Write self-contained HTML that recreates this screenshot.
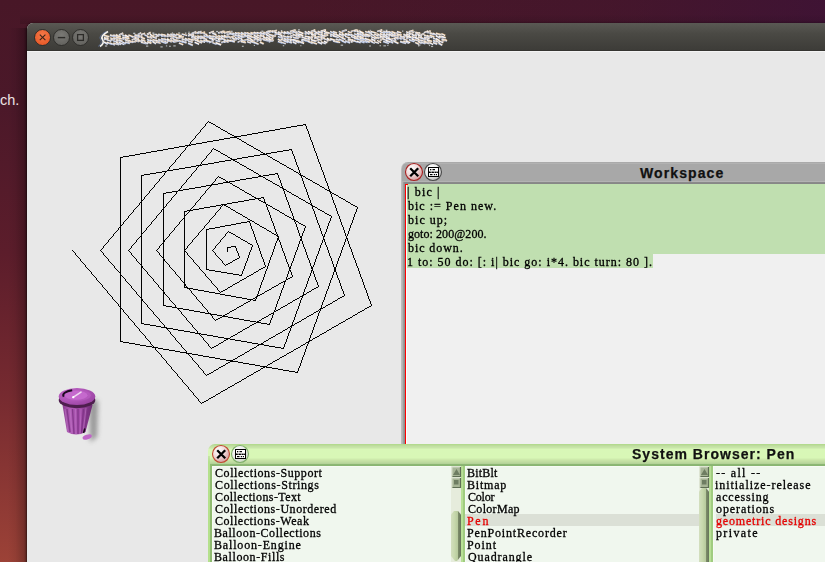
<!DOCTYPE html>
<html><head><meta charset="utf-8">
<style>
*{margin:0;padding:0;box-sizing:border-box}
html,body{width:825px;height:562px;overflow:hidden}
body{position:relative;background:linear-gradient(180deg,#481727 0%,#4b1829 18%,#5c1d2b 45%,#762a30 70%,#9c4237 100%);font-family:"Liberation Sans",sans-serif}
.abs{position:absolute}
#desk-text{left:0px;top:92px;color:#ece2e4;font-size:14.5px}
#uwin{left:27px;top:23px;width:820px;height:560px;border-radius:6px 6px 0 0;background:#e8e8e8;box-shadow:-1px 0 2px rgba(0,0,0,.45)}
#utitle{left:0;top:0;width:100%;height:28px;border-radius:6px 6px 0 0;background:linear-gradient(180deg,#5a5954 0%,#4a4944 40%,#3d3c38 100%);border-bottom:1px solid #363531}
#uline{left:0;top:28px;width:100%;height:1px;background:#f4f4f4}
.ubtn{width:17px;height:17px;border-radius:50%;top:6px}
svg{position:absolute;left:0;top:0}
.pane{font-family:"Liberation Serif",serif;font-size:12px;color:#000;white-space:pre;will-change:transform;-webkit-text-stroke:0.3px currentColor}
.ttl{font-weight:bold;font-size:14px;color:#111;line-height:20px;white-space:pre;-webkit-text-stroke:0.25px #111}
/* workspace */
#ws{left:401px;top:162px;width:500px;height:300px;border-radius:7px 0 0 0;background:linear-gradient(180deg,#aaaaaa 0,#aaaaaa 1px,#b2b2b2 1px,#b2b2b2 2px,#a8a8a8 2px);border-left:1px solid #bdbdbd}
#ws-sep{left:402px;top:181px;width:430px;height:3px;background:linear-gradient(180deg,#b3b3b3 0,#b3b3b3 1px,#8a8a8a 1px,#8a8a8a 2px,#878787 2px)}
#ws-body{left:405px;top:184px;width:430px;height:270px;background:#f0f0f0;border-left:1px solid #ff0000}
#ws-sel{left:406px;top:184px;width:430px;height:70px;background:#c0dfb0}
#ws-sel2{left:406px;top:254px;width:247px;height:14px;background:#c0dfb0}
/* browser */
#br{left:208px;top:444px;width:640px;height:130px;border-radius:7px 0 0 0;background:linear-gradient(180deg,#b3da8e 0px,#b3da8e 1px,#bcdc9b 1px,#bcdc9b 2px,#c3e1a4 2px,#c3e1a4 3px,#c8e5a9 3px,#c8e5a9 4px,#d0eeb0 4px,#d0eeb0 5px,#d8f7b7 5px,#d8f7b7 6px,#d8f7b6 13px,#d8f7b6 14px,#d3f1b2 14px,#d3f1b2 15px,#cde9ab 15px,#cde9ab 16px,#c7e3a6 16px,#c7e3a6 17px,#c2dea2 17px,#c2dea2 18px,#bcd99e 18px,#bcd99e 19px,#b4d398 19px,#b4d398 20px,#8cb774 20px,#8cb774 21px,#8ab572 21px,#8ab572 22px,#b4e08c 22px)}
.list{background:#f0f7ee;top:466px;height:100px;border-left:1px solid #f7fbf5;border-top:1px solid #f7fbf5}
.sb{background:#e6ecdc;top:466px;width:10px;height:100px}
.sep{top:466px;height:100px;background:linear-gradient(90deg,#b8e096 0,#b8e096 50%,#a0cc80 50%,#a0cc80 100%)}
.hl{background:#dbe0d6;height:12px}
.red{color:#e60000}
</style></head><body>
<div class="abs" style="left:8px;top:28px;width:19px;height:540px;background:linear-gradient(90deg,rgba(0,0,0,0) 0,rgba(0,0,0,.06) 40%,rgba(0,0,0,.2) 80%,rgba(0,0,0,.32) 100%)"></div>
<div class="abs" style="left:300px;top:0;width:525px;height:24px;background:linear-gradient(90deg,rgba(62,20,52,0) 0,rgba(62,20,52,.35) 60%,rgba(60,18,56,.75) 100%)"></div>
<div class="abs" style="left:20px;top:14px;width:805px;height:10px;background:linear-gradient(180deg,rgba(0,0,0,0),rgba(0,0,0,.12))"></div>
<svg width="0" height="0" style="position:absolute"><defs><filter id="crisp" x="0" y="0" width="100%" height="100%" color-interpolation-filters="sRGB"><feComponentTransfer><feFuncA type="discrete" tableValues="0 0 1 1 1 1"/></feComponentTransfer></filter></defs></svg>
<div id="desk-text" class="abs">ch.</div>
<div id="uwin" class="abs">
  <div id="utitle" class="abs"></div>
  <div id="uline" class="abs"></div>
  <div class="abs ubtn" style="left:7px;background:radial-gradient(circle at 50% 35%,#f47a4a,#e5511f);border:1px solid #2f2e2b"></div>
  <div class="abs ubtn" style="left:26px;background:radial-gradient(circle at 50% 35%,#7a7975,#5e5d59);border:1px solid #2f2e2b"></div>
  <div class="abs ubtn" style="left:45px;background:radial-gradient(circle at 50% 35%,#7a7975,#5e5d59);border:1px solid #2f2e2b"></div>
</div>
<svg width="100" height="60"><path d="M39.8 34.6L45.4 40.2M45.4 34.6L39.8 40.2" stroke="#3b2418" stroke-width="1.1"/><path d="M57.8 37.6H65.2" stroke="#2c2b28" stroke-width="1.4"/><rect x="77.6" y="34.6" width="5.8" height="5.8" fill="none" stroke="#2c2b28" stroke-width="1.3"/></svg>
<svg width="825" height="60"><path d="M108 31.5 Q100 36 102.5 39.5 Q105 43 100 46.5" stroke="#f2f0ec" stroke-width="1.8" fill="none"/><path d="M106 31.5 Q98 36 100.5 39.5 Q103 43 98 46.5" stroke="#6a8ad0" stroke-width="0.8" fill="none" opacity=".6"/><path d="M104.0 35.4L109.4 36.9" stroke="#fbf1e2" stroke-width="1.9"/><path d="M103.2 36.0L108.6 37.5" stroke="#4a6cc0" stroke-width=".6" opacity=".45"/><path d="M104.8 35.0L110.2 36.5" stroke="#d88a38" stroke-width=".6" opacity=".45"/><path d="M104.0 37.5L108.4 39.2" stroke="#fbf1e2" stroke-width="1.8"/><path d="M103.2 38.1L107.6 39.8" stroke="#4a6cc0" stroke-width=".6" opacity=".45"/><path d="M104.8 37.1L109.2 38.8" stroke="#d88a38" stroke-width=".6" opacity=".45"/><path d="M104.0 39.5L108.2 38.2" stroke="#ffffff" stroke-width="1.9"/><path d="M103.2 40.1L107.4 38.8" stroke="#4a6cc0" stroke-width=".6" opacity=".45"/><path d="M104.8 39.1L109.0 37.8" stroke="#d88a38" stroke-width=".6" opacity=".45"/><path d="M104.0 42.0L107.8 44.1" stroke="#ffffff" stroke-width="1.9"/><path d="M103.2 42.6L107.0 44.7" stroke="#4a6cc0" stroke-width=".6" opacity=".45"/><path d="M104.8 41.6L108.6 43.7" stroke="#d88a38" stroke-width=".6" opacity=".45"/><rect x="104.9" y="45.4" width="2.3" height="1.2" fill="#e0e4ea" opacity=".7"/><path d="M106.7 39.8L111.3 41.3" stroke="#eef0f4" stroke-width="1.5"/><path d="M105.9 40.4L110.5 41.9" stroke="#4a6cc0" stroke-width=".6" opacity=".45"/><path d="M107.5 39.4L112.1 40.9" stroke="#d88a38" stroke-width=".6" opacity=".45"/><path d="M106.7 42.3L111.9 44.3" stroke="#f8f6f2" stroke-width="1.7"/><path d="M105.9 42.9L111.1 44.9" stroke="#4a6cc0" stroke-width=".6" opacity=".45"/><path d="M107.5 41.9L112.7 43.9" stroke="#d88a38" stroke-width=".6" opacity=".45"/><path d="M109.9 35.3L115.8 36.5" stroke="#eef0f4" stroke-width="1.9"/><path d="M109.1 35.9L115.0 37.1" stroke="#4a6cc0" stroke-width=".6" opacity=".45"/><path d="M110.7 34.9L116.6 36.1" stroke="#d88a38" stroke-width=".6" opacity=".45"/><path d="M109.9 37.9L114.9 39.3" stroke="#fbf1e2" stroke-width="1.5"/><path d="M109.1 38.5L114.1 39.9" stroke="#4a6cc0" stroke-width=".6" opacity=".45"/><path d="M110.7 37.5L115.7 38.9" stroke="#d88a38" stroke-width=".6" opacity=".45"/><path d="M109.9 40.7L115.3 38.6" stroke="#eef0f4" stroke-width="1.8"/><path d="M109.1 41.3L114.5 39.2" stroke="#4a6cc0" stroke-width=".6" opacity=".45"/><path d="M110.7 40.3L116.1 38.2" stroke="#d88a38" stroke-width=".6" opacity=".45"/><path d="M109.9 42.9L114.9 45.0" stroke="#eef0f4" stroke-width="1.5"/><path d="M109.1 43.5L114.1 45.6" stroke="#4a6cc0" stroke-width=".6" opacity=".45"/><path d="M110.7 42.5L115.7 44.6" stroke="#d88a38" stroke-width=".6" opacity=".45"/><path d="M113.2 35.2L119.1 36.7" stroke="#eef0f4" stroke-width="1.8"/><path d="M112.4 35.8L118.3 37.3" stroke="#4a6cc0" stroke-width=".6" opacity=".45"/><path d="M114.0 34.8L119.9 36.3" stroke="#d88a38" stroke-width=".6" opacity=".45"/><path d="M113.2 37.9L118.5 39.1" stroke="#fbf1e2" stroke-width="1.6"/><path d="M112.4 38.5L117.7 39.7" stroke="#4a6cc0" stroke-width=".6" opacity=".45"/><path d="M114.0 37.5L119.3 38.7" stroke="#d88a38" stroke-width=".6" opacity=".45"/><path d="M113.2 40.7L117.8 42.1" stroke="#e4ecf8" stroke-width="1.7"/><path d="M112.4 41.3L117.0 42.7" stroke="#4a6cc0" stroke-width=".6" opacity=".45"/><path d="M114.0 40.3L118.6 41.7" stroke="#d88a38" stroke-width=".6" opacity=".45"/><path d="M113.2 43.2L119.2 44.6" stroke="#fbf1e2" stroke-width="1.7"/><path d="M112.4 43.8L118.4 45.2" stroke="#4a6cc0" stroke-width=".6" opacity=".45"/><path d="M114.0 42.8L120.0 44.2" stroke="#d88a38" stroke-width=".6" opacity=".45"/><rect x="115.9" y="33.9" width="1.3" height="1.3" fill="#e6e8ee" opacity=".75"/><path d="M116.1 35.2L120.7 37.0" stroke="#fbf1e2" stroke-width="2.0"/><path d="M115.3 35.8L119.9 37.6" stroke="#4a6cc0" stroke-width=".6" opacity=".45"/><path d="M116.9 34.8L121.5 36.6" stroke="#d88a38" stroke-width=".6" opacity=".45"/><path d="M116.1 37.3L122.0 39.0" stroke="#fbf1e2" stroke-width="1.6"/><path d="M115.3 37.9L121.2 39.6" stroke="#4a6cc0" stroke-width=".6" opacity=".45"/><path d="M116.9 36.9L122.8 38.6" stroke="#d88a38" stroke-width=".6" opacity=".45"/><path d="M116.1 40.0L121.7 41.4" stroke="#fbf1e2" stroke-width="1.9"/><path d="M115.3 40.6L120.9 42.0" stroke="#4a6cc0" stroke-width=".6" opacity=".45"/><path d="M116.9 39.6L122.5 41.0" stroke="#d88a38" stroke-width=".6" opacity=".45"/><path d="M116.1 42.4L121.0 44.4" stroke="#f8f6f2" stroke-width="1.9"/><path d="M115.3 43.0L120.2 45.0" stroke="#4a6cc0" stroke-width=".6" opacity=".45"/><path d="M116.9 42.0L121.8 44.0" stroke="#d88a38" stroke-width=".6" opacity=".45"/><path d="M119.0 35.1L123.2 33.2" stroke="#eef0f4" stroke-width="1.9"/><path d="M118.2 35.7L122.4 33.8" stroke="#4a6cc0" stroke-width=".6" opacity=".45"/><path d="M119.8 34.7L124.0 32.8" stroke="#d88a38" stroke-width=".6" opacity=".45"/><path d="M119.0 39.9L122.6 41.5" stroke="#eef0f4" stroke-width="1.8"/><path d="M118.2 40.5L121.8 42.1" stroke="#4a6cc0" stroke-width=".6" opacity=".45"/><path d="M119.8 39.5L123.4 41.1" stroke="#d88a38" stroke-width=".6" opacity=".45"/><path d="M119.0 42.5L124.5 44.5" stroke="#eef0f4" stroke-width="1.8"/><path d="M118.2 43.1L123.7 45.1" stroke="#4a6cc0" stroke-width=".6" opacity=".45"/><path d="M119.8 42.1L125.3 44.1" stroke="#d88a38" stroke-width=".6" opacity=".45"/><path d="M122.3 35.1L128.3 37.2" stroke="#e4ecf8" stroke-width="1.6"/><path d="M121.5 35.7L127.5 37.8" stroke="#4a6cc0" stroke-width=".6" opacity=".45"/><path d="M123.1 34.7L129.1 36.8" stroke="#d88a38" stroke-width=".6" opacity=".45"/><path d="M122.3 37.2L128.0 39.1" stroke="#f8f6f2" stroke-width="1.9"/><path d="M121.5 37.8L127.2 39.7" stroke="#4a6cc0" stroke-width=".6" opacity=".45"/><path d="M123.1 36.8L128.8 38.7" stroke="#d88a38" stroke-width=".6" opacity=".45"/><path d="M122.3 39.3L127.3 37.4" stroke="#eef0f4" stroke-width="1.8"/><path d="M121.5 39.9L126.5 38.0" stroke="#4a6cc0" stroke-width=".6" opacity=".45"/><path d="M123.1 38.9L128.1 37.0" stroke="#d88a38" stroke-width=".6" opacity=".45"/><path d="M122.3 41.9L125.9 43.7" stroke="#e4ecf8" stroke-width="1.7"/><path d="M121.5 42.5L125.1 44.3" stroke="#4a6cc0" stroke-width=".6" opacity=".45"/><path d="M123.1 41.5L126.7 43.3" stroke="#d88a38" stroke-width=".6" opacity=".45"/><path d="M125.0 35.0L129.0 37.2" stroke="#ffffff" stroke-width="1.6"/><path d="M124.2 35.6L128.2 37.8" stroke="#4a6cc0" stroke-width=".6" opacity=".45"/><path d="M125.8 34.6L129.8 36.8" stroke="#d88a38" stroke-width=".6" opacity=".45"/><path d="M125.0 37.4L129.5 38.7" stroke="#fbf1e2" stroke-width="1.8"/><path d="M124.2 38.0L128.7 39.3" stroke="#4a6cc0" stroke-width=".6" opacity=".45"/><path d="M125.8 37.0L130.3 38.3" stroke="#d88a38" stroke-width=".6" opacity=".45"/><path d="M125.0 39.6L129.4 41.6" stroke="#fbf1e2" stroke-width="2.0"/><path d="M124.2 40.2L128.6 42.2" stroke="#4a6cc0" stroke-width=".6" opacity=".45"/><path d="M125.8 39.2L130.2 41.2" stroke="#d88a38" stroke-width=".6" opacity=".45"/><path d="M125.0 42.2L129.8 43.5" stroke="#e4ecf8" stroke-width="1.8"/><path d="M124.2 42.8L129.0 44.1" stroke="#4a6cc0" stroke-width=".6" opacity=".45"/><path d="M125.8 41.8L130.6 43.1" stroke="#d88a38" stroke-width=".6" opacity=".45"/><path d="M128.3 34.9L132.9 36.7" stroke="#fbf1e2" stroke-width="1.6"/><path d="M127.5 35.5L132.1 37.3" stroke="#4a6cc0" stroke-width=".6" opacity=".45"/><path d="M129.1 34.5L133.7 36.3" stroke="#d88a38" stroke-width=".6" opacity=".45"/><path d="M128.3 40.2L132.7 41.9" stroke="#fbf1e2" stroke-width="1.6"/><path d="M127.5 40.8L131.9 42.5" stroke="#4a6cc0" stroke-width=".6" opacity=".45"/><path d="M129.1 39.8L133.5 41.5" stroke="#d88a38" stroke-width=".6" opacity=".45"/><path d="M128.3 42.7L133.4 41.2" stroke="#fbf1e2" stroke-width="1.7"/><path d="M127.5 43.3L132.6 41.8" stroke="#4a6cc0" stroke-width=".6" opacity=".45"/><path d="M129.1 42.3L134.2 40.8" stroke="#d88a38" stroke-width=".6" opacity=".45"/><path d="M131.7 37.3L137.7 35.8" stroke="#eef0f4" stroke-width="1.7"/><path d="M130.9 37.9L136.9 36.4" stroke="#4a6cc0" stroke-width=".6" opacity=".45"/><path d="M132.5 36.9L138.5 35.4" stroke="#d88a38" stroke-width=".6" opacity=".45"/><path d="M131.7 40.1L135.9 38.3" stroke="#f8f6f2" stroke-width="1.6"/><path d="M130.9 40.7L135.1 38.9" stroke="#4a6cc0" stroke-width=".6" opacity=".45"/><path d="M132.5 39.7L136.7 37.9" stroke="#d88a38" stroke-width=".6" opacity=".45"/><path d="M131.7 42.5L137.2 40.7" stroke="#f8f6f2" stroke-width="1.7"/><path d="M130.9 43.1L136.4 41.3" stroke="#4a6cc0" stroke-width=".6" opacity=".45"/><path d="M132.5 42.1L138.0 40.3" stroke="#d88a38" stroke-width=".6" opacity=".45"/><rect x="133.2" y="32.7" width="2.1" height="1.3" fill="#e6e8ee" opacity=".75"/><path d="M134.5 34.8L140.5 36.3" stroke="#f8f6f2" stroke-width="1.9"/><path d="M133.7 35.4L139.7 36.9" stroke="#4a6cc0" stroke-width=".6" opacity=".45"/><path d="M135.3 34.4L141.3 35.9" stroke="#d88a38" stroke-width=".6" opacity=".45"/><path d="M134.5 37.2L138.8 39.1" stroke="#fbf1e2" stroke-width="1.7"/><path d="M133.7 37.8L138.0 39.7" stroke="#4a6cc0" stroke-width=".6" opacity=".45"/><path d="M135.3 36.8L139.6 38.7" stroke="#d88a38" stroke-width=".6" opacity=".45"/><path d="M134.5 39.9L138.0 38.1" stroke="#f8f6f2" stroke-width="1.9"/><path d="M133.7 40.5L137.2 38.7" stroke="#4a6cc0" stroke-width=".6" opacity=".45"/><path d="M135.3 39.5L138.8 37.7" stroke="#d88a38" stroke-width=".6" opacity=".45"/><path d="M134.5 41.9L139.1 40.0" stroke="#fbf1e2" stroke-width="1.7"/><path d="M133.7 42.5L138.3 40.6" stroke="#4a6cc0" stroke-width=".6" opacity=".45"/><path d="M135.3 41.5L139.9 39.6" stroke="#d88a38" stroke-width=".6" opacity=".45"/><path d="M137.7 34.7L141.2 32.8" stroke="#e4ecf8" stroke-width="1.6"/><path d="M136.9 35.3L140.4 33.4" stroke="#4a6cc0" stroke-width=".6" opacity=".45"/><path d="M138.5 34.3L142.0 32.4" stroke="#d88a38" stroke-width=".6" opacity=".45"/><path d="M137.7 37.5L142.4 35.8" stroke="#eef0f4" stroke-width="1.8"/><path d="M136.9 38.1L141.6 36.4" stroke="#4a6cc0" stroke-width=".6" opacity=".45"/><path d="M138.5 37.1L143.2 35.4" stroke="#d88a38" stroke-width=".6" opacity=".45"/><path d="M137.7 39.9L143.1 41.8" stroke="#f8f6f2" stroke-width="1.9"/><path d="M136.9 40.5L142.3 42.4" stroke="#4a6cc0" stroke-width=".6" opacity=".45"/><path d="M138.5 39.5L143.9 41.4" stroke="#d88a38" stroke-width=".6" opacity=".45"/><path d="M137.7 41.9L143.7 39.9" stroke="#fbf1e2" stroke-width="1.5"/><path d="M136.9 42.5L142.9 40.5" stroke="#4a6cc0" stroke-width=".6" opacity=".45"/><path d="M138.5 41.5L144.5 39.5" stroke="#d88a38" stroke-width=".6" opacity=".45"/><path d="M140.9 34.7L145.1 33.3" stroke="#ffffff" stroke-width="1.6"/><path d="M140.1 35.3L144.3 33.9" stroke="#4a6cc0" stroke-width=".6" opacity=".45"/><path d="M141.7 34.3L145.9 32.9" stroke="#d88a38" stroke-width=".6" opacity=".45"/><path d="M140.9 37.3L144.9 38.8" stroke="#fbf1e2" stroke-width="1.9"/><path d="M140.1 37.9L144.1 39.4" stroke="#4a6cc0" stroke-width=".6" opacity=".45"/><path d="M141.7 36.9L145.7 38.4" stroke="#d88a38" stroke-width=".6" opacity=".45"/><path d="M140.9 39.8L145.4 41.3" stroke="#f8f6f2" stroke-width="1.7"/><path d="M140.1 40.4L144.6 41.9" stroke="#4a6cc0" stroke-width=".6" opacity=".45"/><path d="M141.7 39.4L146.2 40.9" stroke="#d88a38" stroke-width=".6" opacity=".45"/><path d="M140.9 42.3L146.7 43.8" stroke="#f8f6f2" stroke-width="1.6"/><path d="M140.1 42.9L145.9 44.4" stroke="#4a6cc0" stroke-width=".6" opacity=".45"/><path d="M141.7 41.9L147.5 43.4" stroke="#d88a38" stroke-width=".6" opacity=".45"/><path d="M144.3 34.6L148.3 36.6" stroke="#e4ecf8" stroke-width="1.6"/><path d="M143.5 35.2L147.5 37.2" stroke="#4a6cc0" stroke-width=".6" opacity=".45"/><path d="M145.1 34.2L149.1 36.2" stroke="#d88a38" stroke-width=".6" opacity=".45"/><path d="M144.3 41.9L148.1 43.7" stroke="#eef0f4" stroke-width="1.5"/><path d="M143.5 42.5L147.3 44.3" stroke="#4a6cc0" stroke-width=".6" opacity=".45"/><path d="M145.1 41.5L148.9 43.3" stroke="#d88a38" stroke-width=".6" opacity=".45"/><rect x="146.0" y="45.5" width="2.3" height="1.2" fill="#e0e4ea" opacity=".7"/><path d="M147.1 34.6L150.7 32.4" stroke="#f8f6f2" stroke-width="1.9"/><path d="M146.3 35.2L149.9 33.0" stroke="#4a6cc0" stroke-width=".6" opacity=".45"/><path d="M147.9 34.2L151.5 32.0" stroke="#d88a38" stroke-width=".6" opacity=".45"/><path d="M147.1 36.9L152.5 38.2" stroke="#fbf1e2" stroke-width="1.9"/><path d="M146.3 37.5L151.7 38.8" stroke="#4a6cc0" stroke-width=".6" opacity=".45"/><path d="M147.9 36.5L153.3 37.8" stroke="#d88a38" stroke-width=".6" opacity=".45"/><path d="M147.1 39.4L151.2 41.4" stroke="#e4ecf8" stroke-width="1.9"/><path d="M146.3 40.0L150.4 42.0" stroke="#4a6cc0" stroke-width=".6" opacity=".45"/><path d="M147.9 39.0L152.0 41.0" stroke="#d88a38" stroke-width=".6" opacity=".45"/><path d="M147.1 41.7L151.5 43.3" stroke="#fbf1e2" stroke-width="2.0"/><path d="M146.3 42.3L150.7 43.9" stroke="#4a6cc0" stroke-width=".6" opacity=".45"/><path d="M147.9 41.3L152.3 42.9" stroke="#d88a38" stroke-width=".6" opacity=".45"/><path d="M149.9 34.5L153.5 36.2" stroke="#ffffff" stroke-width="1.6"/><path d="M149.1 35.1L152.7 36.8" stroke="#4a6cc0" stroke-width=".6" opacity=".45"/><path d="M150.7 34.1L154.3 35.8" stroke="#d88a38" stroke-width=".6" opacity=".45"/><path d="M149.9 37.3L154.2 35.1" stroke="#fbf1e2" stroke-width="1.7"/><path d="M149.1 37.9L153.4 35.7" stroke="#4a6cc0" stroke-width=".6" opacity=".45"/><path d="M150.7 36.9L155.0 34.7" stroke="#d88a38" stroke-width=".6" opacity=".45"/><path d="M149.9 40.0L154.5 41.3" stroke="#ffffff" stroke-width="1.8"/><path d="M149.1 40.6L153.7 41.9" stroke="#4a6cc0" stroke-width=".6" opacity=".45"/><path d="M150.7 39.6L155.3 40.9" stroke="#d88a38" stroke-width=".6" opacity=".45"/><rect x="152.3" y="32.5" width="2.0" height="1.3" fill="#e6e8ee" opacity=".75"/><path d="M152.5 36.7L156.8 38.4" stroke="#f8f6f2" stroke-width="1.8"/><path d="M151.7 37.3L156.0 39.0" stroke="#4a6cc0" stroke-width=".6" opacity=".45"/><path d="M153.3 36.3L157.6 38.0" stroke="#d88a38" stroke-width=".6" opacity=".45"/><path d="M152.5 39.5L157.7 41.4" stroke="#fbf1e2" stroke-width="1.8"/><path d="M151.7 40.1L156.9 42.0" stroke="#4a6cc0" stroke-width=".6" opacity=".45"/><path d="M153.3 39.1L158.5 41.0" stroke="#d88a38" stroke-width=".6" opacity=".45"/><path d="M152.5 41.6L156.0 43.7" stroke="#f8f6f2" stroke-width="1.8"/><path d="M151.7 42.2L155.2 44.3" stroke="#4a6cc0" stroke-width=".6" opacity=".45"/><path d="M153.3 41.2L156.8 43.3" stroke="#d88a38" stroke-width=".6" opacity=".45"/><rect x="153.6" y="33.8" width="2.5" height="1.3" fill="#e6e8ee" opacity=".75"/><path d="M155.5 34.4L159.4 36.0" stroke="#f8f6f2" stroke-width="1.8"/><path d="M154.7 35.0L158.6 36.6" stroke="#4a6cc0" stroke-width=".6" opacity=".45"/><path d="M156.3 34.0L160.2 35.6" stroke="#d88a38" stroke-width=".6" opacity=".45"/><path d="M155.5 37.2L159.1 35.4" stroke="#ffffff" stroke-width="1.5"/><path d="M154.7 37.8L158.3 36.0" stroke="#4a6cc0" stroke-width=".6" opacity=".45"/><path d="M156.3 36.8L159.9 35.0" stroke="#d88a38" stroke-width=".6" opacity=".45"/><path d="M155.5 40.0L159.8 42.0" stroke="#f8f6f2" stroke-width="1.6"/><path d="M154.7 40.6L159.0 42.6" stroke="#4a6cc0" stroke-width=".6" opacity=".45"/><path d="M156.3 39.6L160.6 41.6" stroke="#d88a38" stroke-width=".6" opacity=".45"/><path d="M155.5 42.0L160.7 43.3" stroke="#fbf1e2" stroke-width="1.7"/><path d="M154.7 42.6L159.9 43.9" stroke="#4a6cc0" stroke-width=".6" opacity=".45"/><path d="M156.3 41.6L161.5 42.9" stroke="#d88a38" stroke-width=".6" opacity=".45"/><path d="M158.1 34.3L164.0 35.7" stroke="#e4ecf8" stroke-width="1.8"/><path d="M157.3 34.9L163.2 36.3" stroke="#4a6cc0" stroke-width=".6" opacity=".45"/><path d="M158.9 33.9L164.8 35.3" stroke="#d88a38" stroke-width=".6" opacity=".45"/><path d="M158.1 39.2L164.1 41.1" stroke="#e4ecf8" stroke-width="1.5"/><path d="M157.3 39.8L163.3 41.7" stroke="#4a6cc0" stroke-width=".6" opacity=".45"/><path d="M158.9 38.8L164.9 40.7" stroke="#d88a38" stroke-width=".6" opacity=".45"/><path d="M158.1 41.7L162.5 39.9" stroke="#e4ecf8" stroke-width="1.9"/><path d="M157.3 42.3L161.7 40.5" stroke="#4a6cc0" stroke-width=".6" opacity=".45"/><path d="M158.9 41.3L163.3 39.5" stroke="#d88a38" stroke-width=".6" opacity=".45"/><rect x="160.4" y="46.3" width="2.3" height="1.2" fill="#e0e4ea" opacity=".7"/><path d="M161.1 34.3L165.9 35.6" stroke="#fbf1e2" stroke-width="1.7"/><path d="M160.3 34.9L165.1 36.2" stroke="#4a6cc0" stroke-width=".6" opacity=".45"/><path d="M161.9 33.9L166.7 35.2" stroke="#d88a38" stroke-width=".6" opacity=".45"/><path d="M161.1 36.3L164.9 34.9" stroke="#e4ecf8" stroke-width="1.8"/><path d="M160.3 36.9L164.1 35.5" stroke="#4a6cc0" stroke-width=".6" opacity=".45"/><path d="M161.9 35.9L165.7 34.5" stroke="#d88a38" stroke-width=".6" opacity=".45"/><path d="M161.1 38.7L166.4 40.0" stroke="#eef0f4" stroke-width="1.9"/><path d="M160.3 39.3L165.6 40.6" stroke="#4a6cc0" stroke-width=".6" opacity=".45"/><path d="M161.9 38.3L167.2 39.6" stroke="#d88a38" stroke-width=".6" opacity=".45"/><path d="M161.1 41.4L166.6 43.3" stroke="#eef0f4" stroke-width="1.8"/><path d="M160.3 42.0L165.8 43.9" stroke="#4a6cc0" stroke-width=".6" opacity=".45"/><path d="M161.9 41.0L167.4 42.9" stroke="#d88a38" stroke-width=".6" opacity=".45"/><path d="M164.3 36.8L168.4 35.5" stroke="#e4ecf8" stroke-width="1.6"/><path d="M163.5 37.4L167.6 36.1" stroke="#4a6cc0" stroke-width=".6" opacity=".45"/><path d="M165.1 36.4L169.2 35.1" stroke="#d88a38" stroke-width=".6" opacity=".45"/><path d="M164.3 38.9L169.5 40.9" stroke="#f8f6f2" stroke-width="1.5"/><path d="M163.5 39.5L168.7 41.5" stroke="#4a6cc0" stroke-width=".6" opacity=".45"/><path d="M165.1 38.5L170.3 40.5" stroke="#d88a38" stroke-width=".6" opacity=".45"/><path d="M164.3 41.4L167.9 42.8" stroke="#eef0f4" stroke-width="1.7"/><path d="M163.5 42.0L167.1 43.4" stroke="#4a6cc0" stroke-width=".6" opacity=".45"/><path d="M165.1 41.0L168.7 42.4" stroke="#d88a38" stroke-width=".6" opacity=".45"/><rect x="165.9" y="45.3" width="1.3" height="1.2" fill="#e0e4ea" opacity=".7"/><path d="M167.0 34.2L170.9 35.5" stroke="#eef0f4" stroke-width="1.8"/><path d="M166.2 34.8L170.1 36.1" stroke="#4a6cc0" stroke-width=".6" opacity=".45"/><path d="M167.8 33.8L171.7 35.1" stroke="#d88a38" stroke-width=".6" opacity=".45"/><path d="M167.0 36.7L172.8 35.1" stroke="#f8f6f2" stroke-width="1.7"/><path d="M166.2 37.3L172.0 35.7" stroke="#4a6cc0" stroke-width=".6" opacity=".45"/><path d="M167.8 36.3L173.6 34.7" stroke="#d88a38" stroke-width=".6" opacity=".45"/><path d="M167.0 38.9L170.9 41.1" stroke="#ffffff" stroke-width="1.8"/><path d="M166.2 39.5L170.1 41.7" stroke="#4a6cc0" stroke-width=".6" opacity=".45"/><path d="M167.8 38.5L171.7 40.7" stroke="#d88a38" stroke-width=".6" opacity=".45"/><path d="M167.0 41.4L172.5 40.2" stroke="#f8f6f2" stroke-width="1.6"/><path d="M166.2 42.0L171.7 40.8" stroke="#4a6cc0" stroke-width=".6" opacity=".45"/><path d="M167.8 41.0L173.3 39.8" stroke="#d88a38" stroke-width=".6" opacity=".45"/><rect x="169.1" y="45.7" width="1.7" height="1.2" fill="#e0e4ea" opacity=".7"/><path d="M170.3 34.1L175.0 35.5" stroke="#eef0f4" stroke-width="1.7"/><path d="M169.5 34.7L174.2 36.1" stroke="#4a6cc0" stroke-width=".6" opacity=".45"/><path d="M171.1 33.7L175.8 35.1" stroke="#d88a38" stroke-width=".6" opacity=".45"/><path d="M170.3 36.9L175.9 35.5" stroke="#fbf1e2" stroke-width="1.7"/><path d="M169.5 37.5L175.1 36.1" stroke="#4a6cc0" stroke-width=".6" opacity=".45"/><path d="M171.1 36.5L176.7 35.1" stroke="#d88a38" stroke-width=".6" opacity=".45"/><path d="M170.3 39.1L174.0 37.6" stroke="#f8f6f2" stroke-width="1.9"/><path d="M169.5 39.7L173.2 38.2" stroke="#4a6cc0" stroke-width=".6" opacity=".45"/><path d="M171.1 38.7L174.8 37.2" stroke="#d88a38" stroke-width=".6" opacity=".45"/><path d="M170.3 41.8L175.6 40.0" stroke="#fbf1e2" stroke-width="1.9"/><path d="M169.5 42.4L174.8 40.6" stroke="#4a6cc0" stroke-width=".6" opacity=".45"/><path d="M171.1 41.4L176.4 39.6" stroke="#d88a38" stroke-width=".6" opacity=".45"/><rect x="171.8" y="32.4" width="1.3" height="1.3" fill="#e6e8ee" opacity=".75"/><path d="M173.2 34.0L176.7 35.7" stroke="#e4ecf8" stroke-width="1.7"/><path d="M172.4 34.6L175.9 36.3" stroke="#4a6cc0" stroke-width=".6" opacity=".45"/><path d="M174.0 33.6L177.5 35.3" stroke="#d88a38" stroke-width=".6" opacity=".45"/><path d="M173.2 36.6L179.1 38.2" stroke="#e4ecf8" stroke-width="1.6"/><path d="M172.4 37.2L178.3 38.8" stroke="#4a6cc0" stroke-width=".6" opacity=".45"/><path d="M174.0 36.2L179.9 37.8" stroke="#d88a38" stroke-width=".6" opacity=".45"/><path d="M173.2 39.4L178.6 40.6" stroke="#eef0f4" stroke-width="1.6"/><path d="M172.4 40.0L177.8 41.2" stroke="#4a6cc0" stroke-width=".6" opacity=".45"/><path d="M174.0 39.0L179.4 40.2" stroke="#d88a38" stroke-width=".6" opacity=".45"/><path d="M173.2 42.0L178.8 40.8" stroke="#eef0f4" stroke-width="2.0"/><path d="M172.4 42.6L178.0 41.4" stroke="#4a6cc0" stroke-width=".6" opacity=".45"/><path d="M174.0 41.6L179.6 40.4" stroke="#d88a38" stroke-width=".6" opacity=".45"/><rect x="173.3" y="45.3" width="2.4" height="1.2" fill="#e0e4ea" opacity=".7"/><path d="M176.0 34.0L181.9 36.1" stroke="#fbf1e2" stroke-width="1.8"/><path d="M175.2 34.6L181.1 36.7" stroke="#4a6cc0" stroke-width=".6" opacity=".45"/><path d="M176.8 33.6L182.7 35.7" stroke="#d88a38" stroke-width=".6" opacity=".45"/><path d="M176.0 38.6L179.6 36.8" stroke="#fbf1e2" stroke-width="1.6"/><path d="M175.2 39.2L178.8 37.4" stroke="#4a6cc0" stroke-width=".6" opacity=".45"/><path d="M176.8 38.2L180.4 36.4" stroke="#d88a38" stroke-width=".6" opacity=".45"/><rect x="178.1" y="32.4" width="2.1" height="1.3" fill="#e6e8ee" opacity=".75"/><path d="M178.9 36.1L183.1 37.7" stroke="#ffffff" stroke-width="1.5"/><path d="M178.1 36.7L182.3 38.3" stroke="#4a6cc0" stroke-width=".6" opacity=".45"/><path d="M179.7 35.7L183.9 37.3" stroke="#d88a38" stroke-width=".6" opacity=".45"/><path d="M178.9 38.2L183.9 36.6" stroke="#fbf1e2" stroke-width="1.6"/><path d="M178.1 38.8L183.1 37.2" stroke="#4a6cc0" stroke-width=".6" opacity=".45"/><path d="M179.7 37.8L184.7 36.2" stroke="#d88a38" stroke-width=".6" opacity=".45"/><path d="M178.9 40.7L183.5 42.2" stroke="#e4ecf8" stroke-width="1.9"/><path d="M178.1 41.3L182.7 42.8" stroke="#4a6cc0" stroke-width=".6" opacity=".45"/><path d="M179.7 40.3L184.3 41.8" stroke="#d88a38" stroke-width=".6" opacity=".45"/><path d="M178.9 43.1L183.2 44.8" stroke="#fbf1e2" stroke-width="1.6"/><path d="M178.1 43.7L182.4 45.4" stroke="#4a6cc0" stroke-width=".6" opacity=".45"/><path d="M179.7 42.7L184.0 44.4" stroke="#d88a38" stroke-width=".6" opacity=".45"/><path d="M181.6 33.9L187.2 35.5" stroke="#eef0f4" stroke-width="1.6"/><path d="M180.8 34.5L186.4 36.1" stroke="#4a6cc0" stroke-width=".6" opacity=".45"/><path d="M182.4 33.5L188.0 35.1" stroke="#d88a38" stroke-width=".6" opacity=".45"/><path d="M181.6 38.9L187.1 40.2" stroke="#f8f6f2" stroke-width="1.6"/><path d="M180.8 39.5L186.3 40.8" stroke="#4a6cc0" stroke-width=".6" opacity=".45"/><path d="M182.4 38.5L187.9 39.8" stroke="#d88a38" stroke-width=".6" opacity=".45"/><path d="M181.6 41.0L186.6 42.9" stroke="#e4ecf8" stroke-width="1.9"/><path d="M180.8 41.6L185.8 43.5" stroke="#4a6cc0" stroke-width=".6" opacity=".45"/><path d="M182.4 40.6L187.4 42.5" stroke="#d88a38" stroke-width=".6" opacity=".45"/><path d="M184.9 38.4L188.6 40.0" stroke="#eef0f4" stroke-width="1.7"/><path d="M184.1 39.0L187.8 40.6" stroke="#4a6cc0" stroke-width=".6" opacity=".45"/><path d="M185.7 38.0L189.4 39.6" stroke="#d88a38" stroke-width=".6" opacity=".45"/><path d="M184.9 40.9L188.6 39.7" stroke="#e4ecf8" stroke-width="1.7"/><path d="M184.1 41.5L187.8 40.3" stroke="#4a6cc0" stroke-width=".6" opacity=".45"/><path d="M185.7 40.5L189.4 39.3" stroke="#d88a38" stroke-width=".6" opacity=".45"/><rect x="184.9" y="32.5" width="1.5" height="1.3" fill="#e6e8ee" opacity=".75"/><path d="M188.1 33.7L194.0 35.4" stroke="#f8f6f2" stroke-width="1.6"/><path d="M187.3 34.3L193.2 36.0" stroke="#4a6cc0" stroke-width=".6" opacity=".45"/><path d="M188.9 33.3L194.8 35.0" stroke="#d88a38" stroke-width=".6" opacity=".45"/><path d="M188.1 36.0L193.9 34.3" stroke="#ffffff" stroke-width="1.6"/><path d="M187.3 36.6L193.1 34.9" stroke="#4a6cc0" stroke-width=".6" opacity=".45"/><path d="M188.9 35.6L194.7 33.9" stroke="#d88a38" stroke-width=".6" opacity=".45"/><path d="M188.1 38.6L193.1 40.6" stroke="#fbf1e2" stroke-width="1.7"/><path d="M187.3 39.2L192.3 41.2" stroke="#4a6cc0" stroke-width=".6" opacity=".45"/><path d="M188.9 38.2L193.9 40.2" stroke="#d88a38" stroke-width=".6" opacity=".45"/><path d="M188.1 41.0L192.7 42.3" stroke="#eef0f4" stroke-width="1.8"/><path d="M187.3 41.6L191.9 42.9" stroke="#4a6cc0" stroke-width=".6" opacity=".45"/><path d="M188.9 40.6L193.5 41.9" stroke="#d88a38" stroke-width=".6" opacity=".45"/><path d="M188.1 43.2L192.8 45.3" stroke="#e4ecf8" stroke-width="1.9"/><path d="M187.3 43.8L192.0 45.9" stroke="#4a6cc0" stroke-width=".6" opacity=".45"/><path d="M188.9 42.8L193.6 44.9" stroke="#d88a38" stroke-width=".6" opacity=".45"/><rect x="188.4" y="31.6" width="1.2" height="1.3" fill="#e6e8ee" opacity=".75"/><path d="M191.4 33.7L196.3 31.5" stroke="#e4ecf8" stroke-width="1.5"/><path d="M190.6 34.3L195.5 32.1" stroke="#4a6cc0" stroke-width=".6" opacity=".45"/><path d="M192.2 33.3L197.1 31.1" stroke="#d88a38" stroke-width=".6" opacity=".45"/><path d="M191.4 35.8L194.9 37.9" stroke="#eef0f4" stroke-width="1.8"/><path d="M190.6 36.4L194.1 38.5" stroke="#4a6cc0" stroke-width=".6" opacity=".45"/><path d="M192.2 35.4L195.7 37.5" stroke="#d88a38" stroke-width=".6" opacity=".45"/><path d="M191.4 38.2L195.3 36.3" stroke="#e4ecf8" stroke-width="2.0"/><path d="M190.6 38.8L194.5 36.9" stroke="#4a6cc0" stroke-width=".6" opacity=".45"/><path d="M192.2 37.8L196.1 35.9" stroke="#d88a38" stroke-width=".6" opacity=".45"/><path d="M191.4 40.7L195.4 38.7" stroke="#fbf1e2" stroke-width="1.9"/><path d="M190.6 41.3L194.6 39.3" stroke="#4a6cc0" stroke-width=".6" opacity=".45"/><path d="M192.2 40.3L196.2 38.3" stroke="#d88a38" stroke-width=".6" opacity=".45"/><rect x="192.4" y="32.6" width="1.3" height="1.3" fill="#e6e8ee" opacity=".75"/><path d="M194.6 33.6L199.1 32.3" stroke="#fbf1e2" stroke-width="1.6"/><path d="M193.8 34.2L198.3 32.9" stroke="#4a6cc0" stroke-width=".6" opacity=".45"/><path d="M195.4 33.2L199.9 31.9" stroke="#d88a38" stroke-width=".6" opacity=".45"/><path d="M194.6 35.9L199.7 37.8" stroke="#fbf1e2" stroke-width="1.5"/><path d="M193.8 36.5L198.9 38.4" stroke="#4a6cc0" stroke-width=".6" opacity=".45"/><path d="M195.4 35.5L200.5 37.4" stroke="#d88a38" stroke-width=".6" opacity=".45"/><path d="M194.6 37.9L198.5 39.7" stroke="#fbf1e2" stroke-width="2.0"/><path d="M193.8 38.5L197.7 40.3" stroke="#4a6cc0" stroke-width=".6" opacity=".45"/><path d="M195.4 37.5L199.3 39.3" stroke="#d88a38" stroke-width=".6" opacity=".45"/><path d="M194.6 40.0L200.4 41.7" stroke="#f8f6f2" stroke-width="1.6"/><path d="M193.8 40.6L199.6 42.3" stroke="#4a6cc0" stroke-width=".6" opacity=".45"/><path d="M195.4 39.6L201.2 41.3" stroke="#d88a38" stroke-width=".6" opacity=".45"/><path d="M194.6 42.2L199.1 44.3" stroke="#ffffff" stroke-width="1.6"/><path d="M193.8 42.8L198.3 44.9" stroke="#4a6cc0" stroke-width=".6" opacity=".45"/><path d="M195.4 41.8L199.9 43.9" stroke="#d88a38" stroke-width=".6" opacity=".45"/><path d="M197.3 33.6L201.6 31.4" stroke="#e4ecf8" stroke-width="1.8"/><path d="M196.5 34.2L200.8 32.0" stroke="#4a6cc0" stroke-width=".6" opacity=".45"/><path d="M198.1 33.2L202.4 31.0" stroke="#d88a38" stroke-width=".6" opacity=".45"/><path d="M197.3 35.7L201.5 37.4" stroke="#fbf1e2" stroke-width="1.6"/><path d="M196.5 36.3L200.7 38.0" stroke="#4a6cc0" stroke-width=".6" opacity=".45"/><path d="M198.1 35.3L202.3 37.0" stroke="#d88a38" stroke-width=".6" opacity=".45"/><path d="M197.3 38.3L202.8 36.5" stroke="#ffffff" stroke-width="1.8"/><path d="M196.5 38.9L202.0 37.1" stroke="#4a6cc0" stroke-width=".6" opacity=".45"/><path d="M198.1 37.9L203.6 36.1" stroke="#d88a38" stroke-width=".6" opacity=".45"/><path d="M197.3 40.9L202.1 42.9" stroke="#fbf1e2" stroke-width="1.9"/><path d="M196.5 41.5L201.3 43.5" stroke="#4a6cc0" stroke-width=".6" opacity=".45"/><path d="M198.1 40.5L202.9 42.5" stroke="#d88a38" stroke-width=".6" opacity=".45"/><rect x="197.7" y="31.2" width="1.9" height="1.3" fill="#e6e8ee" opacity=".75"/><path d="M200.2 33.5L205.1 32.1" stroke="#fbf1e2" stroke-width="1.7"/><path d="M199.4 34.1L204.3 32.7" stroke="#4a6cc0" stroke-width=".6" opacity=".45"/><path d="M201.0 33.1L205.9 31.7" stroke="#d88a38" stroke-width=".6" opacity=".45"/><path d="M200.2 36.2L204.8 37.5" stroke="#e4ecf8" stroke-width="1.8"/><path d="M199.4 36.8L204.0 38.1" stroke="#4a6cc0" stroke-width=".6" opacity=".45"/><path d="M201.0 35.8L205.6 37.1" stroke="#d88a38" stroke-width=".6" opacity=".45"/><path d="M200.2 38.7L204.6 37.4" stroke="#ffffff" stroke-width="1.7"/><path d="M199.4 39.3L203.8 38.0" stroke="#4a6cc0" stroke-width=".6" opacity=".45"/><path d="M201.0 38.3L205.4 37.0" stroke="#d88a38" stroke-width=".6" opacity=".45"/><path d="M200.2 40.7L205.1 42.0" stroke="#f8f6f2" stroke-width="1.9"/><path d="M199.4 41.3L204.3 42.6" stroke="#4a6cc0" stroke-width=".6" opacity=".45"/><path d="M201.0 40.3L205.9 41.6" stroke="#d88a38" stroke-width=".6" opacity=".45"/><path d="M203.4 33.4L207.3 34.7" stroke="#eef0f4" stroke-width="1.6"/><path d="M202.6 34.0L206.5 35.3" stroke="#4a6cc0" stroke-width=".6" opacity=".45"/><path d="M204.2 33.0L208.1 34.3" stroke="#d88a38" stroke-width=".6" opacity=".45"/><path d="M203.4 35.6L208.9 37.3" stroke="#e4ecf8" stroke-width="1.9"/><path d="M202.6 36.2L208.1 37.9" stroke="#4a6cc0" stroke-width=".6" opacity=".45"/><path d="M204.2 35.2L209.7 36.9" stroke="#d88a38" stroke-width=".6" opacity=".45"/><path d="M203.4 38.4L207.2 39.6" stroke="#eef0f4" stroke-width="1.8"/><path d="M202.6 39.0L206.4 40.2" stroke="#4a6cc0" stroke-width=".6" opacity=".45"/><path d="M204.2 38.0L208.0 39.2" stroke="#d88a38" stroke-width=".6" opacity=".45"/><path d="M203.4 40.4L208.1 41.7" stroke="#f8f6f2" stroke-width="1.8"/><path d="M202.6 41.0L207.3 42.3" stroke="#4a6cc0" stroke-width=".6" opacity=".45"/><path d="M204.2 40.0L208.9 41.3" stroke="#d88a38" stroke-width=".6" opacity=".45"/><path d="M206.2 35.5L211.4 37.1" stroke="#f8f6f2" stroke-width="1.5"/><path d="M205.4 36.1L210.6 37.7" stroke="#4a6cc0" stroke-width=".6" opacity=".45"/><path d="M207.0 35.1L212.2 36.7" stroke="#d88a38" stroke-width=".6" opacity=".45"/><path d="M206.2 40.6L211.3 42.1" stroke="#f8f6f2" stroke-width="1.7"/><path d="M205.4 41.2L210.5 42.7" stroke="#4a6cc0" stroke-width=".6" opacity=".45"/><path d="M207.0 40.2L212.1 41.7" stroke="#d88a38" stroke-width=".6" opacity=".45"/><path d="M209.0 33.3L213.8 31.2" stroke="#ffffff" stroke-width="1.8"/><path d="M208.2 33.9L213.0 31.8" stroke="#4a6cc0" stroke-width=".6" opacity=".45"/><path d="M209.8 32.9L214.6 30.8" stroke="#d88a38" stroke-width=".6" opacity=".45"/><path d="M209.0 35.6L213.7 37.4" stroke="#eef0f4" stroke-width="2.0"/><path d="M208.2 36.2L212.9 38.0" stroke="#4a6cc0" stroke-width=".6" opacity=".45"/><path d="M209.8 35.2L214.5 37.0" stroke="#d88a38" stroke-width=".6" opacity=".45"/><path d="M209.0 37.9L213.5 39.3" stroke="#ffffff" stroke-width="2.0"/><path d="M208.2 38.5L212.7 39.9" stroke="#4a6cc0" stroke-width=".6" opacity=".45"/><path d="M209.8 37.5L214.3 38.9" stroke="#d88a38" stroke-width=".6" opacity=".45"/><path d="M209.0 42.6L213.6 40.5" stroke="#e4ecf8" stroke-width="1.8"/><path d="M208.2 43.2L212.8 41.1" stroke="#4a6cc0" stroke-width=".6" opacity=".45"/><path d="M209.8 42.2L214.4 40.1" stroke="#d88a38" stroke-width=".6" opacity=".45"/><path d="M212.3 33.3L216.5 34.8" stroke="#ffffff" stroke-width="1.6"/><path d="M211.5 33.9L215.7 35.4" stroke="#4a6cc0" stroke-width=".6" opacity=".45"/><path d="M213.1 32.9L217.3 34.4" stroke="#d88a38" stroke-width=".6" opacity=".45"/><path d="M212.3 36.0L217.3 37.3" stroke="#f8f6f2" stroke-width="1.8"/><path d="M211.5 36.6L216.5 37.9" stroke="#4a6cc0" stroke-width=".6" opacity=".45"/><path d="M213.1 35.6L218.1 36.9" stroke="#d88a38" stroke-width=".6" opacity=".45"/><path d="M212.3 40.3L216.2 38.3" stroke="#ffffff" stroke-width="1.8"/><path d="M211.5 40.9L215.4 38.9" stroke="#4a6cc0" stroke-width=".6" opacity=".45"/><path d="M213.1 39.9L217.0 37.9" stroke="#d88a38" stroke-width=".6" opacity=".45"/><path d="M212.3 42.5L216.6 44.4" stroke="#eef0f4" stroke-width="1.5"/><path d="M211.5 43.1L215.8 45.0" stroke="#4a6cc0" stroke-width=".6" opacity=".45"/><path d="M213.1 42.1L217.4 44.0" stroke="#d88a38" stroke-width=".6" opacity=".45"/><rect x="213.2" y="32.4" width="2.4" height="1.3" fill="#e6e8ee" opacity=".75"/><path d="M215.5 35.6L220.0 37.4" stroke="#fbf1e2" stroke-width="1.5"/><path d="M214.7 36.2L219.2 38.0" stroke="#4a6cc0" stroke-width=".6" opacity=".45"/><path d="M216.3 35.2L220.8 37.0" stroke="#d88a38" stroke-width=".6" opacity=".45"/><path d="M215.5 37.8L220.3 39.1" stroke="#f8f6f2" stroke-width="1.7"/><path d="M214.7 38.4L219.5 39.7" stroke="#4a6cc0" stroke-width=".6" opacity=".45"/><path d="M216.3 37.4L221.1 38.7" stroke="#d88a38" stroke-width=".6" opacity=".45"/><path d="M215.5 40.4L220.3 41.8" stroke="#e4ecf8" stroke-width="1.7"/><path d="M214.7 41.0L219.5 42.4" stroke="#4a6cc0" stroke-width=".6" opacity=".45"/><path d="M216.3 40.0L221.1 41.4" stroke="#d88a38" stroke-width=".6" opacity=".45"/><path d="M215.5 42.7L221.1 44.9" stroke="#ffffff" stroke-width="1.9"/><path d="M214.7 43.3L220.3 45.5" stroke="#4a6cc0" stroke-width=".6" opacity=".45"/><path d="M216.3 42.3L221.9 44.5" stroke="#d88a38" stroke-width=".6" opacity=".45"/><rect x="216.1" y="30.9" width="2.1" height="1.3" fill="#e6e8ee" opacity=".75"/><path d="M218.2 33.1L223.8 31.0" stroke="#eef0f4" stroke-width="1.7"/><path d="M217.4 33.7L223.0 31.6" stroke="#4a6cc0" stroke-width=".6" opacity=".45"/><path d="M219.0 32.7L224.6 30.6" stroke="#d88a38" stroke-width=".6" opacity=".45"/><path d="M218.2 35.6L222.4 37.6" stroke="#fbf1e2" stroke-width="1.7"/><path d="M217.4 36.2L221.6 38.2" stroke="#4a6cc0" stroke-width=".6" opacity=".45"/><path d="M219.0 35.2L223.2 37.2" stroke="#d88a38" stroke-width=".6" opacity=".45"/><path d="M218.2 38.1L222.2 39.4" stroke="#fbf1e2" stroke-width="2.0"/><path d="M217.4 38.7L221.4 40.0" stroke="#4a6cc0" stroke-width=".6" opacity=".45"/><path d="M219.0 37.7L223.0 39.0" stroke="#d88a38" stroke-width=".6" opacity=".45"/><path d="M218.2 40.2L222.8 38.5" stroke="#ffffff" stroke-width="1.9"/><path d="M217.4 40.8L222.0 39.1" stroke="#4a6cc0" stroke-width=".6" opacity=".45"/><path d="M219.0 39.8L223.6 38.1" stroke="#d88a38" stroke-width=".6" opacity=".45"/><path d="M221.2 33.1L224.8 31.4" stroke="#fbf1e2" stroke-width="1.9"/><path d="M220.4 33.7L224.0 32.0" stroke="#4a6cc0" stroke-width=".6" opacity=".45"/><path d="M222.0 32.7L225.6 31.0" stroke="#d88a38" stroke-width=".6" opacity=".45"/><path d="M221.2 35.6L224.8 37.1" stroke="#ffffff" stroke-width="1.8"/><path d="M220.4 36.2L224.0 37.7" stroke="#4a6cc0" stroke-width=".6" opacity=".45"/><path d="M222.0 35.2L225.6 36.7" stroke="#d88a38" stroke-width=".6" opacity=".45"/><path d="M221.2 37.9L225.4 40.0" stroke="#f8f6f2" stroke-width="1.5"/><path d="M220.4 38.5L224.6 40.6" stroke="#4a6cc0" stroke-width=".6" opacity=".45"/><path d="M222.0 37.5L226.2 39.6" stroke="#d88a38" stroke-width=".6" opacity=".45"/><path d="M221.2 42.6L226.8 40.9" stroke="#eef0f4" stroke-width="2.0"/><path d="M220.4 43.2L226.0 41.5" stroke="#4a6cc0" stroke-width=".6" opacity=".45"/><path d="M222.0 42.2L227.6 40.5" stroke="#d88a38" stroke-width=".6" opacity=".45"/><path d="M223.8 33.0L228.9 31.8" stroke="#fbf1e2" stroke-width="1.9"/><path d="M223.0 33.6L228.1 32.4" stroke="#4a6cc0" stroke-width=".6" opacity=".45"/><path d="M224.6 32.6L229.7 31.4" stroke="#d88a38" stroke-width=".6" opacity=".45"/><path d="M223.8 35.5L227.6 37.5" stroke="#ffffff" stroke-width="2.0"/><path d="M223.0 36.1L226.8 38.1" stroke="#4a6cc0" stroke-width=".6" opacity=".45"/><path d="M224.6 35.1L228.4 37.1" stroke="#d88a38" stroke-width=".6" opacity=".45"/><path d="M223.8 37.6L228.9 36.2" stroke="#fbf1e2" stroke-width="1.8"/><path d="M223.0 38.2L228.1 36.8" stroke="#4a6cc0" stroke-width=".6" opacity=".45"/><path d="M224.6 37.2L229.7 35.8" stroke="#d88a38" stroke-width=".6" opacity=".45"/><path d="M223.8 39.9L229.0 41.6" stroke="#e4ecf8" stroke-width="1.7"/><path d="M223.0 40.5L228.2 42.2" stroke="#4a6cc0" stroke-width=".6" opacity=".45"/><path d="M224.6 39.5L229.8 41.2" stroke="#d88a38" stroke-width=".6" opacity=".45"/><path d="M223.8 42.0L228.7 40.3" stroke="#f8f6f2" stroke-width="1.9"/><path d="M223.0 42.6L227.9 40.9" stroke="#4a6cc0" stroke-width=".6" opacity=".45"/><path d="M224.6 41.6L229.5 39.9" stroke="#d88a38" stroke-width=".6" opacity=".45"/><path d="M226.6 33.0L230.5 31.2" stroke="#fbf1e2" stroke-width="1.7"/><path d="M225.8 33.6L229.7 31.8" stroke="#4a6cc0" stroke-width=".6" opacity=".45"/><path d="M227.4 32.6L231.3 30.8" stroke="#d88a38" stroke-width=".6" opacity=".45"/><path d="M226.6 35.0L232.0 33.1" stroke="#e4ecf8" stroke-width="1.8"/><path d="M225.8 35.6L231.2 33.7" stroke="#4a6cc0" stroke-width=".6" opacity=".45"/><path d="M227.4 34.6L232.8 32.7" stroke="#d88a38" stroke-width=".6" opacity=".45"/><path d="M226.6 37.7L230.1 36.4" stroke="#e4ecf8" stroke-width="1.6"/><path d="M225.8 38.3L229.3 37.0" stroke="#4a6cc0" stroke-width=".6" opacity=".45"/><path d="M227.4 37.3L230.9 36.0" stroke="#d88a38" stroke-width=".6" opacity=".45"/><path d="M226.6 39.9L231.0 41.1" stroke="#ffffff" stroke-width="1.6"/><path d="M225.8 40.5L230.2 41.7" stroke="#4a6cc0" stroke-width=".6" opacity=".45"/><path d="M227.4 39.5L231.8 40.7" stroke="#d88a38" stroke-width=".6" opacity=".45"/><path d="M226.6 42.3L231.9 40.1" stroke="#fbf1e2" stroke-width="1.6"/><path d="M225.8 42.9L231.1 40.7" stroke="#4a6cc0" stroke-width=".6" opacity=".45"/><path d="M227.4 41.9L232.7 39.7" stroke="#d88a38" stroke-width=".6" opacity=".45"/><path d="M229.5 32.9L234.0 34.9" stroke="#eef0f4" stroke-width="1.7"/><path d="M228.7 33.5L233.2 35.5" stroke="#4a6cc0" stroke-width=".6" opacity=".45"/><path d="M230.3 32.5L234.8 34.5" stroke="#d88a38" stroke-width=".6" opacity=".45"/><path d="M229.5 38.0L235.2 35.9" stroke="#fbf1e2" stroke-width="1.9"/><path d="M228.7 38.6L234.4 36.5" stroke="#4a6cc0" stroke-width=".6" opacity=".45"/><path d="M230.3 37.6L236.0 35.5" stroke="#d88a38" stroke-width=".6" opacity=".45"/><path d="M229.5 40.5L234.8 41.9" stroke="#ffffff" stroke-width="1.7"/><path d="M228.7 41.1L234.0 42.5" stroke="#4a6cc0" stroke-width=".6" opacity=".45"/><path d="M230.3 40.1L235.6 41.5" stroke="#d88a38" stroke-width=".6" opacity=".45"/><rect x="231.1" y="30.7" width="1.5" height="1.3" fill="#e6e8ee" opacity=".75"/><path d="M232.2 32.9L236.6 34.6" stroke="#eef0f4" stroke-width="1.6"/><path d="M231.4 33.5L235.8 35.2" stroke="#4a6cc0" stroke-width=".6" opacity=".45"/><path d="M233.0 32.5L237.4 34.2" stroke="#d88a38" stroke-width=".6" opacity=".45"/><path d="M232.2 38.0L236.8 39.6" stroke="#f8f6f2" stroke-width="1.7"/><path d="M231.4 38.6L236.0 40.2" stroke="#4a6cc0" stroke-width=".6" opacity=".45"/><path d="M233.0 37.6L237.6 39.2" stroke="#d88a38" stroke-width=".6" opacity=".45"/><path d="M232.2 40.8L236.6 39.2" stroke="#eef0f4" stroke-width="1.9"/><path d="M231.4 41.4L235.8 39.8" stroke="#4a6cc0" stroke-width=".6" opacity=".45"/><path d="M233.0 40.4L237.4 38.8" stroke="#d88a38" stroke-width=".6" opacity=".45"/><path d="M234.9 32.8L239.5 34.1" stroke="#ffffff" stroke-width="1.7"/><path d="M234.1 33.4L238.7 34.7" stroke="#4a6cc0" stroke-width=".6" opacity=".45"/><path d="M235.7 32.4L240.3 33.7" stroke="#d88a38" stroke-width=".6" opacity=".45"/><path d="M234.9 35.2L239.6 36.5" stroke="#e4ecf8" stroke-width="1.7"/><path d="M234.1 35.8L238.8 37.1" stroke="#4a6cc0" stroke-width=".6" opacity=".45"/><path d="M235.7 34.8L240.4 36.1" stroke="#d88a38" stroke-width=".6" opacity=".45"/><path d="M234.9 37.5L239.3 39.5" stroke="#eef0f4" stroke-width="1.8"/><path d="M234.1 38.1L238.5 40.1" stroke="#4a6cc0" stroke-width=".6" opacity=".45"/><path d="M235.7 37.1L240.1 39.1" stroke="#d88a38" stroke-width=".6" opacity=".45"/><path d="M237.6 32.7L243.3 34.4" stroke="#fbf1e2" stroke-width="1.7"/><path d="M236.8 33.3L242.5 35.0" stroke="#4a6cc0" stroke-width=".6" opacity=".45"/><path d="M238.4 32.3L244.1 34.0" stroke="#d88a38" stroke-width=".6" opacity=".45"/><path d="M237.6 35.2L243.5 37.0" stroke="#eef0f4" stroke-width="1.9"/><path d="M236.8 35.8L242.7 37.6" stroke="#4a6cc0" stroke-width=".6" opacity=".45"/><path d="M238.4 34.8L244.3 36.6" stroke="#d88a38" stroke-width=".6" opacity=".45"/><path d="M237.6 37.3L242.1 38.9" stroke="#eef0f4" stroke-width="1.8"/><path d="M236.8 37.9L241.3 39.5" stroke="#4a6cc0" stroke-width=".6" opacity=".45"/><path d="M238.4 36.9L242.9 38.5" stroke="#d88a38" stroke-width=".6" opacity=".45"/><path d="M237.6 42.4L241.9 40.2" stroke="#eef0f4" stroke-width="1.5"/><path d="M236.8 43.0L241.1 40.8" stroke="#4a6cc0" stroke-width=".6" opacity=".45"/><path d="M238.4 42.0L242.7 39.8" stroke="#d88a38" stroke-width=".6" opacity=".45"/><path d="M240.9 32.7L245.5 34.7" stroke="#e4ecf8" stroke-width="1.8"/><path d="M240.1 33.3L244.7 35.3" stroke="#4a6cc0" stroke-width=".6" opacity=".45"/><path d="M241.7 32.3L246.3 34.3" stroke="#d88a38" stroke-width=".6" opacity=".45"/><path d="M240.9 35.1L246.0 33.9" stroke="#fbf1e2" stroke-width="1.6"/><path d="M240.1 35.7L245.2 34.5" stroke="#4a6cc0" stroke-width=".6" opacity=".45"/><path d="M241.7 34.7L246.8 33.5" stroke="#d88a38" stroke-width=".6" opacity=".45"/><path d="M240.9 37.4L246.3 36.1" stroke="#e4ecf8" stroke-width="2.0"/><path d="M240.1 38.0L245.5 36.7" stroke="#4a6cc0" stroke-width=".6" opacity=".45"/><path d="M241.7 37.0L247.1 35.7" stroke="#d88a38" stroke-width=".6" opacity=".45"/><path d="M240.9 39.4L245.1 41.5" stroke="#e4ecf8" stroke-width="1.9"/><path d="M240.1 40.0L244.3 42.1" stroke="#4a6cc0" stroke-width=".6" opacity=".45"/><path d="M241.7 39.0L245.9 41.1" stroke="#d88a38" stroke-width=".6" opacity=".45"/><path d="M240.9 41.5L245.9 42.7" stroke="#fbf1e2" stroke-width="1.8"/><path d="M240.1 42.1L245.1 43.3" stroke="#4a6cc0" stroke-width=".6" opacity=".45"/><path d="M241.7 41.1L246.7 42.3" stroke="#d88a38" stroke-width=".6" opacity=".45"/><rect x="241.9" y="45.7" width="1.8" height="1.2" fill="#e0e4ea" opacity=".7"/><path d="M244.2 32.6L249.8 34.1" stroke="#eef0f4" stroke-width="1.7"/><path d="M243.4 33.2L249.0 34.7" stroke="#4a6cc0" stroke-width=".6" opacity=".45"/><path d="M245.0 32.2L250.6 33.7" stroke="#d88a38" stroke-width=".6" opacity=".45"/><path d="M244.2 35.1L249.9 37.3" stroke="#eef0f4" stroke-width="2.0"/><path d="M243.4 35.7L249.1 37.9" stroke="#4a6cc0" stroke-width=".6" opacity=".45"/><path d="M245.0 34.7L250.7 36.9" stroke="#d88a38" stroke-width=".6" opacity=".45"/><path d="M244.2 40.2L249.5 38.9" stroke="#eef0f4" stroke-width="1.6"/><path d="M243.4 40.8L248.7 39.5" stroke="#4a6cc0" stroke-width=".6" opacity=".45"/><path d="M245.0 39.8L250.3 38.5" stroke="#d88a38" stroke-width=".6" opacity=".45"/><path d="M247.1 32.6L251.7 34.6" stroke="#fbf1e2" stroke-width="1.5"/><path d="M246.3 33.2L250.9 35.2" stroke="#4a6cc0" stroke-width=".6" opacity=".45"/><path d="M247.9 32.2L252.5 34.2" stroke="#d88a38" stroke-width=".6" opacity=".45"/><path d="M247.1 35.1L251.8 36.6" stroke="#f8f6f2" stroke-width="1.9"/><path d="M246.3 35.7L251.0 37.2" stroke="#4a6cc0" stroke-width=".6" opacity=".45"/><path d="M247.9 34.7L252.6 36.2" stroke="#d88a38" stroke-width=".6" opacity=".45"/><path d="M247.1 37.4L251.0 38.6" stroke="#f8f6f2" stroke-width="1.6"/><path d="M246.3 38.0L250.2 39.2" stroke="#4a6cc0" stroke-width=".6" opacity=".45"/><path d="M247.9 37.0L251.8 38.2" stroke="#d88a38" stroke-width=".6" opacity=".45"/><path d="M247.1 39.7L252.9 41.4" stroke="#eef0f4" stroke-width="1.6"/><path d="M246.3 40.3L252.1 42.0" stroke="#4a6cc0" stroke-width=".6" opacity=".45"/><path d="M247.9 39.3L253.7 41.0" stroke="#d88a38" stroke-width=".6" opacity=".45"/><path d="M247.1 41.8L251.1 43.0" stroke="#f8f6f2" stroke-width="1.6"/><path d="M246.3 42.4L250.3 43.6" stroke="#4a6cc0" stroke-width=".6" opacity=".45"/><path d="M247.9 41.4L251.9 42.6" stroke="#d88a38" stroke-width=".6" opacity=".45"/><path d="M250.4 32.5L255.9 34.0" stroke="#fbf1e2" stroke-width="1.6"/><path d="M249.6 33.1L255.1 34.6" stroke="#4a6cc0" stroke-width=".6" opacity=".45"/><path d="M251.2 32.1L256.7 33.6" stroke="#d88a38" stroke-width=".6" opacity=".45"/><path d="M250.4 34.5L255.7 32.9" stroke="#f8f6f2" stroke-width="1.9"/><path d="M249.6 35.1L254.9 33.5" stroke="#4a6cc0" stroke-width=".6" opacity=".45"/><path d="M251.2 34.1L256.5 32.5" stroke="#d88a38" stroke-width=".6" opacity=".45"/><path d="M250.4 36.7L255.8 38.0" stroke="#fbf1e2" stroke-width="1.8"/><path d="M249.6 37.3L255.0 38.6" stroke="#4a6cc0" stroke-width=".6" opacity=".45"/><path d="M251.2 36.3L256.6 37.6" stroke="#d88a38" stroke-width=".6" opacity=".45"/><path d="M250.4 39.1L253.9 41.2" stroke="#f8f6f2" stroke-width="1.9"/><path d="M249.6 39.7L253.1 41.8" stroke="#4a6cc0" stroke-width=".6" opacity=".45"/><path d="M251.2 38.7L254.7 40.8" stroke="#d88a38" stroke-width=".6" opacity=".45"/><path d="M250.4 41.4L255.5 42.9" stroke="#f8f6f2" stroke-width="1.8"/><path d="M249.6 42.0L254.7 43.5" stroke="#4a6cc0" stroke-width=".6" opacity=".45"/><path d="M251.2 41.0L256.3 42.5" stroke="#d88a38" stroke-width=".6" opacity=".45"/><path d="M253.7 32.4L258.0 33.8" stroke="#f8f6f2" stroke-width="1.8"/><path d="M252.9 33.0L257.2 34.4" stroke="#4a6cc0" stroke-width=".6" opacity=".45"/><path d="M254.5 32.0L258.8 33.4" stroke="#d88a38" stroke-width=".6" opacity=".45"/><path d="M253.7 35.2L257.4 37.0" stroke="#ffffff" stroke-width="1.7"/><path d="M252.9 35.8L256.6 37.6" stroke="#4a6cc0" stroke-width=".6" opacity=".45"/><path d="M254.5 34.8L258.2 36.6" stroke="#d88a38" stroke-width=".6" opacity=".45"/><path d="M253.7 37.3L257.6 39.1" stroke="#f8f6f2" stroke-width="1.8"/><path d="M252.9 37.9L256.8 39.7" stroke="#4a6cc0" stroke-width=".6" opacity=".45"/><path d="M254.5 36.9L258.4 38.7" stroke="#d88a38" stroke-width=".6" opacity=".45"/><path d="M253.7 40.0L257.8 38.7" stroke="#eef0f4" stroke-width="1.8"/><path d="M252.9 40.6L257.0 39.3" stroke="#4a6cc0" stroke-width=".6" opacity=".45"/><path d="M254.5 39.6L258.6 38.3" stroke="#d88a38" stroke-width=".6" opacity=".45"/><path d="M253.7 42.1L258.6 44.3" stroke="#eef0f4" stroke-width="1.8"/><path d="M252.9 42.7L257.8 44.9" stroke="#4a6cc0" stroke-width=".6" opacity=".45"/><path d="M254.5 41.7L259.4 43.9" stroke="#d88a38" stroke-width=".6" opacity=".45"/><rect x="253.8" y="44.8" width="1.2" height="1.2" fill="#e0e4ea" opacity=".7"/><path d="M256.6 32.4L262.3 34.1" stroke="#ffffff" stroke-width="1.6"/><path d="M255.8 33.0L261.5 34.7" stroke="#4a6cc0" stroke-width=".6" opacity=".45"/><path d="M257.4 32.0L263.1 33.7" stroke="#d88a38" stroke-width=".6" opacity=".45"/><path d="M256.6 34.9L261.7 36.6" stroke="#fbf1e2" stroke-width="1.6"/><path d="M255.8 35.5L260.9 37.2" stroke="#4a6cc0" stroke-width=".6" opacity=".45"/><path d="M257.4 34.5L262.5 36.2" stroke="#d88a38" stroke-width=".6" opacity=".45"/><path d="M256.6 37.0L260.8 38.5" stroke="#f8f6f2" stroke-width="1.8"/><path d="M255.8 37.6L260.0 39.1" stroke="#4a6cc0" stroke-width=".6" opacity=".45"/><path d="M257.4 36.6L261.6 38.1" stroke="#d88a38" stroke-width=".6" opacity=".45"/><path d="M256.6 39.1L261.6 40.6" stroke="#fbf1e2" stroke-width="1.7"/><path d="M255.8 39.7L260.8 41.2" stroke="#4a6cc0" stroke-width=".6" opacity=".45"/><path d="M257.4 38.7L262.4 40.2" stroke="#d88a38" stroke-width=".6" opacity=".45"/><path d="M256.6 41.5L260.5 39.3" stroke="#e4ecf8" stroke-width="1.5"/><path d="M255.8 42.1L259.7 39.9" stroke="#4a6cc0" stroke-width=".6" opacity=".45"/><path d="M257.4 41.1L261.3 38.9" stroke="#d88a38" stroke-width=".6" opacity=".45"/><path d="M259.8 32.3L264.6 34.3" stroke="#eef0f4" stroke-width="1.7"/><path d="M259.0 32.9L263.8 34.9" stroke="#4a6cc0" stroke-width=".6" opacity=".45"/><path d="M260.6 31.9L265.4 33.9" stroke="#d88a38" stroke-width=".6" opacity=".45"/><path d="M259.8 34.8L264.3 36.7" stroke="#e4ecf8" stroke-width="1.8"/><path d="M259.0 35.4L263.5 37.3" stroke="#4a6cc0" stroke-width=".6" opacity=".45"/><path d="M260.6 34.4L265.1 36.3" stroke="#d88a38" stroke-width=".6" opacity=".45"/><path d="M259.8 36.9L263.9 35.0" stroke="#fbf1e2" stroke-width="1.8"/><path d="M259.0 37.5L263.1 35.6" stroke="#4a6cc0" stroke-width=".6" opacity=".45"/><path d="M260.6 36.5L264.7 34.6" stroke="#d88a38" stroke-width=".6" opacity=".45"/><path d="M259.8 39.5L265.7 38.1" stroke="#e4ecf8" stroke-width="1.6"/><path d="M259.0 40.1L264.9 38.7" stroke="#4a6cc0" stroke-width=".6" opacity=".45"/><path d="M260.6 39.1L266.5 37.7" stroke="#d88a38" stroke-width=".6" opacity=".45"/><path d="M259.8 42.1L263.7 43.8" stroke="#fbf1e2" stroke-width="1.8"/><path d="M259.0 42.7L262.9 44.4" stroke="#4a6cc0" stroke-width=".6" opacity=".45"/><path d="M260.6 41.7L264.5 43.4" stroke="#d88a38" stroke-width=".6" opacity=".45"/><rect x="261.3" y="30.6" width="2.0" height="1.3" fill="#e6e8ee" opacity=".75"/><path d="M263.2 32.2L268.8 33.6" stroke="#fbf1e2" stroke-width="1.7"/><path d="M262.4 32.8L268.0 34.2" stroke="#4a6cc0" stroke-width=".6" opacity=".45"/><path d="M264.0 31.8L269.6 33.2" stroke="#d88a38" stroke-width=".6" opacity=".45"/><path d="M263.2 34.3L268.7 32.6" stroke="#e4ecf8" stroke-width="2.0"/><path d="M262.4 34.9L267.9 33.2" stroke="#4a6cc0" stroke-width=".6" opacity=".45"/><path d="M264.0 33.9L269.5 32.2" stroke="#d88a38" stroke-width=".6" opacity=".45"/><path d="M263.2 36.9L267.3 39.0" stroke="#fbf1e2" stroke-width="1.8"/><path d="M262.4 37.5L266.5 39.6" stroke="#4a6cc0" stroke-width=".6" opacity=".45"/><path d="M264.0 36.5L268.1 38.6" stroke="#d88a38" stroke-width=".6" opacity=".45"/><path d="M263.2 39.7L268.6 40.9" stroke="#f8f6f2" stroke-width="1.7"/><path d="M262.4 40.3L267.8 41.5" stroke="#4a6cc0" stroke-width=".6" opacity=".45"/><path d="M264.0 39.3L269.4 40.5" stroke="#d88a38" stroke-width=".6" opacity=".45"/><path d="M266.0 32.2L270.9 30.7" stroke="#ffffff" stroke-width="1.7"/><path d="M265.2 32.8L270.1 31.3" stroke="#4a6cc0" stroke-width=".6" opacity=".45"/><path d="M266.8 31.8L271.7 30.3" stroke="#d88a38" stroke-width=".6" opacity=".45"/><path d="M266.0 34.5L269.8 36.4" stroke="#ffffff" stroke-width="1.7"/><path d="M265.2 35.1L269.0 37.0" stroke="#4a6cc0" stroke-width=".6" opacity=".45"/><path d="M266.8 34.1L270.6 36.0" stroke="#d88a38" stroke-width=".6" opacity=".45"/><path d="M266.0 37.2L270.1 38.9" stroke="#f8f6f2" stroke-width="1.8"/><path d="M265.2 37.8L269.3 39.5" stroke="#4a6cc0" stroke-width=".6" opacity=".45"/><path d="M266.8 36.8L270.9 38.5" stroke="#d88a38" stroke-width=".6" opacity=".45"/><path d="M266.0 39.3L270.2 40.8" stroke="#f8f6f2" stroke-width="1.6"/><path d="M265.2 39.9L269.4 41.4" stroke="#4a6cc0" stroke-width=".6" opacity=".45"/><path d="M266.8 38.9L271.0 40.4" stroke="#d88a38" stroke-width=".6" opacity=".45"/><rect x="267.3" y="30.4" width="1.6" height="1.3" fill="#e6e8ee" opacity=".75"/><path d="M268.7 32.1L273.5 30.9" stroke="#f8f6f2" stroke-width="1.9"/><path d="M267.9 32.7L272.7 31.5" stroke="#4a6cc0" stroke-width=".6" opacity=".45"/><path d="M269.5 31.7L274.3 30.5" stroke="#d88a38" stroke-width=".6" opacity=".45"/><path d="M268.7 34.4L274.5 36.1" stroke="#eef0f4" stroke-width="2.0"/><path d="M267.9 35.0L273.7 36.7" stroke="#4a6cc0" stroke-width=".6" opacity=".45"/><path d="M269.5 34.0L275.3 35.7" stroke="#d88a38" stroke-width=".6" opacity=".45"/><path d="M268.7 36.6L273.3 38.6" stroke="#fbf1e2" stroke-width="1.7"/><path d="M267.9 37.2L272.5 39.2" stroke="#4a6cc0" stroke-width=".6" opacity=".45"/><path d="M269.5 36.2L274.1 38.2" stroke="#d88a38" stroke-width=".6" opacity=".45"/><path d="M268.7 39.4L273.5 40.7" stroke="#ffffff" stroke-width="2.0"/><path d="M267.9 40.0L272.7 41.3" stroke="#4a6cc0" stroke-width=".6" opacity=".45"/><path d="M269.5 39.0L274.3 40.3" stroke="#d88a38" stroke-width=".6" opacity=".45"/><path d="M268.7 41.9L273.5 40.0" stroke="#e4ecf8" stroke-width="1.6"/><path d="M267.9 42.5L272.7 40.6" stroke="#4a6cc0" stroke-width=".6" opacity=".45"/><path d="M269.5 41.5L274.3 39.6" stroke="#d88a38" stroke-width=".6" opacity=".45"/><path d="M271.9 32.1L276.9 30.4" stroke="#f8f6f2" stroke-width="2.0"/><path d="M271.1 32.7L276.1 31.0" stroke="#4a6cc0" stroke-width=".6" opacity=".45"/><path d="M272.7 31.7L277.7 30.0" stroke="#d88a38" stroke-width=".6" opacity=".45"/><path d="M271.9 37.2L275.9 35.8" stroke="#fbf1e2" stroke-width="1.6"/><path d="M271.1 37.8L275.1 36.4" stroke="#4a6cc0" stroke-width=".6" opacity=".45"/><path d="M272.7 36.8L276.7 35.4" stroke="#d88a38" stroke-width=".6" opacity=".45"/><path d="M274.5 32.0L278.6 33.9" stroke="#ffffff" stroke-width="1.7"/><path d="M273.7 32.6L277.8 34.5" stroke="#4a6cc0" stroke-width=".6" opacity=".45"/><path d="M275.3 31.6L279.4 33.5" stroke="#d88a38" stroke-width=".6" opacity=".45"/><path d="M274.5 34.6L278.6 33.3" stroke="#e4ecf8" stroke-width="1.9"/><path d="M273.7 35.2L277.8 33.9" stroke="#4a6cc0" stroke-width=".6" opacity=".45"/><path d="M275.3 34.2L279.4 32.9" stroke="#d88a38" stroke-width=".6" opacity=".45"/><path d="M277.9 31.9L281.5 33.8" stroke="#eef0f4" stroke-width="2.0"/><path d="M277.1 32.5L280.7 34.4" stroke="#4a6cc0" stroke-width=".6" opacity=".45"/><path d="M278.7 31.5L282.3 33.4" stroke="#d88a38" stroke-width=".6" opacity=".45"/><path d="M277.9 34.0L282.2 35.6" stroke="#ffffff" stroke-width="1.7"/><path d="M277.1 34.6L281.4 36.2" stroke="#4a6cc0" stroke-width=".6" opacity=".45"/><path d="M278.7 33.6L283.0 35.2" stroke="#d88a38" stroke-width=".6" opacity=".45"/><path d="M277.9 36.5L283.4 38.4" stroke="#e4ecf8" stroke-width="1.6"/><path d="M277.1 37.1L282.6 39.0" stroke="#4a6cc0" stroke-width=".6" opacity=".45"/><path d="M278.7 36.1L284.2 38.0" stroke="#d88a38" stroke-width=".6" opacity=".45"/><path d="M277.9 39.2L281.5 41.0" stroke="#fbf1e2" stroke-width="1.9"/><path d="M277.1 39.8L280.7 41.6" stroke="#4a6cc0" stroke-width=".6" opacity=".45"/><path d="M278.7 38.8L282.3 40.6" stroke="#d88a38" stroke-width=".6" opacity=".45"/><path d="M277.9 41.6L282.4 42.9" stroke="#eef0f4" stroke-width="1.6"/><path d="M277.1 42.2L281.6 43.5" stroke="#4a6cc0" stroke-width=".6" opacity=".45"/><path d="M278.7 41.2L283.2 42.5" stroke="#d88a38" stroke-width=".6" opacity=".45"/><path d="M280.7 31.9L284.9 33.3" stroke="#fbf1e2" stroke-width="1.7"/><path d="M279.9 32.5L284.1 33.9" stroke="#4a6cc0" stroke-width=".6" opacity=".45"/><path d="M281.5 31.5L285.7 32.9" stroke="#d88a38" stroke-width=".6" opacity=".45"/><path d="M280.7 37.2L284.4 35.9" stroke="#eef0f4" stroke-width="2.0"/><path d="M279.9 37.8L283.6 36.5" stroke="#4a6cc0" stroke-width=".6" opacity=".45"/><path d="M281.5 36.8L285.2 35.5" stroke="#d88a38" stroke-width=".6" opacity=".45"/><path d="M280.7 39.3L286.0 40.9" stroke="#fbf1e2" stroke-width="1.6"/><path d="M279.9 39.9L285.2 41.5" stroke="#4a6cc0" stroke-width=".6" opacity=".45"/><path d="M281.5 38.9L286.8 40.5" stroke="#d88a38" stroke-width=".6" opacity=".45"/><path d="M280.7 42.1L285.8 43.7" stroke="#e4ecf8" stroke-width="1.6"/><path d="M279.9 42.7L285.0 44.3" stroke="#4a6cc0" stroke-width=".6" opacity=".45"/><path d="M281.5 41.7L286.6 43.3" stroke="#d88a38" stroke-width=".6" opacity=".45"/><rect x="282.8" y="45.1" width="1.4" height="1.2" fill="#e0e4ea" opacity=".7"/><rect x="280.8" y="30.0" width="1.5" height="1.3" fill="#e6e8ee" opacity=".75"/><path d="M283.7 31.8L289.4 34.0" stroke="#ffffff" stroke-width="1.8"/><path d="M282.9 32.4L288.6 34.6" stroke="#4a6cc0" stroke-width=".6" opacity=".45"/><path d="M284.5 31.4L290.2 33.6" stroke="#d88a38" stroke-width=".6" opacity=".45"/><path d="M283.7 34.1L287.7 32.0" stroke="#ffffff" stroke-width="1.6"/><path d="M282.9 34.7L286.9 32.6" stroke="#4a6cc0" stroke-width=".6" opacity=".45"/><path d="M284.5 33.7L288.5 31.6" stroke="#d88a38" stroke-width=".6" opacity=".45"/><path d="M283.7 36.3L289.0 37.5" stroke="#eef0f4" stroke-width="1.7"/><path d="M282.9 36.9L288.2 38.1" stroke="#4a6cc0" stroke-width=".6" opacity=".45"/><path d="M284.5 35.9L289.8 37.1" stroke="#d88a38" stroke-width=".6" opacity=".45"/><path d="M283.7 38.5L288.7 40.5" stroke="#eef0f4" stroke-width="1.9"/><path d="M282.9 39.1L287.9 41.1" stroke="#4a6cc0" stroke-width=".6" opacity=".45"/><path d="M284.5 38.1L289.5 40.1" stroke="#d88a38" stroke-width=".6" opacity=".45"/><path d="M283.7 40.6L288.2 42.3" stroke="#eef0f4" stroke-width="2.0"/><path d="M282.9 41.2L287.4 42.9" stroke="#4a6cc0" stroke-width=".6" opacity=".45"/><path d="M284.5 40.2L289.0 41.9" stroke="#d88a38" stroke-width=".6" opacity=".45"/><path d="M286.9 31.8L290.7 33.7" stroke="#e4ecf8" stroke-width="2.0"/><path d="M286.1 32.4L289.9 34.3" stroke="#4a6cc0" stroke-width=".6" opacity=".45"/><path d="M287.7 31.4L291.5 33.3" stroke="#d88a38" stroke-width=".6" opacity=".45"/><path d="M286.9 36.2L292.0 37.5" stroke="#f8f6f2" stroke-width="1.7"/><path d="M286.1 36.8L291.2 38.1" stroke="#4a6cc0" stroke-width=".6" opacity=".45"/><path d="M287.7 35.8L292.8 37.1" stroke="#d88a38" stroke-width=".6" opacity=".45"/><path d="M286.9 38.8L292.1 40.1" stroke="#eef0f4" stroke-width="1.9"/><path d="M286.1 39.4L291.3 40.7" stroke="#4a6cc0" stroke-width=".6" opacity=".45"/><path d="M287.7 38.4L292.9 39.7" stroke="#d88a38" stroke-width=".6" opacity=".45"/><path d="M286.9 41.2L291.9 42.9" stroke="#e4ecf8" stroke-width="1.9"/><path d="M286.1 41.8L291.1 43.5" stroke="#4a6cc0" stroke-width=".6" opacity=".45"/><path d="M287.7 40.8L292.7 42.5" stroke="#d88a38" stroke-width=".6" opacity=".45"/><path d="M289.9 31.7L295.7 29.9" stroke="#f8f6f2" stroke-width="1.8"/><path d="M289.1 32.3L294.9 30.5" stroke="#4a6cc0" stroke-width=".6" opacity=".45"/><path d="M290.7 31.3L296.5 29.5" stroke="#d88a38" stroke-width=".6" opacity=".45"/><path d="M289.9 34.0L295.1 31.8" stroke="#f8f6f2" stroke-width="1.7"/><path d="M289.1 34.6L294.3 32.4" stroke="#4a6cc0" stroke-width=".6" opacity=".45"/><path d="M290.7 33.6L295.9 31.4" stroke="#d88a38" stroke-width=".6" opacity=".45"/><path d="M289.9 36.5L294.6 34.9" stroke="#ffffff" stroke-width="1.7"/><path d="M289.1 37.1L293.8 35.5" stroke="#4a6cc0" stroke-width=".6" opacity=".45"/><path d="M290.7 36.1L295.4 34.5" stroke="#d88a38" stroke-width=".6" opacity=".45"/><path d="M289.9 39.1L294.5 41.0" stroke="#e4ecf8" stroke-width="1.9"/><path d="M289.1 39.7L293.7 41.6" stroke="#4a6cc0" stroke-width=".6" opacity=".45"/><path d="M290.7 38.7L295.3 40.6" stroke="#d88a38" stroke-width=".6" opacity=".45"/><path d="M289.9 41.1L295.2 39.3" stroke="#ffffff" stroke-width="1.7"/><path d="M289.1 41.7L294.4 39.9" stroke="#4a6cc0" stroke-width=".6" opacity=".45"/><path d="M290.7 40.7L296.0 38.9" stroke="#d88a38" stroke-width=".6" opacity=".45"/><path d="M292.8 31.6L298.0 33.0" stroke="#e4ecf8" stroke-width="1.6"/><path d="M292.0 32.2L297.2 33.6" stroke="#4a6cc0" stroke-width=".6" opacity=".45"/><path d="M293.6 31.2L298.8 32.6" stroke="#d88a38" stroke-width=".6" opacity=".45"/><path d="M292.8 34.4L298.2 36.0" stroke="#fbf1e2" stroke-width="1.6"/><path d="M292.0 35.0L297.4 36.6" stroke="#4a6cc0" stroke-width=".6" opacity=".45"/><path d="M293.6 34.0L299.0 35.6" stroke="#d88a38" stroke-width=".6" opacity=".45"/><path d="M292.8 37.2L298.6 38.8" stroke="#eef0f4" stroke-width="1.5"/><path d="M292.0 37.8L297.8 39.4" stroke="#4a6cc0" stroke-width=".6" opacity=".45"/><path d="M293.6 36.8L299.4 38.4" stroke="#d88a38" stroke-width=".6" opacity=".45"/><path d="M292.8 39.8L298.5 41.2" stroke="#ffffff" stroke-width="1.8"/><path d="M292.0 40.4L297.7 41.8" stroke="#4a6cc0" stroke-width=".6" opacity=".45"/><path d="M293.6 39.4L299.3 40.8" stroke="#d88a38" stroke-width=".6" opacity=".45"/><path d="M292.8 42.0L296.5 43.7" stroke="#eef0f4" stroke-width="1.9"/><path d="M292.0 42.6L295.7 44.3" stroke="#4a6cc0" stroke-width=".6" opacity=".45"/><path d="M293.6 41.6L297.3 43.3" stroke="#d88a38" stroke-width=".6" opacity=".45"/><rect x="295.5" y="30.8" width="2.2" height="1.3" fill="#e6e8ee" opacity=".75"/><path d="M295.5 33.6L299.8 35.7" stroke="#f8f6f2" stroke-width="1.7"/><path d="M294.7 34.2L299.0 36.3" stroke="#4a6cc0" stroke-width=".6" opacity=".45"/><path d="M296.3 33.2L300.6 35.3" stroke="#d88a38" stroke-width=".6" opacity=".45"/><path d="M295.5 36.3L299.6 34.7" stroke="#f8f6f2" stroke-width="1.9"/><path d="M294.7 36.9L298.8 35.3" stroke="#4a6cc0" stroke-width=".6" opacity=".45"/><path d="M296.3 35.9L300.4 34.3" stroke="#d88a38" stroke-width=".6" opacity=".45"/><path d="M295.5 38.4L300.7 36.8" stroke="#eef0f4" stroke-width="1.6"/><path d="M294.7 39.0L299.9 37.4" stroke="#4a6cc0" stroke-width=".6" opacity=".45"/><path d="M296.3 38.0L301.5 36.4" stroke="#d88a38" stroke-width=".6" opacity=".45"/><path d="M295.5 41.2L299.5 42.5" stroke="#ffffff" stroke-width="1.9"/><path d="M294.7 41.8L298.7 43.1" stroke="#4a6cc0" stroke-width=".6" opacity=".45"/><path d="M296.3 40.8L300.3 42.1" stroke="#d88a38" stroke-width=".6" opacity=".45"/><rect x="298.1" y="29.2" width="1.7" height="1.3" fill="#e6e8ee" opacity=".75"/><path d="M298.1 31.5L303.5 33.6" stroke="#ffffff" stroke-width="1.7"/><path d="M297.3 32.1L302.7 34.2" stroke="#4a6cc0" stroke-width=".6" opacity=".45"/><path d="M298.9 31.1L304.3 33.2" stroke="#d88a38" stroke-width=".6" opacity=".45"/><path d="M298.1 33.7L303.3 35.7" stroke="#ffffff" stroke-width="1.7"/><path d="M297.3 34.3L302.5 36.3" stroke="#4a6cc0" stroke-width=".6" opacity=".45"/><path d="M298.9 33.3L304.1 35.3" stroke="#d88a38" stroke-width=".6" opacity=".45"/><path d="M298.1 36.5L302.0 34.5" stroke="#ffffff" stroke-width="1.7"/><path d="M297.3 37.1L301.2 35.1" stroke="#4a6cc0" stroke-width=".6" opacity=".45"/><path d="M298.9 36.1L302.8 34.1" stroke="#d88a38" stroke-width=".6" opacity=".45"/><path d="M298.1 41.3L304.1 43.4" stroke="#f8f6f2" stroke-width="2.0"/><path d="M297.3 41.9L303.3 44.0" stroke="#4a6cc0" stroke-width=".6" opacity=".45"/><path d="M298.9 40.9L304.9 43.0" stroke="#d88a38" stroke-width=".6" opacity=".45"/><rect x="300.3" y="45.1" width="1.1" height="1.2" fill="#e0e4ea" opacity=".7"/><path d="M301.4 36.7L305.3 38.5" stroke="#eef0f4" stroke-width="1.9"/><path d="M300.6 37.3L304.5 39.1" stroke="#4a6cc0" stroke-width=".6" opacity=".45"/><path d="M302.2 36.3L306.1 38.1" stroke="#d88a38" stroke-width=".6" opacity=".45"/><path d="M301.4 39.2L306.5 40.8" stroke="#f8f6f2" stroke-width="1.6"/><path d="M300.6 39.8L305.7 41.4" stroke="#4a6cc0" stroke-width=".6" opacity=".45"/><path d="M302.2 38.8L307.3 40.4" stroke="#d88a38" stroke-width=".6" opacity=".45"/><path d="M301.4 41.5L304.9 39.6" stroke="#e4ecf8" stroke-width="2.0"/><path d="M300.6 42.1L304.1 40.2" stroke="#4a6cc0" stroke-width=".6" opacity=".45"/><path d="M302.2 41.1L305.7 39.2" stroke="#d88a38" stroke-width=".6" opacity=".45"/><path d="M304.6 31.5L309.3 33.5" stroke="#e4ecf8" stroke-width="1.9"/><path d="M303.8 32.1L308.5 34.1" stroke="#4a6cc0" stroke-width=".6" opacity=".45"/><path d="M305.4 31.1L310.1 33.1" stroke="#d88a38" stroke-width=".6" opacity=".45"/><path d="M304.6 34.0L308.6 32.7" stroke="#eef0f4" stroke-width="2.0"/><path d="M303.8 34.6L307.8 33.3" stroke="#4a6cc0" stroke-width=".6" opacity=".45"/><path d="M305.4 33.6L309.4 32.3" stroke="#d88a38" stroke-width=".6" opacity=".45"/><path d="M304.6 36.0L310.2 37.5" stroke="#ffffff" stroke-width="1.6"/><path d="M303.8 36.6L309.4 38.1" stroke="#4a6cc0" stroke-width=".6" opacity=".45"/><path d="M305.4 35.6L311.0 37.1" stroke="#d88a38" stroke-width=".6" opacity=".45"/><path d="M304.6 38.1L310.0 39.9" stroke="#f8f6f2" stroke-width="1.6"/><path d="M303.8 38.7L309.2 40.5" stroke="#4a6cc0" stroke-width=".6" opacity=".45"/><path d="M305.4 37.7L310.8 39.5" stroke="#d88a38" stroke-width=".6" opacity=".45"/><path d="M304.6 40.2L309.7 41.7" stroke="#e4ecf8" stroke-width="1.9"/><path d="M303.8 40.8L308.9 42.3" stroke="#4a6cc0" stroke-width=".6" opacity=".45"/><path d="M305.4 39.8L310.5 41.3" stroke="#d88a38" stroke-width=".6" opacity=".45"/><path d="M307.9 31.5L313.4 33.3" stroke="#ffffff" stroke-width="1.6"/><path d="M307.1 32.1L312.6 33.9" stroke="#4a6cc0" stroke-width=".6" opacity=".45"/><path d="M308.7 31.1L314.2 32.9" stroke="#d88a38" stroke-width=".6" opacity=".45"/><path d="M307.9 34.1L312.0 32.5" stroke="#ffffff" stroke-width="1.7"/><path d="M307.1 34.7L311.2 33.1" stroke="#4a6cc0" stroke-width=".6" opacity=".45"/><path d="M308.7 33.7L312.8 32.1" stroke="#d88a38" stroke-width=".6" opacity=".45"/><path d="M307.9 36.9L312.1 38.2" stroke="#f8f6f2" stroke-width="1.8"/><path d="M307.1 37.5L311.3 38.8" stroke="#4a6cc0" stroke-width=".6" opacity=".45"/><path d="M308.7 36.5L312.9 37.8" stroke="#d88a38" stroke-width=".6" opacity=".45"/><path d="M307.9 39.2L313.1 37.4" stroke="#f8f6f2" stroke-width="1.8"/><path d="M307.1 39.8L312.3 38.0" stroke="#4a6cc0" stroke-width=".6" opacity=".45"/><path d="M308.7 38.8L313.9 37.0" stroke="#d88a38" stroke-width=".6" opacity=".45"/><path d="M307.9 41.3L312.7 43.4" stroke="#f8f6f2" stroke-width="1.7"/><path d="M307.1 41.9L311.9 44.0" stroke="#4a6cc0" stroke-width=".6" opacity=".45"/><path d="M308.7 40.9L313.5 43.0" stroke="#d88a38" stroke-width=".6" opacity=".45"/><path d="M311.0 31.5L315.3 29.7" stroke="#f8f6f2" stroke-width="1.7"/><path d="M310.2 32.1L314.5 30.3" stroke="#4a6cc0" stroke-width=".6" opacity=".45"/><path d="M311.8 31.1L316.1 29.3" stroke="#d88a38" stroke-width=".6" opacity=".45"/><path d="M311.0 34.2L315.9 35.6" stroke="#ffffff" stroke-width="1.8"/><path d="M310.2 34.8L315.1 36.2" stroke="#4a6cc0" stroke-width=".6" opacity=".45"/><path d="M311.8 33.8L316.7 35.2" stroke="#d88a38" stroke-width=".6" opacity=".45"/><path d="M311.0 36.9L315.0 35.0" stroke="#fbf1e2" stroke-width="1.8"/><path d="M310.2 37.5L314.2 35.6" stroke="#4a6cc0" stroke-width=".6" opacity=".45"/><path d="M311.8 36.5L315.8 34.6" stroke="#d88a38" stroke-width=".6" opacity=".45"/><path d="M311.0 39.7L315.8 41.3" stroke="#ffffff" stroke-width="1.9"/><path d="M310.2 40.3L315.0 41.9" stroke="#4a6cc0" stroke-width=".6" opacity=".45"/><path d="M311.8 39.3L316.6 40.9" stroke="#d88a38" stroke-width=".6" opacity=".45"/><path d="M311.0 41.9L317.0 44.0" stroke="#fbf1e2" stroke-width="1.8"/><path d="M310.2 42.5L316.2 44.6" stroke="#4a6cc0" stroke-width=".6" opacity=".45"/><path d="M311.8 41.5L317.8 43.6" stroke="#d88a38" stroke-width=".6" opacity=".45"/><rect x="312.9" y="30.5" width="2.3" height="1.3" fill="#e6e8ee" opacity=".75"/><path d="M314.3 31.5L319.0 33.4" stroke="#ffffff" stroke-width="1.5"/><path d="M313.5 32.1L318.2 34.0" stroke="#4a6cc0" stroke-width=".6" opacity=".45"/><path d="M315.1 31.1L319.8 33.0" stroke="#d88a38" stroke-width=".6" opacity=".45"/><path d="M314.3 34.3L319.6 32.2" stroke="#ffffff" stroke-width="1.8"/><path d="M313.5 34.9L318.8 32.8" stroke="#4a6cc0" stroke-width=".6" opacity=".45"/><path d="M315.1 33.9L320.4 31.8" stroke="#d88a38" stroke-width=".6" opacity=".45"/><path d="M314.3 36.7L318.2 38.0" stroke="#f8f6f2" stroke-width="2.0"/><path d="M313.5 37.3L317.4 38.6" stroke="#4a6cc0" stroke-width=".6" opacity=".45"/><path d="M315.1 36.3L319.0 37.6" stroke="#d88a38" stroke-width=".6" opacity=".45"/><path d="M314.3 38.8L318.9 36.8" stroke="#ffffff" stroke-width="1.6"/><path d="M313.5 39.4L318.1 37.4" stroke="#4a6cc0" stroke-width=".6" opacity=".45"/><path d="M315.1 38.4L319.7 36.4" stroke="#d88a38" stroke-width=".6" opacity=".45"/><path d="M314.3 41.4L318.9 39.7" stroke="#f8f6f2" stroke-width="1.7"/><path d="M313.5 42.0L318.1 40.3" stroke="#4a6cc0" stroke-width=".6" opacity=".45"/><path d="M315.1 41.0L319.7 39.3" stroke="#d88a38" stroke-width=".6" opacity=".45"/><path d="M317.6 31.5L322.8 33.3" stroke="#eef0f4" stroke-width="2.0"/><path d="M316.8 32.1L322.0 33.9" stroke="#4a6cc0" stroke-width=".6" opacity=".45"/><path d="M318.4 31.1L323.6 32.9" stroke="#d88a38" stroke-width=".6" opacity=".45"/><path d="M317.6 34.0L322.5 35.7" stroke="#fbf1e2" stroke-width="1.5"/><path d="M316.8 34.6L321.7 36.3" stroke="#4a6cc0" stroke-width=".6" opacity=".45"/><path d="M318.4 33.6L323.3 35.3" stroke="#d88a38" stroke-width=".6" opacity=".45"/><path d="M317.6 36.5L322.3 37.8" stroke="#fbf1e2" stroke-width="1.7"/><path d="M316.8 37.1L321.5 38.4" stroke="#4a6cc0" stroke-width=".6" opacity=".45"/><path d="M318.4 36.1L323.1 37.4" stroke="#d88a38" stroke-width=".6" opacity=".45"/><path d="M317.6 39.1L321.7 40.4" stroke="#fbf1e2" stroke-width="1.8"/><path d="M316.8 39.7L320.9 41.0" stroke="#4a6cc0" stroke-width=".6" opacity=".45"/><path d="M318.4 38.7L322.5 40.0" stroke="#d88a38" stroke-width=".6" opacity=".45"/><path d="M317.6 41.9L322.2 44.0" stroke="#ffffff" stroke-width="1.8"/><path d="M316.8 42.5L321.4 44.6" stroke="#4a6cc0" stroke-width=".6" opacity=".45"/><path d="M318.4 41.5L323.0 43.6" stroke="#d88a38" stroke-width=".6" opacity=".45"/><path d="M320.7 31.5L325.9 29.9" stroke="#ffffff" stroke-width="1.9"/><path d="M319.9 32.1L325.1 30.5" stroke="#4a6cc0" stroke-width=".6" opacity=".45"/><path d="M321.5 31.1L326.7 29.5" stroke="#d88a38" stroke-width=".6" opacity=".45"/><path d="M320.7 34.2L324.6 36.2" stroke="#eef0f4" stroke-width="1.6"/><path d="M319.9 34.8L323.8 36.8" stroke="#4a6cc0" stroke-width=".6" opacity=".45"/><path d="M321.5 33.8L325.4 35.8" stroke="#d88a38" stroke-width=".6" opacity=".45"/><path d="M320.7 37.0L324.8 35.5" stroke="#ffffff" stroke-width="1.6"/><path d="M319.9 37.6L324.0 36.1" stroke="#4a6cc0" stroke-width=".6" opacity=".45"/><path d="M321.5 36.6L325.6 35.1" stroke="#d88a38" stroke-width=".6" opacity=".45"/><path d="M320.7 39.4L324.7 37.4" stroke="#f8f6f2" stroke-width="1.9"/><path d="M319.9 40.0L323.9 38.0" stroke="#4a6cc0" stroke-width=".6" opacity=".45"/><path d="M321.5 39.0L325.5 37.0" stroke="#d88a38" stroke-width=".6" opacity=".45"/><path d="M320.7 41.8L325.8 43.7" stroke="#f8f6f2" stroke-width="1.6"/><path d="M319.9 42.4L325.0 44.3" stroke="#4a6cc0" stroke-width=".6" opacity=".45"/><path d="M321.5 41.4L326.6 43.3" stroke="#d88a38" stroke-width=".6" opacity=".45"/><path d="M323.8 31.5L329.1 33.1" stroke="#ffffff" stroke-width="1.8"/><path d="M323.0 32.1L328.3 33.7" stroke="#4a6cc0" stroke-width=".6" opacity=".45"/><path d="M324.6 31.1L329.9 32.7" stroke="#d88a38" stroke-width=".6" opacity=".45"/><path d="M323.8 34.2L329.7 32.8" stroke="#f8f6f2" stroke-width="1.9"/><path d="M323.0 34.8L328.9 33.4" stroke="#4a6cc0" stroke-width=".6" opacity=".45"/><path d="M324.6 33.8L330.5 32.4" stroke="#d88a38" stroke-width=".6" opacity=".45"/><path d="M323.8 36.3L328.2 34.8" stroke="#fbf1e2" stroke-width="1.8"/><path d="M323.0 36.9L327.4 35.4" stroke="#4a6cc0" stroke-width=".6" opacity=".45"/><path d="M324.6 35.9L329.0 34.4" stroke="#d88a38" stroke-width=".6" opacity=".45"/><path d="M323.8 38.8L329.6 40.3" stroke="#f8f6f2" stroke-width="1.6"/><path d="M323.0 39.4L328.8 40.9" stroke="#4a6cc0" stroke-width=".6" opacity=".45"/><path d="M324.6 38.4L330.4 39.9" stroke="#d88a38" stroke-width=".6" opacity=".45"/><path d="M323.8 41.4L327.4 42.7" stroke="#ffffff" stroke-width="1.8"/><path d="M323.0 42.0L326.6 43.3" stroke="#4a6cc0" stroke-width=".6" opacity=".45"/><path d="M324.6 41.0L328.2 42.3" stroke="#d88a38" stroke-width=".6" opacity=".45"/><path d="M326.9 38.4L330.7 40.4" stroke="#ffffff" stroke-width="1.8"/><path d="M326.1 39.0L329.9 41.0" stroke="#4a6cc0" stroke-width=".6" opacity=".45"/><path d="M327.7 38.0L331.5 40.0" stroke="#d88a38" stroke-width=".6" opacity=".45"/><path d="M326.9 41.0L332.0 39.1" stroke="#fbf1e2" stroke-width="1.8"/><path d="M326.1 41.6L331.2 39.7" stroke="#4a6cc0" stroke-width=".6" opacity=".45"/><path d="M327.7 40.6L332.8 38.7" stroke="#d88a38" stroke-width=".6" opacity=".45"/><path d="M330.1 31.5L335.4 33.6" stroke="#e4ecf8" stroke-width="1.8"/><path d="M329.3 32.1L334.6 34.2" stroke="#4a6cc0" stroke-width=".6" opacity=".45"/><path d="M330.9 31.1L336.2 33.2" stroke="#d88a38" stroke-width=".6" opacity=".45"/><path d="M330.1 33.9L334.1 35.6" stroke="#e4ecf8" stroke-width="1.8"/><path d="M329.3 34.5L333.3 36.2" stroke="#4a6cc0" stroke-width=".6" opacity=".45"/><path d="M330.9 33.5L334.9 35.2" stroke="#d88a38" stroke-width=".6" opacity=".45"/><path d="M330.1 36.3L335.2 34.2" stroke="#eef0f4" stroke-width="2.0"/><path d="M329.3 36.9L334.4 34.8" stroke="#4a6cc0" stroke-width=".6" opacity=".45"/><path d="M330.9 35.9L336.0 33.8" stroke="#d88a38" stroke-width=".6" opacity=".45"/><path d="M330.1 38.9L335.4 40.4" stroke="#ffffff" stroke-width="1.7"/><path d="M329.3 39.5L334.6 41.0" stroke="#4a6cc0" stroke-width=".6" opacity=".45"/><path d="M330.9 38.5L336.2 40.0" stroke="#d88a38" stroke-width=".6" opacity=".45"/><path d="M333.1 31.5L337.0 33.1" stroke="#eef0f4" stroke-width="1.8"/><path d="M332.3 32.1L336.2 33.7" stroke="#4a6cc0" stroke-width=".6" opacity=".45"/><path d="M333.9 31.1L337.8 32.7" stroke="#d88a38" stroke-width=".6" opacity=".45"/><path d="M333.1 33.8L338.1 35.4" stroke="#fbf1e2" stroke-width="1.6"/><path d="M332.3 34.4L337.3 36.0" stroke="#4a6cc0" stroke-width=".6" opacity=".45"/><path d="M333.9 33.4L338.9 35.0" stroke="#d88a38" stroke-width=".6" opacity=".45"/><path d="M333.1 35.9L338.9 37.5" stroke="#ffffff" stroke-width="1.8"/><path d="M332.3 36.5L338.1 38.1" stroke="#4a6cc0" stroke-width=".6" opacity=".45"/><path d="M333.9 35.5L339.7 37.1" stroke="#d88a38" stroke-width=".6" opacity=".45"/><path d="M333.1 41.0L338.6 42.4" stroke="#f8f6f2" stroke-width="1.8"/><path d="M332.3 41.6L337.8 43.0" stroke="#4a6cc0" stroke-width=".6" opacity=".45"/><path d="M333.9 40.6L339.4 42.0" stroke="#d88a38" stroke-width=".6" opacity=".45"/><path d="M335.7 34.3L339.9 36.4" stroke="#f8f6f2" stroke-width="1.6"/><path d="M334.9 34.9L339.1 37.0" stroke="#4a6cc0" stroke-width=".6" opacity=".45"/><path d="M336.5 33.9L340.7 36.0" stroke="#d88a38" stroke-width=".6" opacity=".45"/><path d="M335.7 39.2L339.7 40.4" stroke="#eef0f4" stroke-width="1.9"/><path d="M334.9 39.8L338.9 41.0" stroke="#4a6cc0" stroke-width=".6" opacity=".45"/><path d="M336.5 38.8L340.5 40.0" stroke="#d88a38" stroke-width=".6" opacity=".45"/><path d="M335.7 41.3L340.1 42.5" stroke="#fbf1e2" stroke-width="1.6"/><path d="M334.9 41.9L339.3 43.1" stroke="#4a6cc0" stroke-width=".6" opacity=".45"/><path d="M336.5 40.9L340.9 42.1" stroke="#d88a38" stroke-width=".6" opacity=".45"/><path d="M338.8 31.5L343.2 33.3" stroke="#fbf1e2" stroke-width="1.7"/><path d="M338.0 32.1L342.4 33.9" stroke="#4a6cc0" stroke-width=".6" opacity=".45"/><path d="M339.6 31.1L344.0 32.9" stroke="#d88a38" stroke-width=".6" opacity=".45"/><path d="M338.8 33.8L344.3 35.9" stroke="#ffffff" stroke-width="1.8"/><path d="M338.0 34.4L343.5 36.5" stroke="#4a6cc0" stroke-width=".6" opacity=".45"/><path d="M339.6 33.4L345.1 35.5" stroke="#d88a38" stroke-width=".6" opacity=".45"/><path d="M338.8 36.3L343.5 38.1" stroke="#fbf1e2" stroke-width="1.7"/><path d="M338.0 36.9L342.7 38.7" stroke="#4a6cc0" stroke-width=".6" opacity=".45"/><path d="M339.6 35.9L344.3 37.7" stroke="#d88a38" stroke-width=".6" opacity=".45"/><path d="M338.8 39.1L343.6 41.0" stroke="#e4ecf8" stroke-width="1.8"/><path d="M338.0 39.7L342.8 41.6" stroke="#4a6cc0" stroke-width=".6" opacity=".45"/><path d="M339.6 38.7L344.4 40.6" stroke="#d88a38" stroke-width=".6" opacity=".45"/><rect x="340.7" y="44.6" width="2.4" height="1.2" fill="#e0e4ea" opacity=".7"/><path d="M341.8 31.5L346.8 29.8" stroke="#e4ecf8" stroke-width="1.8"/><path d="M341.0 32.1L346.0 30.4" stroke="#4a6cc0" stroke-width=".6" opacity=".45"/><path d="M342.6 31.1L347.6 29.4" stroke="#d88a38" stroke-width=".6" opacity=".45"/><path d="M341.8 33.9L346.0 35.5" stroke="#fbf1e2" stroke-width="1.8"/><path d="M341.0 34.5L345.2 36.1" stroke="#4a6cc0" stroke-width=".6" opacity=".45"/><path d="M342.6 33.5L346.8 35.1" stroke="#d88a38" stroke-width=".6" opacity=".45"/><path d="M341.8 35.9L346.9 33.8" stroke="#f8f6f2" stroke-width="1.9"/><path d="M341.0 36.5L346.1 34.4" stroke="#4a6cc0" stroke-width=".6" opacity=".45"/><path d="M342.6 35.5L347.7 33.4" stroke="#d88a38" stroke-width=".6" opacity=".45"/><path d="M341.8 38.1L345.6 39.4" stroke="#eef0f4" stroke-width="1.7"/><path d="M341.0 38.7L344.8 40.0" stroke="#4a6cc0" stroke-width=".6" opacity=".45"/><path d="M342.6 37.7L346.4 39.0" stroke="#d88a38" stroke-width=".6" opacity=".45"/><path d="M341.8 40.8L345.9 42.6" stroke="#e4ecf8" stroke-width="1.8"/><path d="M341.0 41.4L345.1 43.2" stroke="#4a6cc0" stroke-width=".6" opacity=".45"/><path d="M342.6 40.4L346.7 42.2" stroke="#d88a38" stroke-width=".6" opacity=".45"/><path d="M345.1 33.8L349.7 35.4" stroke="#ffffff" stroke-width="1.8"/><path d="M344.3 34.4L348.9 36.0" stroke="#4a6cc0" stroke-width=".6" opacity=".45"/><path d="M345.9 33.4L350.5 35.0" stroke="#d88a38" stroke-width=".6" opacity=".45"/><path d="M345.1 36.4L350.4 38.1" stroke="#ffffff" stroke-width="1.5"/><path d="M344.3 37.0L349.6 38.7" stroke="#4a6cc0" stroke-width=".6" opacity=".45"/><path d="M345.9 36.0L351.2 37.7" stroke="#d88a38" stroke-width=".6" opacity=".45"/><path d="M345.1 40.9L350.2 42.8" stroke="#e4ecf8" stroke-width="1.9"/><path d="M344.3 41.5L349.4 43.4" stroke="#4a6cc0" stroke-width=".6" opacity=".45"/><path d="M345.9 40.5L351.0 42.4" stroke="#d88a38" stroke-width=".6" opacity=".45"/><path d="M347.7 31.5L351.7 33.0" stroke="#fbf1e2" stroke-width="1.7"/><path d="M346.9 32.1L350.9 33.6" stroke="#4a6cc0" stroke-width=".6" opacity=".45"/><path d="M348.5 31.1L352.5 32.6" stroke="#d88a38" stroke-width=".6" opacity=".45"/><path d="M347.7 33.7L352.7 35.9" stroke="#ffffff" stroke-width="1.6"/><path d="M346.9 34.3L351.9 36.5" stroke="#4a6cc0" stroke-width=".6" opacity=".45"/><path d="M348.5 33.3L353.5 35.5" stroke="#d88a38" stroke-width=".6" opacity=".45"/><path d="M347.7 38.9L353.1 40.5" stroke="#f8f6f2" stroke-width="1.9"/><path d="M346.9 39.5L352.3 41.1" stroke="#4a6cc0" stroke-width=".6" opacity=".45"/><path d="M348.5 38.5L353.9 40.1" stroke="#d88a38" stroke-width=".6" opacity=".45"/><path d="M347.7 41.3L353.1 39.4" stroke="#f8f6f2" stroke-width="1.6"/><path d="M346.9 41.9L352.3 40.0" stroke="#4a6cc0" stroke-width=".6" opacity=".45"/><path d="M348.5 40.9L353.9 39.0" stroke="#d88a38" stroke-width=".6" opacity=".45"/><path d="M350.9 31.5L356.7 29.7" stroke="#f8f6f2" stroke-width="1.6"/><path d="M350.1 32.1L355.9 30.3" stroke="#4a6cc0" stroke-width=".6" opacity=".45"/><path d="M351.7 31.1L357.5 29.3" stroke="#d88a38" stroke-width=".6" opacity=".45"/><path d="M350.9 34.3L354.8 36.2" stroke="#e4ecf8" stroke-width="1.5"/><path d="M350.1 34.9L354.0 36.8" stroke="#4a6cc0" stroke-width=".6" opacity=".45"/><path d="M351.7 33.9L355.6 35.8" stroke="#d88a38" stroke-width=".6" opacity=".45"/><path d="M350.9 36.6L356.5 38.4" stroke="#eef0f4" stroke-width="1.6"/><path d="M350.1 37.2L355.7 39.0" stroke="#4a6cc0" stroke-width=".6" opacity=".45"/><path d="M351.7 36.2L357.3 38.0" stroke="#d88a38" stroke-width=".6" opacity=".45"/><path d="M350.9 42.2L355.0 40.4" stroke="#f8f6f2" stroke-width="2.0"/><path d="M350.1 42.8L354.2 41.0" stroke="#4a6cc0" stroke-width=".6" opacity=".45"/><path d="M351.7 41.8L355.8 40.0" stroke="#d88a38" stroke-width=".6" opacity=".45"/><path d="M354.1 31.5L357.9 30.1" stroke="#f8f6f2" stroke-width="2.0"/><path d="M353.3 32.1L357.1 30.7" stroke="#4a6cc0" stroke-width=".6" opacity=".45"/><path d="M354.9 31.1L358.7 29.7" stroke="#d88a38" stroke-width=".6" opacity=".45"/><path d="M354.1 33.7L359.5 35.7" stroke="#e4ecf8" stroke-width="1.7"/><path d="M353.3 34.3L358.7 36.3" stroke="#4a6cc0" stroke-width=".6" opacity=".45"/><path d="M354.9 33.3L360.3 35.3" stroke="#d88a38" stroke-width=".6" opacity=".45"/><path d="M354.1 36.0L358.0 38.1" stroke="#fbf1e2" stroke-width="1.9"/><path d="M353.3 36.6L357.2 38.7" stroke="#4a6cc0" stroke-width=".6" opacity=".45"/><path d="M354.9 35.6L358.8 37.7" stroke="#d88a38" stroke-width=".6" opacity=".45"/><path d="M354.1 38.1L359.7 39.7" stroke="#f8f6f2" stroke-width="1.7"/><path d="M353.3 38.7L358.9 40.3" stroke="#4a6cc0" stroke-width=".6" opacity=".45"/><path d="M354.9 37.7L360.5 39.3" stroke="#d88a38" stroke-width=".6" opacity=".45"/><path d="M354.1 40.7L357.7 42.2" stroke="#eef0f4" stroke-width="1.7"/><path d="M353.3 41.3L356.9 42.8" stroke="#4a6cc0" stroke-width=".6" opacity=".45"/><path d="M354.9 40.3L358.5 41.8" stroke="#d88a38" stroke-width=".6" opacity=".45"/><path d="M356.8 31.5L362.7 32.8" stroke="#f8f6f2" stroke-width="1.7"/><path d="M356.0 32.1L361.9 33.4" stroke="#4a6cc0" stroke-width=".6" opacity=".45"/><path d="M357.6 31.1L363.5 32.4" stroke="#d88a38" stroke-width=".6" opacity=".45"/><path d="M356.8 33.5L362.7 35.2" stroke="#ffffff" stroke-width="1.9"/><path d="M356.0 34.1L361.9 35.8" stroke="#4a6cc0" stroke-width=".6" opacity=".45"/><path d="M357.6 33.1L363.5 34.8" stroke="#d88a38" stroke-width=".6" opacity=".45"/><path d="M356.8 36.2L362.2 37.9" stroke="#f8f6f2" stroke-width="1.9"/><path d="M356.0 36.8L361.4 38.5" stroke="#4a6cc0" stroke-width=".6" opacity=".45"/><path d="M357.6 35.8L363.0 37.5" stroke="#d88a38" stroke-width=".6" opacity=".45"/><path d="M356.8 38.6L362.7 40.8" stroke="#e4ecf8" stroke-width="1.6"/><path d="M356.0 39.2L361.9 41.4" stroke="#4a6cc0" stroke-width=".6" opacity=".45"/><path d="M357.6 38.2L363.5 40.4" stroke="#d88a38" stroke-width=".6" opacity=".45"/><path d="M356.8 41.3L360.7 42.8" stroke="#ffffff" stroke-width="1.7"/><path d="M356.0 41.9L359.9 43.4" stroke="#4a6cc0" stroke-width=".6" opacity=".45"/><path d="M357.6 40.9L361.5 42.4" stroke="#d88a38" stroke-width=".6" opacity=".45"/><rect x="358.4" y="29.9" width="2.0" height="1.3" fill="#e6e8ee" opacity=".75"/><path d="M359.7 31.5L363.7 33.4" stroke="#ffffff" stroke-width="1.9"/><path d="M358.9 32.1L362.9 34.0" stroke="#4a6cc0" stroke-width=".6" opacity=".45"/><path d="M360.5 31.1L364.5 33.0" stroke="#d88a38" stroke-width=".6" opacity=".45"/><path d="M359.7 33.9L363.3 35.7" stroke="#e4ecf8" stroke-width="1.8"/><path d="M358.9 34.5L362.5 36.3" stroke="#4a6cc0" stroke-width=".6" opacity=".45"/><path d="M360.5 33.5L364.1 35.3" stroke="#d88a38" stroke-width=".6" opacity=".45"/><path d="M359.7 36.3L363.5 38.3" stroke="#fbf1e2" stroke-width="2.0"/><path d="M358.9 36.9L362.7 38.9" stroke="#4a6cc0" stroke-width=".6" opacity=".45"/><path d="M360.5 35.9L364.3 37.9" stroke="#d88a38" stroke-width=".6" opacity=".45"/><path d="M359.7 38.3L365.5 39.9" stroke="#f8f6f2" stroke-width="2.0"/><path d="M358.9 38.9L364.7 40.5" stroke="#4a6cc0" stroke-width=".6" opacity=".45"/><path d="M360.5 37.9L366.3 39.5" stroke="#d88a38" stroke-width=".6" opacity=".45"/><path d="M359.7 41.0L364.5 42.7" stroke="#e4ecf8" stroke-width="1.6"/><path d="M358.9 41.6L363.7 43.3" stroke="#4a6cc0" stroke-width=".6" opacity=".45"/><path d="M360.5 40.6L365.3 42.3" stroke="#d88a38" stroke-width=".6" opacity=".45"/><path d="M362.4 34.0L368.0 35.5" stroke="#fbf1e2" stroke-width="1.7"/><path d="M361.6 34.6L367.2 36.1" stroke="#4a6cc0" stroke-width=".6" opacity=".45"/><path d="M363.2 33.6L368.8 35.1" stroke="#d88a38" stroke-width=".6" opacity=".45"/><path d="M362.4 36.5L367.7 35.1" stroke="#ffffff" stroke-width="1.6"/><path d="M361.6 37.1L366.9 35.7" stroke="#4a6cc0" stroke-width=".6" opacity=".45"/><path d="M363.2 36.1L368.5 34.7" stroke="#d88a38" stroke-width=".6" opacity=".45"/><path d="M362.4 38.6L368.2 40.3" stroke="#e4ecf8" stroke-width="1.7"/><path d="M361.6 39.2L367.4 40.9" stroke="#4a6cc0" stroke-width=".6" opacity=".45"/><path d="M363.2 38.2L369.0 39.9" stroke="#d88a38" stroke-width=".6" opacity=".45"/><path d="M362.4 40.7L367.7 42.6" stroke="#e4ecf8" stroke-width="1.6"/><path d="M361.6 41.3L366.9 43.2" stroke="#4a6cc0" stroke-width=".6" opacity=".45"/><path d="M363.2 40.3L368.5 42.2" stroke="#d88a38" stroke-width=".6" opacity=".45"/><path d="M365.1 31.5L371.1 33.5" stroke="#fbf1e2" stroke-width="1.8"/><path d="M364.3 32.1L370.3 34.1" stroke="#4a6cc0" stroke-width=".6" opacity=".45"/><path d="M365.9 31.1L371.9 33.1" stroke="#d88a38" stroke-width=".6" opacity=".45"/><path d="M365.1 33.9L370.7 35.8" stroke="#ffffff" stroke-width="1.6"/><path d="M364.3 34.5L369.9 36.4" stroke="#4a6cc0" stroke-width=".6" opacity=".45"/><path d="M365.9 33.5L371.5 35.4" stroke="#d88a38" stroke-width=".6" opacity=".45"/><path d="M365.1 36.6L370.0 35.3" stroke="#eef0f4" stroke-width="1.9"/><path d="M364.3 37.2L369.2 35.9" stroke="#4a6cc0" stroke-width=".6" opacity=".45"/><path d="M365.9 36.2L370.8 34.9" stroke="#d88a38" stroke-width=".6" opacity=".45"/><path d="M365.1 38.6L370.2 40.2" stroke="#ffffff" stroke-width="1.6"/><path d="M364.3 39.2L369.4 40.8" stroke="#4a6cc0" stroke-width=".6" opacity=".45"/><path d="M365.9 38.2L371.0 39.8" stroke="#d88a38" stroke-width=".6" opacity=".45"/><path d="M365.1 40.7L370.0 42.0" stroke="#eef0f4" stroke-width="1.5"/><path d="M364.3 41.3L369.2 42.6" stroke="#4a6cc0" stroke-width=".6" opacity=".45"/><path d="M365.9 40.3L370.8 41.6" stroke="#d88a38" stroke-width=".6" opacity=".45"/><path d="M367.8 31.5L372.2 33.0" stroke="#f8f6f2" stroke-width="2.0"/><path d="M367.0 32.1L371.4 33.6" stroke="#4a6cc0" stroke-width=".6" opacity=".45"/><path d="M368.6 31.1L373.0 32.6" stroke="#d88a38" stroke-width=".6" opacity=".45"/><path d="M367.8 36.8L371.5 34.9" stroke="#ffffff" stroke-width="1.6"/><path d="M367.0 37.4L370.7 35.5" stroke="#4a6cc0" stroke-width=".6" opacity=".45"/><path d="M368.6 36.4L372.3 34.5" stroke="#d88a38" stroke-width=".6" opacity=".45"/><path d="M367.8 39.5L373.1 41.3" stroke="#fbf1e2" stroke-width="1.6"/><path d="M367.0 40.1L372.3 41.9" stroke="#4a6cc0" stroke-width=".6" opacity=".45"/><path d="M368.6 39.1L373.9 40.9" stroke="#d88a38" stroke-width=".6" opacity=".45"/><path d="M367.8 42.2L373.3 40.2" stroke="#fbf1e2" stroke-width="1.7"/><path d="M367.0 42.8L372.5 40.8" stroke="#4a6cc0" stroke-width=".6" opacity=".45"/><path d="M368.6 41.8L374.1 39.8" stroke="#d88a38" stroke-width=".6" opacity=".45"/><rect x="369.2" y="45.4" width="1.7" height="1.2" fill="#e0e4ea" opacity=".7"/><rect x="369.7" y="29.8" width="1.1" height="1.3" fill="#e6e8ee" opacity=".75"/><path d="M371.0 31.5L376.7 33.3" stroke="#f8f6f2" stroke-width="1.7"/><path d="M370.2 32.1L375.9 33.9" stroke="#4a6cc0" stroke-width=".6" opacity=".45"/><path d="M371.8 31.1L377.5 32.9" stroke="#d88a38" stroke-width=".6" opacity=".45"/><path d="M371.0 34.2L374.7 35.8" stroke="#eef0f4" stroke-width="1.5"/><path d="M370.2 34.8L373.9 36.4" stroke="#4a6cc0" stroke-width=".6" opacity=".45"/><path d="M371.8 33.8L375.5 35.4" stroke="#d88a38" stroke-width=".6" opacity=".45"/><path d="M371.0 36.7L376.6 38.6" stroke="#ffffff" stroke-width="1.6"/><path d="M370.2 37.3L375.8 39.2" stroke="#4a6cc0" stroke-width=".6" opacity=".45"/><path d="M371.8 36.3L377.4 38.2" stroke="#d88a38" stroke-width=".6" opacity=".45"/><path d="M371.0 38.8L375.4 40.8" stroke="#ffffff" stroke-width="1.8"/><path d="M370.2 39.4L374.6 41.4" stroke="#4a6cc0" stroke-width=".6" opacity=".45"/><path d="M371.8 38.4L376.2 40.4" stroke="#d88a38" stroke-width=".6" opacity=".45"/><path d="M371.0 41.5L374.8 43.4" stroke="#eef0f4" stroke-width="1.5"/><path d="M370.2 42.1L374.0 44.0" stroke="#4a6cc0" stroke-width=".6" opacity=".45"/><path d="M371.8 41.1L375.6 43.0" stroke="#d88a38" stroke-width=".6" opacity=".45"/><path d="M374.2 34.0L378.5 36.0" stroke="#fbf1e2" stroke-width="1.8"/><path d="M373.4 34.6L377.7 36.6" stroke="#4a6cc0" stroke-width=".6" opacity=".45"/><path d="M375.0 33.6L379.3 35.6" stroke="#d88a38" stroke-width=".6" opacity=".45"/><path d="M374.2 36.6L379.3 38.7" stroke="#fbf1e2" stroke-width="1.6"/><path d="M373.4 37.2L378.5 39.3" stroke="#4a6cc0" stroke-width=".6" opacity=".45"/><path d="M375.0 36.2L380.1 38.3" stroke="#d88a38" stroke-width=".6" opacity=".45"/><path d="M374.2 39.1L379.7 37.5" stroke="#f8f6f2" stroke-width="1.6"/><path d="M373.4 39.7L378.9 38.1" stroke="#4a6cc0" stroke-width=".6" opacity=".45"/><path d="M375.0 38.7L380.5 37.1" stroke="#d88a38" stroke-width=".6" opacity=".45"/><path d="M374.2 41.7L379.0 43.2" stroke="#f8f6f2" stroke-width="1.5"/><path d="M373.4 42.3L378.2 43.8" stroke="#4a6cc0" stroke-width=".6" opacity=".45"/><path d="M375.0 41.3L379.8 42.8" stroke="#d88a38" stroke-width=".6" opacity=".45"/><path d="M377.1 31.5L382.3 29.8" stroke="#f8f6f2" stroke-width="1.8"/><path d="M376.3 32.1L381.5 30.4" stroke="#4a6cc0" stroke-width=".6" opacity=".45"/><path d="M377.9 31.1L383.1 29.4" stroke="#d88a38" stroke-width=".6" opacity=".45"/><path d="M377.1 33.7L380.9 35.8" stroke="#fbf1e2" stroke-width="1.5"/><path d="M376.3 34.3L380.1 36.4" stroke="#4a6cc0" stroke-width=".6" opacity=".45"/><path d="M377.9 33.3L381.7 35.4" stroke="#d88a38" stroke-width=".6" opacity=".45"/><path d="M377.1 35.9L381.3 34.5" stroke="#f8f6f2" stroke-width="1.8"/><path d="M376.3 36.5L380.5 35.1" stroke="#4a6cc0" stroke-width=".6" opacity=".45"/><path d="M377.9 35.5L382.1 34.1" stroke="#d88a38" stroke-width=".6" opacity=".45"/><path d="M377.1 40.4L381.1 42.6" stroke="#fbf1e2" stroke-width="1.5"/><path d="M376.3 41.0L380.3 43.2" stroke="#4a6cc0" stroke-width=".6" opacity=".45"/><path d="M377.9 40.0L381.9 42.2" stroke="#d88a38" stroke-width=".6" opacity=".45"/><rect x="379.6" y="45.1" width="1.3" height="1.2" fill="#e0e4ea" opacity=".7"/><path d="M379.8 31.5L385.0 33.3" stroke="#ffffff" stroke-width="1.6"/><path d="M379.0 32.1L384.2 33.9" stroke="#4a6cc0" stroke-width=".6" opacity=".45"/><path d="M380.6 31.1L385.8 32.9" stroke="#d88a38" stroke-width=".6" opacity=".45"/><path d="M379.8 33.7L385.2 35.9" stroke="#fbf1e2" stroke-width="1.9"/><path d="M379.0 34.3L384.4 36.5" stroke="#4a6cc0" stroke-width=".6" opacity=".45"/><path d="M380.6 33.3L386.0 35.5" stroke="#d88a38" stroke-width=".6" opacity=".45"/><path d="M379.8 36.1L384.1 38.1" stroke="#f8f6f2" stroke-width="2.0"/><path d="M379.0 36.7L383.3 38.7" stroke="#4a6cc0" stroke-width=".6" opacity=".45"/><path d="M380.6 35.7L384.9 37.7" stroke="#d88a38" stroke-width=".6" opacity=".45"/><path d="M379.8 38.1L383.3 36.6" stroke="#f8f6f2" stroke-width="1.6"/><path d="M379.0 38.7L382.5 37.2" stroke="#4a6cc0" stroke-width=".6" opacity=".45"/><path d="M380.6 37.7L384.1 36.2" stroke="#d88a38" stroke-width=".6" opacity=".45"/><path d="M379.8 40.7L383.3 38.5" stroke="#fbf1e2" stroke-width="1.8"/><path d="M379.0 41.3L382.5 39.1" stroke="#4a6cc0" stroke-width=".6" opacity=".45"/><path d="M380.6 40.3L384.1 38.1" stroke="#d88a38" stroke-width=".6" opacity=".45"/><path d="M383.2 31.5L387.9 32.8" stroke="#e4ecf8" stroke-width="2.0"/><path d="M382.4 32.1L387.1 33.4" stroke="#4a6cc0" stroke-width=".6" opacity=".45"/><path d="M384.0 31.1L388.7 32.4" stroke="#d88a38" stroke-width=".6" opacity=".45"/><path d="M383.2 34.0L387.1 36.1" stroke="#eef0f4" stroke-width="1.9"/><path d="M382.4 34.6L386.3 36.7" stroke="#4a6cc0" stroke-width=".6" opacity=".45"/><path d="M384.0 33.6L387.9 35.7" stroke="#d88a38" stroke-width=".6" opacity=".45"/><path d="M383.2 36.4L388.9 38.3" stroke="#f8f6f2" stroke-width="1.8"/><path d="M382.4 37.0L388.1 38.9" stroke="#4a6cc0" stroke-width=".6" opacity=".45"/><path d="M384.0 36.0L389.7 37.9" stroke="#d88a38" stroke-width=".6" opacity=".45"/><path d="M383.2 39.0L387.5 40.9" stroke="#eef0f4" stroke-width="1.7"/><path d="M382.4 39.6L386.7 41.5" stroke="#4a6cc0" stroke-width=".6" opacity=".45"/><path d="M384.0 38.6L388.3 40.5" stroke="#d88a38" stroke-width=".6" opacity=".45"/><path d="M383.2 41.4L388.9 43.5" stroke="#e4ecf8" stroke-width="1.7"/><path d="M382.4 42.0L388.1 44.1" stroke="#4a6cc0" stroke-width=".6" opacity=".45"/><path d="M384.0 41.0L389.7 43.1" stroke="#d88a38" stroke-width=".6" opacity=".45"/><rect x="383.4" y="45.2" width="2.5" height="1.2" fill="#e0e4ea" opacity=".7"/><rect x="385.7" y="29.7" width="1.7" height="1.3" fill="#e6e8ee" opacity=".75"/><path d="M385.9 31.5L390.6 32.9" stroke="#eef0f4" stroke-width="1.9"/><path d="M385.1 32.1L389.8 33.5" stroke="#4a6cc0" stroke-width=".6" opacity=".45"/><path d="M386.7 31.1L391.4 32.5" stroke="#d88a38" stroke-width=".6" opacity=".45"/><path d="M385.9 34.0L391.7 35.6" stroke="#ffffff" stroke-width="1.5"/><path d="M385.1 34.6L390.9 36.2" stroke="#4a6cc0" stroke-width=".6" opacity=".45"/><path d="M386.7 33.6L392.5 35.2" stroke="#d88a38" stroke-width=".6" opacity=".45"/><path d="M385.9 36.1L389.6 37.9" stroke="#e4ecf8" stroke-width="1.7"/><path d="M385.1 36.7L388.8 38.5" stroke="#4a6cc0" stroke-width=".6" opacity=".45"/><path d="M386.7 35.7L390.4 37.5" stroke="#d88a38" stroke-width=".6" opacity=".45"/><path d="M385.9 38.4L391.6 39.6" stroke="#ffffff" stroke-width="1.6"/><path d="M385.1 39.0L390.8 40.2" stroke="#4a6cc0" stroke-width=".6" opacity=".45"/><path d="M386.7 38.0L392.4 39.2" stroke="#d88a38" stroke-width=".6" opacity=".45"/><path d="M385.9 40.5L390.0 42.2" stroke="#ffffff" stroke-width="2.0"/><path d="M385.1 41.1L389.2 42.8" stroke="#4a6cc0" stroke-width=".6" opacity=".45"/><path d="M386.7 40.1L390.8 41.8" stroke="#d88a38" stroke-width=".6" opacity=".45"/><rect x="387.3" y="44.8" width="1.1" height="1.2" fill="#e0e4ea" opacity=".7"/><path d="M388.5 31.5L392.7 33.5" stroke="#e4ecf8" stroke-width="1.9"/><path d="M387.7 32.1L391.9 34.1" stroke="#4a6cc0" stroke-width=".6" opacity=".45"/><path d="M389.3 31.1L393.5 33.1" stroke="#d88a38" stroke-width=".6" opacity=".45"/><path d="M388.5 34.0L393.9 35.8" stroke="#f8f6f2" stroke-width="1.9"/><path d="M387.7 34.6L393.1 36.4" stroke="#4a6cc0" stroke-width=".6" opacity=".45"/><path d="M389.3 33.6L394.7 35.4" stroke="#d88a38" stroke-width=".6" opacity=".45"/><path d="M388.5 36.4L392.2 34.4" stroke="#ffffff" stroke-width="1.5"/><path d="M387.7 37.0L391.4 35.0" stroke="#4a6cc0" stroke-width=".6" opacity=".45"/><path d="M389.3 36.0L393.0 34.0" stroke="#d88a38" stroke-width=".6" opacity=".45"/><path d="M388.5 38.6L392.3 40.4" stroke="#ffffff" stroke-width="1.7"/><path d="M387.7 39.2L391.5 41.0" stroke="#4a6cc0" stroke-width=".6" opacity=".45"/><path d="M389.3 38.2L393.1 40.0" stroke="#d88a38" stroke-width=".6" opacity=".45"/><path d="M388.5 41.1L393.3 43.1" stroke="#eef0f4" stroke-width="1.5"/><path d="M387.7 41.7L392.5 43.7" stroke="#4a6cc0" stroke-width=".6" opacity=".45"/><path d="M389.3 40.7L394.1 42.7" stroke="#d88a38" stroke-width=".6" opacity=".45"/><path d="M391.4 31.5L395.5 33.3" stroke="#fbf1e2" stroke-width="1.6"/><path d="M390.6 32.1L394.7 33.9" stroke="#4a6cc0" stroke-width=".6" opacity=".45"/><path d="M392.2 31.1L396.3 32.9" stroke="#d88a38" stroke-width=".6" opacity=".45"/><path d="M391.4 33.7L395.3 35.0" stroke="#f8f6f2" stroke-width="1.6"/><path d="M390.6 34.3L394.5 35.6" stroke="#4a6cc0" stroke-width=".6" opacity=".45"/><path d="M392.2 33.3L396.1 34.6" stroke="#d88a38" stroke-width=".6" opacity=".45"/><path d="M391.4 36.5L396.8 35.1" stroke="#f8f6f2" stroke-width="1.8"/><path d="M390.6 37.1L396.0 35.7" stroke="#4a6cc0" stroke-width=".6" opacity=".45"/><path d="M392.2 36.1L397.6 34.7" stroke="#d88a38" stroke-width=".6" opacity=".45"/><path d="M391.4 39.3L397.3 37.1" stroke="#fbf1e2" stroke-width="1.5"/><path d="M390.6 39.9L396.5 37.7" stroke="#4a6cc0" stroke-width=".6" opacity=".45"/><path d="M392.2 38.9L398.1 36.7" stroke="#d88a38" stroke-width=".6" opacity=".45"/><path d="M391.4 41.8L396.3 39.6" stroke="#e4ecf8" stroke-width="2.0"/><path d="M390.6 42.4L395.5 40.2" stroke="#4a6cc0" stroke-width=".6" opacity=".45"/><path d="M392.2 41.4L397.1 39.2" stroke="#d88a38" stroke-width=".6" opacity=".45"/><path d="M394.1 34.1L398.4 32.6" stroke="#eef0f4" stroke-width="1.6"/><path d="M393.3 34.7L397.6 33.2" stroke="#4a6cc0" stroke-width=".6" opacity=".45"/><path d="M394.9 33.7L399.2 32.2" stroke="#d88a38" stroke-width=".6" opacity=".45"/><path d="M394.1 36.4L399.5 34.6" stroke="#f8f6f2" stroke-width="1.5"/><path d="M393.3 37.0L398.7 35.2" stroke="#4a6cc0" stroke-width=".6" opacity=".45"/><path d="M394.9 36.0L400.3 34.2" stroke="#d88a38" stroke-width=".6" opacity=".45"/><path d="M394.1 39.1L398.4 37.3" stroke="#ffffff" stroke-width="1.6"/><path d="M393.3 39.7L397.6 37.9" stroke="#4a6cc0" stroke-width=".6" opacity=".45"/><path d="M394.9 38.7L399.2 36.9" stroke="#d88a38" stroke-width=".6" opacity=".45"/><path d="M394.1 41.4L398.5 43.5" stroke="#f8f6f2" stroke-width="1.9"/><path d="M393.3 42.0L397.7 44.1" stroke="#4a6cc0" stroke-width=".6" opacity=".45"/><path d="M394.9 41.0L399.3 43.1" stroke="#d88a38" stroke-width=".6" opacity=".45"/><path d="M397.0 31.5L401.3 33.0" stroke="#f8f6f2" stroke-width="1.6"/><path d="M396.2 32.1L400.5 33.6" stroke="#4a6cc0" stroke-width=".6" opacity=".45"/><path d="M397.8 31.1L402.1 32.6" stroke="#d88a38" stroke-width=".6" opacity=".45"/><path d="M397.0 34.1L401.0 35.5" stroke="#fbf1e2" stroke-width="1.9"/><path d="M396.2 34.7L400.2 36.1" stroke="#4a6cc0" stroke-width=".6" opacity=".45"/><path d="M397.8 33.7L401.8 35.1" stroke="#d88a38" stroke-width=".6" opacity=".45"/><path d="M397.0 36.5L401.7 34.4" stroke="#fbf1e2" stroke-width="1.6"/><path d="M396.2 37.1L400.9 35.0" stroke="#4a6cc0" stroke-width=".6" opacity=".45"/><path d="M397.8 36.1L402.5 34.0" stroke="#d88a38" stroke-width=".6" opacity=".45"/><path d="M397.0 39.0L401.5 37.4" stroke="#e4ecf8" stroke-width="1.6"/><path d="M396.2 39.6L400.7 38.0" stroke="#4a6cc0" stroke-width=".6" opacity=".45"/><path d="M397.8 38.6L402.3 37.0" stroke="#d88a38" stroke-width=".6" opacity=".45"/><path d="M400.1 36.3L405.1 37.5" stroke="#eef0f4" stroke-width="1.5"/><path d="M399.3 36.9L404.3 38.1" stroke="#4a6cc0" stroke-width=".6" opacity=".45"/><path d="M400.9 35.9L405.9 37.1" stroke="#d88a38" stroke-width=".6" opacity=".45"/><path d="M400.1 39.0L405.1 37.4" stroke="#e4ecf8" stroke-width="1.9"/><path d="M399.3 39.6L404.3 38.0" stroke="#4a6cc0" stroke-width=".6" opacity=".45"/><path d="M400.9 38.6L405.9 37.0" stroke="#d88a38" stroke-width=".6" opacity=".45"/><path d="M400.1 41.5L406.0 43.3" stroke="#eef0f4" stroke-width="2.0"/><path d="M399.3 42.1L405.2 43.9" stroke="#4a6cc0" stroke-width=".6" opacity=".45"/><path d="M400.9 41.1L406.8 42.9" stroke="#d88a38" stroke-width=".6" opacity=".45"/><rect x="402.1" y="30.5" width="1.2" height="1.3" fill="#e6e8ee" opacity=".75"/><path d="M403.3 34.4L408.4 35.9" stroke="#eef0f4" stroke-width="2.0"/><path d="M402.5 35.0L407.6 36.5" stroke="#4a6cc0" stroke-width=".6" opacity=".45"/><path d="M404.1 34.0L409.2 35.5" stroke="#d88a38" stroke-width=".6" opacity=".45"/><path d="M403.3 36.9L407.6 35.3" stroke="#f8f6f2" stroke-width="1.7"/><path d="M402.5 37.5L406.8 35.9" stroke="#4a6cc0" stroke-width=".6" opacity=".45"/><path d="M404.1 36.5L408.4 34.9" stroke="#d88a38" stroke-width=".6" opacity=".45"/><path d="M403.3 38.9L407.7 40.5" stroke="#eef0f4" stroke-width="1.6"/><path d="M402.5 39.5L406.9 41.1" stroke="#4a6cc0" stroke-width=".6" opacity=".45"/><path d="M404.1 38.5L408.5 40.1" stroke="#d88a38" stroke-width=".6" opacity=".45"/><path d="M403.3 41.2L409.3 43.1" stroke="#fbf1e2" stroke-width="1.9"/><path d="M402.5 41.8L408.5 43.7" stroke="#4a6cc0" stroke-width=".6" opacity=".45"/><path d="M404.1 40.8L410.1 42.7" stroke="#d88a38" stroke-width=".6" opacity=".45"/><path d="M406.1 31.8L411.7 34.0" stroke="#f8f6f2" stroke-width="1.6"/><path d="M405.3 32.4L410.9 34.6" stroke="#4a6cc0" stroke-width=".6" opacity=".45"/><path d="M406.9 31.4L412.5 33.6" stroke="#d88a38" stroke-width=".6" opacity=".45"/><path d="M406.1 33.9L410.0 35.5" stroke="#f8f6f2" stroke-width="1.9"/><path d="M405.3 34.5L409.2 36.1" stroke="#4a6cc0" stroke-width=".6" opacity=".45"/><path d="M406.9 33.5L410.8 35.1" stroke="#d88a38" stroke-width=".6" opacity=".45"/><path d="M406.1 35.9L409.7 37.3" stroke="#f8f6f2" stroke-width="1.7"/><path d="M405.3 36.5L408.9 37.9" stroke="#4a6cc0" stroke-width=".6" opacity=".45"/><path d="M406.9 35.5L410.5 36.9" stroke="#d88a38" stroke-width=".6" opacity=".45"/><path d="M406.1 38.4L411.5 36.7" stroke="#ffffff" stroke-width="1.9"/><path d="M405.3 39.0L410.7 37.3" stroke="#4a6cc0" stroke-width=".6" opacity=".45"/><path d="M406.9 38.0L412.3 36.3" stroke="#d88a38" stroke-width=".6" opacity=".45"/><path d="M406.1 41.2L410.2 42.5" stroke="#ffffff" stroke-width="1.6"/><path d="M405.3 41.8L409.4 43.1" stroke="#4a6cc0" stroke-width=".6" opacity=".45"/><path d="M406.9 40.8L411.0 42.1" stroke="#d88a38" stroke-width=".6" opacity=".45"/><path d="M408.8 31.9L413.5 30.5" stroke="#f8f6f2" stroke-width="1.9"/><path d="M408.0 32.5L412.7 31.1" stroke="#4a6cc0" stroke-width=".6" opacity=".45"/><path d="M409.6 31.5L414.3 30.1" stroke="#d88a38" stroke-width=".6" opacity=".45"/><path d="M408.8 34.6L413.8 32.4" stroke="#ffffff" stroke-width="1.5"/><path d="M408.0 35.2L413.0 33.0" stroke="#4a6cc0" stroke-width=".6" opacity=".45"/><path d="M409.6 34.2L414.6 32.0" stroke="#d88a38" stroke-width=".6" opacity=".45"/><path d="M408.8 37.1L413.5 38.4" stroke="#ffffff" stroke-width="1.6"/><path d="M408.0 37.7L412.7 39.0" stroke="#4a6cc0" stroke-width=".6" opacity=".45"/><path d="M409.6 36.7L414.3 38.0" stroke="#d88a38" stroke-width=".6" opacity=".45"/><path d="M408.8 39.6L414.6 41.6" stroke="#e4ecf8" stroke-width="1.9"/><path d="M408.0 40.2L413.8 42.2" stroke="#4a6cc0" stroke-width=".6" opacity=".45"/><path d="M409.6 39.2L415.4 41.2" stroke="#d88a38" stroke-width=".6" opacity=".45"/><path d="M411.8 34.7L416.9 36.2" stroke="#ffffff" stroke-width="1.8"/><path d="M411.0 35.3L416.1 36.8" stroke="#4a6cc0" stroke-width=".6" opacity=".45"/><path d="M412.6 34.3L417.7 35.8" stroke="#d88a38" stroke-width=".6" opacity=".45"/><path d="M411.8 36.8L416.8 38.1" stroke="#ffffff" stroke-width="1.7"/><path d="M411.0 37.4L416.0 38.7" stroke="#4a6cc0" stroke-width=".6" opacity=".45"/><path d="M412.6 36.4L417.6 37.7" stroke="#d88a38" stroke-width=".6" opacity=".45"/><path d="M411.8 39.0L415.5 40.4" stroke="#ffffff" stroke-width="1.6"/><path d="M411.0 39.6L414.7 41.0" stroke="#4a6cc0" stroke-width=".6" opacity=".45"/><path d="M412.6 38.6L416.3 40.0" stroke="#d88a38" stroke-width=".6" opacity=".45"/><rect x="413.5" y="31.2" width="1.4" height="1.3" fill="#e6e8ee" opacity=".75"/><path d="M415.2 32.3L419.7 33.5" stroke="#f8f6f2" stroke-width="1.9"/><path d="M414.4 32.9L418.9 34.1" stroke="#4a6cc0" stroke-width=".6" opacity=".45"/><path d="M416.0 31.9L420.5 33.1" stroke="#d88a38" stroke-width=".6" opacity=".45"/><path d="M415.2 34.8L420.3 33.0" stroke="#eef0f4" stroke-width="2.0"/><path d="M414.4 35.4L419.5 33.6" stroke="#4a6cc0" stroke-width=".6" opacity=".45"/><path d="M416.0 34.4L421.1 32.6" stroke="#d88a38" stroke-width=".6" opacity=".45"/><path d="M415.2 37.5L418.8 39.1" stroke="#ffffff" stroke-width="1.7"/><path d="M414.4 38.1L418.0 39.7" stroke="#4a6cc0" stroke-width=".6" opacity=".45"/><path d="M416.0 37.1L419.6 38.7" stroke="#d88a38" stroke-width=".6" opacity=".45"/><path d="M415.2 39.9L420.3 41.2" stroke="#fbf1e2" stroke-width="1.6"/><path d="M414.4 40.5L419.5 41.8" stroke="#4a6cc0" stroke-width=".6" opacity=".45"/><path d="M416.0 39.5L421.1 40.8" stroke="#d88a38" stroke-width=".6" opacity=".45"/><path d="M415.2 42.5L419.0 44.3" stroke="#fbf1e2" stroke-width="1.8"/><path d="M414.4 43.1L418.2 44.9" stroke="#4a6cc0" stroke-width=".6" opacity=".45"/><path d="M416.0 42.1L419.8 43.9" stroke="#d88a38" stroke-width=".6" opacity=".45"/><rect x="418.0" y="44.4" width="2.5" height="1.2" fill="#e0e4ea" opacity=".7"/><path d="M417.9 34.9L421.9 36.4" stroke="#ffffff" stroke-width="1.9"/><path d="M417.1 35.5L421.1 37.0" stroke="#4a6cc0" stroke-width=".6" opacity=".45"/><path d="M418.7 34.5L422.7 36.0" stroke="#d88a38" stroke-width=".6" opacity=".45"/><path d="M417.9 37.0L422.5 38.3" stroke="#fbf1e2" stroke-width="1.9"/><path d="M417.1 37.6L421.7 38.9" stroke="#4a6cc0" stroke-width=".6" opacity=".45"/><path d="M418.7 36.6L423.3 37.9" stroke="#d88a38" stroke-width=".6" opacity=".45"/><path d="M417.9 39.4L421.7 40.8" stroke="#f8f6f2" stroke-width="1.6"/><path d="M417.1 40.0L420.9 41.4" stroke="#4a6cc0" stroke-width=".6" opacity=".45"/><path d="M418.7 39.0L422.5 40.4" stroke="#d88a38" stroke-width=".6" opacity=".45"/><path d="M417.9 41.4L421.7 43.5" stroke="#fbf1e2" stroke-width="1.9"/><path d="M417.1 42.0L420.9 44.1" stroke="#4a6cc0" stroke-width=".6" opacity=".45"/><path d="M418.7 41.0L422.5 43.1" stroke="#d88a38" stroke-width=".6" opacity=".45"/><rect x="418.1" y="45.3" width="1.3" height="1.2" fill="#e0e4ea" opacity=".7"/><path d="M420.6 35.0L424.2 33.6" stroke="#f8f6f2" stroke-width="1.8"/><path d="M419.8 35.6L423.4 34.2" stroke="#4a6cc0" stroke-width=".6" opacity=".45"/><path d="M421.4 34.6L425.0 33.2" stroke="#d88a38" stroke-width=".6" opacity=".45"/><path d="M420.6 37.6L425.7 39.8" stroke="#e4ecf8" stroke-width="1.8"/><path d="M419.8 38.2L424.9 40.4" stroke="#4a6cc0" stroke-width=".6" opacity=".45"/><path d="M421.4 37.2L426.5 39.4" stroke="#d88a38" stroke-width=".6" opacity=".45"/><path d="M420.6 40.2L426.5 41.8" stroke="#f8f6f2" stroke-width="1.6"/><path d="M419.8 40.8L425.7 42.4" stroke="#4a6cc0" stroke-width=".6" opacity=".45"/><path d="M421.4 39.8L427.3 41.4" stroke="#d88a38" stroke-width=".6" opacity=".45"/><path d="M420.6 42.2L425.4 43.5" stroke="#e4ecf8" stroke-width="1.9"/><path d="M419.8 42.8L424.6 44.1" stroke="#4a6cc0" stroke-width=".6" opacity=".45"/><path d="M421.4 41.8L426.2 43.1" stroke="#d88a38" stroke-width=".6" opacity=".45"/><path d="M423.9 32.7L428.2 31.0" stroke="#ffffff" stroke-width="1.5"/><path d="M423.1 33.3L427.4 31.6" stroke="#4a6cc0" stroke-width=".6" opacity=".45"/><path d="M424.7 32.3L429.0 30.6" stroke="#d88a38" stroke-width=".6" opacity=".45"/><path d="M423.9 35.2L428.2 36.5" stroke="#fbf1e2" stroke-width="1.8"/><path d="M423.1 35.8L427.4 37.1" stroke="#4a6cc0" stroke-width=".6" opacity=".45"/><path d="M424.7 34.8L429.0 36.1" stroke="#d88a38" stroke-width=".6" opacity=".45"/><path d="M423.9 37.4L429.6 38.7" stroke="#e4ecf8" stroke-width="2.0"/><path d="M423.1 38.0L428.8 39.3" stroke="#4a6cc0" stroke-width=".6" opacity=".45"/><path d="M424.7 37.0L430.4 38.3" stroke="#d88a38" stroke-width=".6" opacity=".45"/><path d="M423.9 39.6L429.1 37.8" stroke="#f8f6f2" stroke-width="2.0"/><path d="M423.1 40.2L428.3 38.4" stroke="#4a6cc0" stroke-width=".6" opacity=".45"/><path d="M424.7 39.2L429.9 37.4" stroke="#d88a38" stroke-width=".6" opacity=".45"/><path d="M423.9 42.2L429.7 43.4" stroke="#fbf1e2" stroke-width="2.0"/><path d="M423.1 42.8L428.9 44.0" stroke="#4a6cc0" stroke-width=".6" opacity=".45"/><path d="M424.7 41.8L430.5 43.0" stroke="#d88a38" stroke-width=".6" opacity=".45"/><path d="M426.8 32.8L430.7 30.8" stroke="#f8f6f2" stroke-width="1.6"/><path d="M426.0 33.4L429.9 31.4" stroke="#4a6cc0" stroke-width=".6" opacity=".45"/><path d="M427.6 32.4L431.5 30.4" stroke="#d88a38" stroke-width=".6" opacity=".45"/><path d="M426.8 35.5L432.1 37.5" stroke="#f8f6f2" stroke-width="1.7"/><path d="M426.0 36.1L431.3 38.1" stroke="#4a6cc0" stroke-width=".6" opacity=".45"/><path d="M427.6 35.1L432.9 37.1" stroke="#d88a38" stroke-width=".6" opacity=".45"/><path d="M426.8 37.6L431.8 36.2" stroke="#f8f6f2" stroke-width="1.7"/><path d="M426.0 38.2L431.0 36.8" stroke="#4a6cc0" stroke-width=".6" opacity=".45"/><path d="M427.6 37.2L432.6 35.8" stroke="#d88a38" stroke-width=".6" opacity=".45"/><path d="M426.8 40.0L431.6 41.6" stroke="#ffffff" stroke-width="1.9"/><path d="M426.0 40.6L430.8 42.2" stroke="#4a6cc0" stroke-width=".6" opacity=".45"/><path d="M427.6 39.6L432.4 41.2" stroke="#d88a38" stroke-width=".6" opacity=".45"/><path d="M426.8 42.7L431.6 40.7" stroke="#fbf1e2" stroke-width="1.7"/><path d="M426.0 43.3L430.8 41.3" stroke="#4a6cc0" stroke-width=".6" opacity=".45"/><path d="M427.6 42.3L432.4 40.3" stroke="#d88a38" stroke-width=".6" opacity=".45"/><rect x="428.9" y="44.9" width="1.2" height="1.2" fill="#e0e4ea" opacity=".7"/><rect x="428.1" y="32.3" width="1.5" height="1.3" fill="#e6e8ee" opacity=".75"/><path d="M429.6 33.0L434.7 34.5" stroke="#f8f6f2" stroke-width="2.0"/><path d="M428.8 33.6L433.9 35.1" stroke="#4a6cc0" stroke-width=".6" opacity=".45"/><path d="M430.4 32.6L435.5 34.1" stroke="#d88a38" stroke-width=".6" opacity=".45"/><path d="M429.6 35.4L434.4 37.1" stroke="#fbf1e2" stroke-width="2.0"/><path d="M428.8 36.0L433.6 37.7" stroke="#4a6cc0" stroke-width=".6" opacity=".45"/><path d="M430.4 35.0L435.2 36.7" stroke="#d88a38" stroke-width=".6" opacity=".45"/><path d="M429.6 42.8L433.2 44.4" stroke="#f8f6f2" stroke-width="1.6"/><path d="M428.8 43.4L432.4 45.0" stroke="#4a6cc0" stroke-width=".6" opacity=".45"/><path d="M430.4 42.4L434.0 44.0" stroke="#d88a38" stroke-width=".6" opacity=".45"/><rect x="431.0" y="45.9" width="2.1" height="1.2" fill="#e0e4ea" opacity=".7"/><path d="M433.0 33.1L437.1 35.3" stroke="#eef0f4" stroke-width="1.5"/><path d="M432.2 33.7L436.3 35.9" stroke="#4a6cc0" stroke-width=".6" opacity=".45"/><path d="M433.8 32.7L437.9 34.9" stroke="#d88a38" stroke-width=".6" opacity=".45"/><path d="M433.0 38.0L437.8 40.1" stroke="#e4ecf8" stroke-width="1.5"/><path d="M432.2 38.6L437.0 40.7" stroke="#4a6cc0" stroke-width=".6" opacity=".45"/><path d="M433.8 37.6L438.6 39.7" stroke="#d88a38" stroke-width=".6" opacity=".45"/><path d="M433.0 40.5L436.9 42.0" stroke="#e4ecf8" stroke-width="1.9"/><path d="M432.2 41.1L436.1 42.6" stroke="#4a6cc0" stroke-width=".6" opacity=".45"/><path d="M433.8 40.1L437.7 41.6" stroke="#d88a38" stroke-width=".6" opacity=".45"/><path d="M433.0 42.6L437.3 44.2" stroke="#eef0f4" stroke-width="1.8"/><path d="M432.2 43.2L436.5 44.8" stroke="#4a6cc0" stroke-width=".6" opacity=".45"/><path d="M433.8 42.2L438.1 43.8" stroke="#d88a38" stroke-width=".6" opacity=".45"/><path d="M435.8 33.3L441.7 34.9" stroke="#fbf1e2" stroke-width="1.9"/><path d="M435.0 33.9L440.9 35.5" stroke="#4a6cc0" stroke-width=".6" opacity=".45"/><path d="M436.6 32.9L442.5 34.5" stroke="#d88a38" stroke-width=".6" opacity=".45"/><path d="M435.8 35.8L440.2 38.0" stroke="#ffffff" stroke-width="1.6"/><path d="M435.0 36.4L439.4 38.6" stroke="#4a6cc0" stroke-width=".6" opacity=".45"/><path d="M436.6 35.4L441.0 37.6" stroke="#d88a38" stroke-width=".6" opacity=".45"/><path d="M435.8 38.6L439.7 40.8" stroke="#f8f6f2" stroke-width="1.8"/><path d="M435.0 39.2L438.9 41.4" stroke="#4a6cc0" stroke-width=".6" opacity=".45"/><path d="M436.6 38.2L440.5 40.4" stroke="#d88a38" stroke-width=".6" opacity=".45"/><path d="M435.8 40.8L439.8 42.8" stroke="#fbf1e2" stroke-width="1.8"/><path d="M435.0 41.4L439.0 43.4" stroke="#4a6cc0" stroke-width=".6" opacity=".45"/><path d="M436.6 40.4L440.6 42.4" stroke="#d88a38" stroke-width=".6" opacity=".45"/><path d="M438.6 35.9L443.7 38.0" stroke="#ffffff" stroke-width="1.6"/><path d="M437.8 36.5L442.9 38.6" stroke="#4a6cc0" stroke-width=".6" opacity=".45"/><path d="M439.4 35.5L444.5 37.6" stroke="#d88a38" stroke-width=".6" opacity=".45"/><path d="M438.6 38.1L443.6 36.6" stroke="#f8f6f2" stroke-width="1.5"/><path d="M437.8 38.7L442.8 37.2" stroke="#4a6cc0" stroke-width=".6" opacity=".45"/><path d="M439.4 37.7L444.4 36.2" stroke="#d88a38" stroke-width=".6" opacity=".45"/><path d="M438.6 40.7L443.3 42.9" stroke="#f8f6f2" stroke-width="1.5"/><path d="M437.8 41.3L442.5 43.5" stroke="#4a6cc0" stroke-width=".6" opacity=".45"/><path d="M439.4 40.3L444.1 42.5" stroke="#d88a38" stroke-width=".6" opacity=".45"/><path d="M438.6 43.1L442.3 45.2" stroke="#eef0f4" stroke-width="1.8"/><path d="M437.8 43.7L441.5 45.8" stroke="#4a6cc0" stroke-width=".6" opacity=".45"/><path d="M439.4 42.7L443.1 44.8" stroke="#d88a38" stroke-width=".6" opacity=".45"/><path d="M441.4 33.6L445.2 35.5" stroke="#fbf1e2" stroke-width="1.6"/><path d="M440.6 34.2L444.4 36.1" stroke="#4a6cc0" stroke-width=".6" opacity=".45"/><path d="M442.2 33.2L446.0 35.1" stroke="#d88a38" stroke-width=".6" opacity=".45"/><path d="M441.4 36.3L445.7 37.8" stroke="#ffffff" stroke-width="1.9"/><path d="M440.6 36.9L444.9 38.4" stroke="#4a6cc0" stroke-width=".6" opacity=".45"/><path d="M442.2 35.9L446.5 37.4" stroke="#d88a38" stroke-width=".6" opacity=".45"/><path d="M441.4 39.0L447.0 40.9" stroke="#eef0f4" stroke-width="1.8"/><path d="M440.6 39.6L446.2 41.5" stroke="#4a6cc0" stroke-width=".6" opacity=".45"/><path d="M442.2 38.6L447.8 40.5" stroke="#d88a38" stroke-width=".6" opacity=".45"/><path d="M441.4 41.6L446.4 39.7" stroke="#fbf1e2" stroke-width="1.6"/><path d="M440.6 42.2L445.6 40.3" stroke="#4a6cc0" stroke-width=".6" opacity=".45"/><path d="M442.2 41.2L447.2 39.3" stroke="#d88a38" stroke-width=".6" opacity=".45"/></svg>
<svg width="825" height="562" shape-rendering="crispEdges"><path fill="#000" d="M208 121h1v1h-1zM207 122h1v1h-1zM209 122h2v1h-2zM206 123h1v1h-1zM211 123h2v1h-2zM205 124h1v1h-1zM213 124h2v1h-2zM303 124h3v1h-3zM205 125h1v1h-1zM215 125h1v1h-1zM297 125h6v1h-6zM305 125h1v1h-1zM204 126h1v1h-1zM216 126h2v1h-2zM291 126h6v1h-6zM306 126h1v1h-1zM203 127h1v1h-1zM218 127h2v1h-2zM286 127h5v1h-5zM306 127h1v1h-1zM202 128h1v1h-1zM220 128h1v1h-1zM280 128h6v1h-6zM306 128h1v1h-1zM201 129h1v1h-1zM221 129h2v1h-2zM275 129h5v1h-5zM307 129h1v1h-1zM200 130h1v1h-1zM223 130h2v1h-2zM269 130h6v1h-6zM307 130h1v1h-1zM200 131h1v1h-1zM225 131h2v1h-2zM263 131h6v1h-6zM308 131h1v1h-1zM199 132h1v1h-1zM227 132h1v1h-1zM258 132h5v1h-5zM308 132h1v1h-1zM198 133h1v1h-1zM228 133h2v1h-2zM252 133h6v1h-6zM308 133h1v1h-1zM197 134h1v1h-1zM230 134h2v1h-2zM247 134h5v1h-5zM309 134h1v1h-1zM196 135h1v1h-1zM232 135h2v1h-2zM241 135h6v1h-6zM309 135h1v1h-1zM195 136h1v1h-1zM234 136h7v1h-7zM309 136h1v1h-1zM195 137h1v1h-1zM230 137h7v1h-7zM310 137h1v1h-1zM194 138h1v1h-1zM224 138h6v1h-6zM237 138h2v1h-2zM310 138h1v1h-1zM193 139h1v1h-1zM219 139h5v1h-5zM239 139h2v1h-2zM310 139h1v1h-1zM192 140h1v1h-1zM213 140h6v1h-6zM241 140h1v1h-1zM311 140h1v1h-1zM191 141h1v1h-1zM207 141h6v1h-6zM242 141h2v1h-2zM311 141h1v1h-1zM190 142h1v1h-1zM202 142h5v1h-5zM244 142h2v1h-2zM312 142h1v1h-1zM190 143h1v1h-1zM196 143h6v1h-6zM246 143h1v1h-1zM312 143h1v1h-1zM189 144h1v1h-1zM191 144h5v1h-5zM247 144h2v1h-2zM312 144h1v1h-1zM185 145h6v1h-6zM249 145h2v1h-2zM313 145h1v1h-1zM179 146h6v1h-6zM187 146h1v1h-1zM251 146h2v1h-2zM313 146h1v1h-1zM174 147h5v1h-5zM186 147h1v1h-1zM253 147h1v1h-1zM313 147h1v1h-1zM168 148h6v1h-6zM185 148h1v1h-1zM213 148h1v1h-1zM254 148h2v1h-2zM314 148h1v1h-1zM163 149h5v1h-5zM185 149h1v1h-1zM212 149h1v1h-1zM214 149h2v1h-2zM256 149h2v1h-2zM289 149h3v1h-3zM314 149h1v1h-1zM157 150h6v1h-6zM184 150h1v1h-1zM211 150h1v1h-1zM216 150h2v1h-2zM258 150h2v1h-2zM283 150h6v1h-6zM291 150h1v1h-1zM314 150h1v1h-1zM151 151h6v1h-6zM183 151h1v1h-1zM211 151h1v1h-1zM218 151h2v1h-2zM260 151h1v1h-1zM277 151h6v1h-6zM292 151h1v1h-1zM315 151h1v1h-1zM146 152h5v1h-5zM182 152h1v1h-1zM210 152h1v1h-1zM220 152h1v1h-1zM261 152h2v1h-2zM271 152h6v1h-6zM292 152h1v1h-1zM315 152h1v1h-1zM140 153h6v1h-6zM181 153h1v1h-1zM209 153h1v1h-1zM221 153h2v1h-2zM263 153h2v1h-2zM266 153h5v1h-5zM292 153h1v1h-1zM316 153h1v1h-1zM135 154h5v1h-5zM180 154h1v1h-1zM208 154h1v1h-1zM223 154h2v1h-2zM260 154h7v1h-7zM293 154h1v1h-1zM316 154h1v1h-1zM129 155h6v1h-6zM180 155h1v1h-1zM207 155h1v1h-1zM225 155h2v1h-2zM254 155h6v1h-6zM267 155h1v1h-1zM293 155h1v1h-1zM316 155h1v1h-1zM123 156h6v1h-6zM179 156h1v1h-1zM206 156h1v1h-1zM227 156h1v1h-1zM248 156h6v1h-6zM268 156h2v1h-2zM294 156h1v1h-1zM317 156h1v1h-1zM120 157h3v1h-3zM178 157h1v1h-1zM206 157h1v1h-1zM228 157h2v1h-2zM242 157h6v1h-6zM270 157h2v1h-2zM294 157h1v1h-1zM317 157h1v1h-1zM120 158h1v1h-1zM177 158h1v1h-1zM205 158h1v1h-1zM230 158h2v1h-2zM237 158h5v1h-5zM272 158h1v1h-1zM294 158h1v1h-1zM317 158h1v1h-1zM120 159h1v1h-1zM176 159h1v1h-1zM204 159h1v1h-1zM231 159h6v1h-6zM273 159h2v1h-2zM295 159h1v1h-1zM318 159h1v1h-1zM120 160h1v1h-1zM175 160h1v1h-1zM203 160h1v1h-1zM225 160h6v1h-6zM233 160h2v1h-2zM275 160h2v1h-2zM295 160h1v1h-1zM318 160h1v1h-1zM120 161h1v1h-1zM175 161h1v1h-1zM202 161h1v1h-1zM219 161h6v1h-6zM235 161h2v1h-2zM277 161h2v1h-2zM295 161h1v1h-1zM318 161h1v1h-1zM120 162h1v1h-1zM174 162h1v1h-1zM201 162h1v1h-1zM214 162h5v1h-5zM237 162h2v1h-2zM279 162h1v1h-1zM296 162h1v1h-1zM319 162h1v1h-1zM120 163h1v1h-1zM173 163h1v1h-1zM201 163h1v1h-1zM208 163h6v1h-6zM239 163h1v1h-1zM280 163h2v1h-2zM296 163h1v1h-1zM319 163h1v1h-1zM120 164h1v1h-1zM172 164h1v1h-1zM200 164h1v1h-1zM202 164h6v1h-6zM240 164h2v1h-2zM282 164h2v1h-2zM296 164h1v1h-1zM320 164h1v1h-1zM120 165h1v1h-1zM171 165h1v1h-1zM196 165h6v1h-6zM242 165h2v1h-2zM284 165h2v1h-2zM297 165h1v1h-1zM320 165h1v1h-1zM120 166h1v1h-1zM170 166h1v1h-1zM191 166h5v1h-5zM198 166h1v1h-1zM244 166h2v1h-2zM286 166h1v1h-1zM297 166h1v1h-1zM320 166h1v1h-1zM120 167h1v1h-1zM169 167h1v1h-1zM185 167h6v1h-6zM197 167h1v1h-1zM246 167h1v1h-1zM287 167h2v1h-2zM298 167h1v1h-1zM321 167h1v1h-1zM120 168h1v1h-1zM169 168h1v1h-1zM179 168h6v1h-6zM196 168h1v1h-1zM247 168h2v1h-2zM289 168h2v1h-2zM298 168h1v1h-1zM321 168h1v1h-1zM120 169h1v1h-1zM168 169h1v1h-1zM173 169h6v1h-6zM196 169h1v1h-1zM249 169h2v1h-2zM291 169h2v1h-2zM298 169h1v1h-1zM321 169h1v1h-1zM120 170h1v1h-1zM167 170h6v1h-6zM195 170h1v1h-1zM251 170h2v1h-2zM293 170h1v1h-1zM299 170h1v1h-1zM322 170h1v1h-1zM120 171h1v1h-1zM162 171h5v1h-5zM194 171h1v1h-1zM253 171h1v1h-1zM294 171h2v1h-2zM299 171h1v1h-1zM322 171h1v1h-1zM120 172h1v1h-1zM156 172h6v1h-6zM165 172h1v1h-1zM193 172h1v1h-1zM254 172h2v1h-2zM296 172h2v1h-2zM299 172h1v1h-1zM323 172h1v1h-1zM120 173h1v1h-1zM150 173h6v1h-6zM164 173h1v1h-1zM192 173h1v1h-1zM256 173h2v1h-2zM275 173h3v1h-3zM298 173h1v1h-1zM300 173h1v1h-1zM323 173h1v1h-1zM120 174h1v1h-1zM144 174h6v1h-6zM164 174h1v1h-1zM191 174h1v1h-1zM258 174h1v1h-1zM269 174h6v1h-6zM277 174h1v1h-1zM299 174h2v1h-2zM323 174h1v1h-1zM120 175h1v1h-1zM141 175h3v1h-3zM163 175h1v1h-1zM191 175h1v1h-1zM259 175h2v1h-2zM263 175h6v1h-6zM278 175h1v1h-1zM300 175h3v1h-3zM324 175h1v1h-1zM120 176h1v1h-1zM141 176h1v1h-1zM162 176h1v1h-1zM190 176h1v1h-1zM218 176h1v1h-1zM258 176h5v1h-5zM278 176h1v1h-1zM301 176h1v1h-1zM303 176h2v1h-2zM324 176h1v1h-1zM120 177h1v1h-1zM141 177h1v1h-1zM161 177h1v1h-1zM189 177h1v1h-1zM217 177h1v1h-1zM219 177h2v1h-2zM252 177h6v1h-6zM263 177h2v1h-2zM278 177h1v1h-1zM301 177h1v1h-1zM305 177h1v1h-1zM324 177h1v1h-1zM120 178h1v1h-1zM141 178h1v1h-1zM160 178h1v1h-1zM188 178h1v1h-1zM216 178h1v1h-1zM221 178h2v1h-2zM246 178h6v1h-6zM265 178h1v1h-1zM279 178h1v1h-1zM302 178h1v1h-1zM306 178h2v1h-2zM325 178h1v1h-1zM120 179h1v1h-1zM141 179h1v1h-1zM159 179h1v1h-1zM187 179h1v1h-1zM215 179h1v1h-1zM223 179h2v1h-2zM240 179h6v1h-6zM266 179h2v1h-2zM279 179h1v1h-1zM302 179h1v1h-1zM308 179h2v1h-2zM325 179h1v1h-1zM120 180h1v1h-1zM141 180h1v1h-1zM159 180h1v1h-1zM186 180h1v1h-1zM215 180h1v1h-1zM225 180h1v1h-1zM235 180h5v1h-5zM268 180h2v1h-2zM280 180h1v1h-1zM302 180h1v1h-1zM310 180h2v1h-2zM325 180h1v1h-1zM120 181h1v1h-1zM141 181h1v1h-1zM158 181h1v1h-1zM186 181h1v1h-1zM214 181h1v1h-1zM226 181h2v1h-2zM229 181h6v1h-6zM270 181h2v1h-2zM280 181h1v1h-1zM303 181h1v1h-1zM312 181h1v1h-1zM326 181h1v1h-1zM120 182h1v1h-1zM141 182h1v1h-1zM157 182h1v1h-1zM185 182h1v1h-1zM213 182h1v1h-1zM223 182h7v1h-7zM272 182h1v1h-1zM280 182h1v1h-1zM303 182h1v1h-1zM313 182h2v1h-2zM326 182h1v1h-1zM120 183h1v1h-1zM141 183h1v1h-1zM156 183h1v1h-1zM184 183h1v1h-1zM212 183h1v1h-1zM218 183h5v1h-5zM230 183h2v1h-2zM273 183h2v1h-2zM281 183h1v1h-1zM303 183h1v1h-1zM315 183h2v1h-2zM327 183h1v1h-1zM120 184h1v1h-1zM141 184h1v1h-1zM155 184h1v1h-1zM183 184h1v1h-1zM211 184h7v1h-7zM232 184h1v1h-1zM275 184h2v1h-2zM281 184h1v1h-1zM304 184h1v1h-1zM317 184h2v1h-2zM327 184h1v1h-1zM120 185h1v1h-1zM141 185h1v1h-1zM154 185h1v1h-1zM182 185h1v1h-1zM206 185h6v1h-6zM233 185h2v1h-2zM277 185h2v1h-2zM281 185h1v1h-1zM304 185h1v1h-1zM319 185h1v1h-1zM327 185h1v1h-1zM120 186h1v1h-1zM141 186h1v1h-1zM154 186h1v1h-1zM181 186h1v1h-1zM201 186h5v1h-5zM210 186h1v1h-1zM235 186h2v1h-2zM279 186h1v1h-1zM282 186h1v1h-1zM304 186h1v1h-1zM320 186h2v1h-2zM328 186h1v1h-1zM120 187h1v1h-1zM141 187h1v1h-1zM153 187h1v1h-1zM181 187h1v1h-1zM195 187h6v1h-6zM209 187h1v1h-1zM237 187h2v1h-2zM280 187h3v1h-3zM305 187h1v1h-1zM322 187h2v1h-2zM328 187h1v1h-1zM120 188h1v1h-1zM141 188h1v1h-1zM152 188h1v1h-1zM180 188h1v1h-1zM189 188h6v1h-6zM208 188h1v1h-1zM239 188h1v1h-1zM282 188h2v1h-2zM305 188h1v1h-1zM324 188h1v1h-1zM328 188h1v1h-1zM120 189h1v1h-1zM141 189h1v1h-1zM151 189h1v1h-1zM179 189h1v1h-1zM183 189h6v1h-6zM207 189h1v1h-1zM240 189h2v1h-2zM283 189h3v1h-3zM306 189h1v1h-1zM325 189h2v1h-2zM329 189h1v1h-1zM120 190h1v1h-1zM141 190h1v1h-1zM150 190h1v1h-1zM178 190h5v1h-5zM206 190h1v1h-1zM242 190h2v1h-2zM283 190h1v1h-1zM286 190h1v1h-1zM306 190h1v1h-1zM327 190h3v1h-3zM120 191h1v1h-1zM141 191h1v1h-1zM149 191h1v1h-1zM172 191h6v1h-6zM205 191h1v1h-1zM244 191h1v1h-1zM284 191h1v1h-1zM287 191h2v1h-2zM306 191h1v1h-1zM329 191h2v1h-2zM120 192h1v1h-1zM141 192h1v1h-1zM149 192h1v1h-1zM166 192h6v1h-6zM176 192h1v1h-1zM205 192h1v1h-1zM245 192h2v1h-2zM284 192h1v1h-1zM289 192h2v1h-2zM307 192h1v1h-1zM330 192h2v1h-2zM120 193h1v1h-1zM141 193h1v1h-1zM148 193h1v1h-1zM163 193h3v1h-3zM176 193h1v1h-1zM204 193h1v1h-1zM247 193h2v1h-2zM284 193h1v1h-1zM291 193h1v1h-1zM307 193h1v1h-1zM330 193h1v1h-1zM332 193h2v1h-2zM120 194h1v1h-1zM141 194h1v1h-1zM147 194h1v1h-1zM163 194h1v1h-1zM175 194h1v1h-1zM203 194h1v1h-1zM249 194h2v1h-2zM285 194h1v1h-1zM292 194h2v1h-2zM307 194h1v1h-1zM331 194h1v1h-1zM334 194h2v1h-2zM120 195h1v1h-1zM141 195h1v1h-1zM146 195h1v1h-1zM163 195h1v1h-1zM174 195h1v1h-1zM202 195h1v1h-1zM251 195h1v1h-1zM285 195h1v1h-1zM294 195h2v1h-2zM308 195h1v1h-1zM331 195h1v1h-1zM336 195h2v1h-2zM120 196h1v1h-1zM141 196h1v1h-1zM145 196h1v1h-1zM163 196h1v1h-1zM173 196h1v1h-1zM201 196h1v1h-1zM252 196h2v1h-2zM285 196h1v1h-1zM296 196h2v1h-2zM308 196h1v1h-1zM331 196h1v1h-1zM338 196h1v1h-1zM120 197h1v1h-1zM141 197h1v1h-1zM144 197h1v1h-1zM163 197h1v1h-1zM172 197h1v1h-1zM200 197h1v1h-1zM254 197h2v1h-2zM261 197h3v1h-3zM286 197h1v1h-1zM298 197h1v1h-1zM308 197h1v1h-1zM332 197h1v1h-1zM339 197h2v1h-2zM120 198h1v1h-1zM141 198h1v1h-1zM144 198h1v1h-1zM163 198h1v1h-1zM171 198h1v1h-1zM200 198h1v1h-1zM255 198h6v1h-6zM263 198h1v1h-1zM286 198h1v1h-1zM299 198h2v1h-2zM309 198h1v1h-1zM332 198h1v1h-1zM341 198h2v1h-2zM120 199h1v1h-1zM141 199h1v1h-1zM143 199h1v1h-1zM163 199h1v1h-1zM171 199h1v1h-1zM199 199h1v1h-1zM249 199h6v1h-6zM258 199h1v1h-1zM264 199h1v1h-1zM286 199h1v1h-1zM301 199h2v1h-2zM309 199h1v1h-1zM332 199h1v1h-1zM343 199h2v1h-2zM120 200h1v1h-1zM141 200h2v1h-2zM163 200h1v1h-1zM170 200h1v1h-1zM198 200h1v1h-1zM244 200h5v1h-5zM259 200h2v1h-2zM264 200h1v1h-1zM287 200h1v1h-1zM303 200h2v1h-2zM310 200h1v1h-1zM333 200h1v1h-1zM345 200h1v1h-1zM120 201h1v1h-1zM141 201h1v1h-1zM163 201h1v1h-1zM169 201h1v1h-1zM197 201h1v1h-1zM238 201h6v1h-6zM261 201h2v1h-2zM264 201h1v1h-1zM287 201h1v1h-1zM305 201h1v1h-1zM310 201h1v1h-1zM333 201h1v1h-1zM346 201h2v1h-2zM120 202h1v1h-1zM140 202h2v1h-2zM163 202h1v1h-1zM168 202h1v1h-1zM196 202h1v1h-1zM232 202h6v1h-6zM263 202h3v1h-3zM288 202h1v1h-1zM306 202h2v1h-2zM310 202h1v1h-1zM333 202h1v1h-1zM348 202h2v1h-2zM120 203h1v1h-1zM139 203h1v1h-1zM141 203h1v1h-1zM163 203h1v1h-1zM167 203h1v1h-1zM195 203h1v1h-1zM227 203h5v1h-5zM265 203h1v1h-1zM288 203h1v1h-1zM308 203h2v1h-2zM311 203h1v1h-1zM334 203h1v1h-1zM350 203h1v1h-1zM120 204h1v1h-1zM139 204h1v1h-1zM141 204h1v1h-1zM163 204h1v1h-1zM166 204h1v1h-1zM195 204h1v1h-1zM221 204h6v1h-6zM266 204h2v1h-2zM288 204h1v1h-1zM310 204h2v1h-2zM334 204h1v1h-1zM351 204h2v1h-2zM120 205h1v1h-1zM138 205h1v1h-1zM141 205h1v1h-1zM163 205h1v1h-1zM166 205h1v1h-1zM194 205h1v1h-1zM216 205h5v1h-5zM222 205h1v1h-1zM224 205h2v1h-2zM266 205h1v1h-1zM268 205h2v1h-2zM289 205h1v1h-1zM311 205h2v1h-2zM335 205h1v1h-1zM353 205h2v1h-2zM120 206h1v1h-1zM137 206h1v1h-1zM141 206h1v1h-1zM163 206h1v1h-1zM165 206h1v1h-1zM193 206h1v1h-1zM210 206h6v1h-6zM221 206h1v1h-1zM226 206h2v1h-2zM266 206h1v1h-1zM270 206h2v1h-2zM289 206h1v1h-1zM312 206h3v1h-3zM335 206h1v1h-1zM355 206h2v1h-2zM120 207h1v1h-1zM136 207h1v1h-1zM141 207h1v1h-1zM163 207h2v1h-2zM192 207h1v1h-1zM204 207h6v1h-6zM220 207h1v1h-1zM228 207h2v1h-2zM267 207h1v1h-1zM272 207h1v1h-1zM289 207h1v1h-1zM312 207h1v1h-1zM315 207h2v1h-2zM335 207h1v1h-1zM357 207h1v1h-1zM120 208h1v1h-1zM135 208h1v1h-1zM141 208h1v1h-1zM163 208h1v1h-1zM191 208h1v1h-1zM199 208h5v1h-5zM220 208h1v1h-1zM230 208h1v1h-1zM267 208h1v1h-1zM273 208h2v1h-2zM290 208h1v1h-1zM312 208h1v1h-1zM317 208h1v1h-1zM336 208h1v1h-1zM357 208h1v1h-1zM120 209h1v1h-1zM134 209h1v1h-1zM141 209h1v1h-1zM162 209h2v1h-2zM190 209h1v1h-1zM193 209h6v1h-6zM219 209h1v1h-1zM231 209h2v1h-2zM267 209h1v1h-1zM275 209h2v1h-2zM290 209h1v1h-1zM313 209h1v1h-1zM318 209h2v1h-2zM336 209h1v1h-1zM356 209h1v1h-1zM120 210h1v1h-1zM133 210h1v1h-1zM141 210h1v1h-1zM161 210h1v1h-1zM163 210h1v1h-1zM187 210h6v1h-6zM218 210h1v1h-1zM233 210h2v1h-2zM268 210h1v1h-1zM277 210h2v1h-2zM290 210h1v1h-1zM313 210h1v1h-1zM320 210h2v1h-2zM336 210h1v1h-1zM356 210h1v1h-1zM120 211h1v1h-1zM133 211h1v1h-1zM141 211h1v1h-1zM161 211h1v1h-1zM163 211h1v1h-1zM184 211h3v1h-3zM189 211h1v1h-1zM217 211h1v1h-1zM235 211h1v1h-1zM268 211h1v1h-1zM279 211h1v1h-1zM291 211h1v1h-1zM314 211h1v1h-1zM322 211h2v1h-2zM337 211h1v1h-1zM356 211h1v1h-1zM120 212h1v1h-1zM132 212h1v1h-1zM141 212h1v1h-1zM160 212h1v1h-1zM163 212h1v1h-1zM184 212h1v1h-1zM188 212h1v1h-1zM216 212h1v1h-1zM236 212h2v1h-2zM269 212h1v1h-1zM280 212h2v1h-2zM291 212h1v1h-1zM314 212h1v1h-1zM324 212h1v1h-1zM337 212h1v1h-1zM355 212h1v1h-1zM120 213h1v1h-1zM131 213h1v1h-1zM141 213h1v1h-1zM159 213h1v1h-1zM163 213h1v1h-1zM184 213h1v1h-1zM187 213h1v1h-1zM215 213h1v1h-1zM238 213h2v1h-2zM269 213h1v1h-1zM282 213h2v1h-2zM292 213h1v1h-1zM314 213h1v1h-1zM325 213h2v1h-2zM337 213h1v1h-1zM355 213h1v1h-1zM120 214h1v1h-1zM130 214h1v1h-1zM141 214h1v1h-1zM158 214h1v1h-1zM163 214h1v1h-1zM184 214h1v1h-1zM186 214h1v1h-1zM215 214h1v1h-1zM240 214h2v1h-2zM269 214h1v1h-1zM284 214h1v1h-1zM292 214h1v1h-1zM315 214h1v1h-1zM327 214h2v1h-2zM338 214h1v1h-1zM354 214h1v1h-1zM120 215h1v1h-1zM129 215h1v1h-1zM141 215h1v1h-1zM157 215h1v1h-1zM163 215h1v1h-1zM184 215h2v1h-2zM214 215h1v1h-1zM242 215h1v1h-1zM270 215h1v1h-1zM285 215h2v1h-2zM292 215h1v1h-1zM315 215h1v1h-1zM329 215h2v1h-2zM338 215h1v1h-1zM354 215h1v1h-1zM120 216h1v1h-1zM128 216h1v1h-1zM141 216h1v1h-1zM156 216h1v1h-1zM163 216h1v1h-1zM184 216h1v1h-1zM213 216h1v1h-1zM243 216h2v1h-2zM270 216h1v1h-1zM287 216h2v1h-2zM293 216h1v1h-1zM315 216h1v1h-1zM331 216h1v1h-1zM339 216h1v1h-1zM354 216h1v1h-1zM120 217h1v1h-1zM128 217h1v1h-1zM141 217h1v1h-1zM156 217h1v1h-1zM163 217h1v1h-1zM184 217h1v1h-1zM212 217h1v1h-1zM245 217h2v1h-2zM270 217h1v1h-1zM289 217h2v1h-2zM293 217h1v1h-1zM316 217h1v1h-1zM331 217h1v1h-1zM339 217h1v1h-1zM353 217h1v1h-1zM120 218h1v1h-1zM127 218h1v1h-1zM141 218h1v1h-1zM155 218h1v1h-1zM163 218h1v1h-1zM183 218h2v1h-2zM211 218h1v1h-1zM247 218h1v1h-1zM271 218h1v1h-1zM291 218h1v1h-1zM293 218h1v1h-1zM316 218h1v1h-1zM330 218h1v1h-1zM339 218h1v1h-1zM353 218h1v1h-1zM120 219h1v1h-1zM126 219h1v1h-1zM141 219h1v1h-1zM154 219h1v1h-1zM163 219h1v1h-1zM182 219h1v1h-1zM184 219h1v1h-1zM210 219h1v1h-1zM248 219h2v1h-2zM271 219h1v1h-1zM292 219h3v1h-3zM316 219h1v1h-1zM330 219h1v1h-1zM340 219h1v1h-1zM353 219h1v1h-1zM120 220h1v1h-1zM125 220h1v1h-1zM141 220h1v1h-1zM153 220h1v1h-1zM163 220h1v1h-1zM181 220h1v1h-1zM184 220h1v1h-1zM209 220h1v1h-1zM250 220h2v1h-2zM271 220h1v1h-1zM294 220h2v1h-2zM317 220h1v1h-1zM330 220h1v1h-1zM340 220h1v1h-1zM352 220h1v1h-1zM120 221h1v1h-1zM124 221h1v1h-1zM141 221h1v1h-1zM152 221h1v1h-1zM163 221h1v1h-1zM180 221h1v1h-1zM184 221h1v1h-1zM209 221h1v1h-1zM247 221h3v1h-3zM252 221h2v1h-2zM272 221h1v1h-1zM294 221h1v1h-1zM296 221h2v1h-2zM317 221h1v1h-1zM329 221h1v1h-1zM340 221h1v1h-1zM352 221h1v1h-1zM120 222h1v1h-1zM123 222h1v1h-1zM141 222h1v1h-1zM151 222h1v1h-1zM163 222h1v1h-1zM179 222h1v1h-1zM184 222h1v1h-1zM208 222h1v1h-1zM241 222h6v1h-6zM249 222h1v1h-1zM254 222h1v1h-1zM272 222h1v1h-1zM295 222h1v1h-1zM298 222h1v1h-1zM317 222h1v1h-1zM329 222h1v1h-1zM341 222h1v1h-1zM352 222h1v1h-1zM120 223h1v1h-1zM123 223h1v1h-1zM141 223h1v1h-1zM151 223h1v1h-1zM163 223h1v1h-1zM179 223h1v1h-1zM184 223h1v1h-1zM207 223h1v1h-1zM236 223h5v1h-5zM250 223h1v1h-1zM255 223h2v1h-2zM273 223h1v1h-1zM295 223h1v1h-1zM299 223h2v1h-2zM318 223h1v1h-1zM328 223h1v1h-1zM341 223h1v1h-1zM351 223h1v1h-1zM120 224h1v1h-1zM122 224h1v1h-1zM141 224h1v1h-1zM150 224h1v1h-1zM163 224h1v1h-1zM178 224h1v1h-1zM184 224h1v1h-1zM206 224h1v1h-1zM231 224h5v1h-5zM250 224h1v1h-1zM257 224h2v1h-2zM273 224h1v1h-1zM296 224h1v1h-1zM301 224h2v1h-2zM318 224h1v1h-1zM328 224h1v1h-1zM341 224h1v1h-1zM351 224h1v1h-1zM120 225h2v1h-2zM141 225h1v1h-1zM149 225h1v1h-1zM163 225h1v1h-1zM177 225h1v1h-1zM184 225h1v1h-1zM205 225h1v1h-1zM225 225h6v1h-6zM250 225h1v1h-1zM259 225h1v1h-1zM273 225h1v1h-1zM296 225h1v1h-1zM303 225h2v1h-2zM319 225h1v1h-1zM328 225h1v1h-1zM342 225h1v1h-1zM350 225h1v1h-1zM120 226h1v1h-1zM141 226h1v1h-1zM148 226h1v1h-1zM163 226h1v1h-1zM176 226h1v1h-1zM184 226h1v1h-1zM204 226h1v1h-1zM220 226h5v1h-5zM251 226h1v1h-1zM260 226h2v1h-2zM274 226h1v1h-1zM296 226h1v1h-1zM305 226h1v1h-1zM319 226h1v1h-1zM327 226h1v1h-1zM342 226h1v1h-1zM350 226h1v1h-1zM119 227h2v1h-2zM141 227h1v1h-1zM147 227h1v1h-1zM163 227h1v1h-1zM175 227h1v1h-1zM184 227h1v1h-1zM204 227h1v1h-1zM215 227h5v1h-5zM251 227h1v1h-1zM262 227h2v1h-2zM274 227h1v1h-1zM297 227h1v1h-1zM305 227h1v1h-1zM319 227h1v1h-1zM327 227h1v1h-1zM343 227h1v1h-1zM350 227h1v1h-1zM118 228h1v1h-1zM120 228h1v1h-1zM141 228h1v1h-1zM146 228h1v1h-1zM163 228h1v1h-1zM174 228h1v1h-1zM184 228h1v1h-1zM203 228h1v1h-1zM209 228h6v1h-6zM251 228h1v1h-1zM264 228h2v1h-2zM274 228h1v1h-1zM297 228h1v1h-1zM304 228h1v1h-1zM320 228h1v1h-1zM327 228h1v1h-1zM343 228h1v1h-1zM349 228h1v1h-1zM118 229h1v1h-1zM120 229h1v1h-1zM141 229h1v1h-1zM146 229h1v1h-1zM163 229h1v1h-1zM174 229h1v1h-1zM184 229h1v1h-1zM202 229h1v1h-1zM206 229h3v1h-3zM252 229h1v1h-1zM266 229h1v1h-1zM275 229h1v1h-1zM297 229h1v1h-1zM304 229h1v1h-1zM320 229h1v1h-1zM326 229h1v1h-1zM343 229h1v1h-1zM349 229h1v1h-1zM117 230h1v1h-1zM120 230h1v1h-1zM141 230h1v1h-1zM145 230h1v1h-1zM163 230h1v1h-1zM173 230h1v1h-1zM184 230h1v1h-1zM201 230h1v1h-1zM206 230h1v1h-1zM252 230h1v1h-1zM267 230h2v1h-2zM275 230h1v1h-1zM298 230h1v1h-1zM304 230h1v1h-1zM320 230h1v1h-1zM326 230h1v1h-1zM344 230h1v1h-1zM349 230h1v1h-1zM116 231h1v1h-1zM120 231h1v1h-1zM141 231h1v1h-1zM144 231h1v1h-1zM163 231h1v1h-1zM172 231h1v1h-1zM184 231h1v1h-1zM200 231h1v1h-1zM206 231h1v1h-1zM228 231h1v1h-1zM253 231h1v1h-1zM269 231h2v1h-2zM275 231h1v1h-1zM298 231h1v1h-1zM303 231h1v1h-1zM321 231h1v1h-1zM326 231h1v1h-1zM344 231h1v1h-1zM348 231h1v1h-1zM115 232h1v1h-1zM120 232h1v1h-1zM141 232h1v1h-1zM143 232h1v1h-1zM163 232h1v1h-1zM171 232h1v1h-1zM184 232h1v1h-1zM199 232h1v1h-1zM206 232h1v1h-1zM227 232h1v1h-1zM229 232h2v1h-2zM253 232h1v1h-1zM271 232h1v1h-1zM276 232h1v1h-1zM298 232h1v1h-1zM303 232h1v1h-1zM321 232h1v1h-1zM325 232h1v1h-1zM344 232h1v1h-1zM348 232h1v1h-1zM114 233h1v1h-1zM120 233h1v1h-1zM141 233h2v1h-2zM163 233h1v1h-1zM170 233h1v1h-1zM184 233h1v1h-1zM198 233h1v1h-1zM206 233h1v1h-1zM226 233h1v1h-1zM231 233h2v1h-2zM253 233h1v1h-1zM272 233h2v1h-2zM276 233h1v1h-1zM299 233h1v1h-1zM302 233h1v1h-1zM321 233h1v1h-1zM325 233h1v1h-1zM345 233h1v1h-1zM348 233h1v1h-1zM113 234h1v1h-1zM120 234h1v1h-1zM141 234h1v1h-1zM163 234h1v1h-1zM169 234h1v1h-1zM184 234h1v1h-1zM198 234h1v1h-1zM206 234h1v1h-1zM225 234h1v1h-1zM233 234h2v1h-2zM254 234h1v1h-1zM274 234h2v1h-2zM277 234h1v1h-1zM299 234h1v1h-1zM302 234h1v1h-1zM322 234h1v1h-1zM324 234h1v1h-1zM345 234h1v1h-1zM347 234h1v1h-1zM113 235h1v1h-1zM120 235h1v1h-1zM141 235h1v1h-1zM163 235h1v1h-1zM169 235h1v1h-1zM184 235h1v1h-1zM197 235h1v1h-1zM206 235h1v1h-1zM225 235h1v1h-1zM235 235h1v1h-1zM254 235h1v1h-1zM276 235h2v1h-2zM299 235h1v1h-1zM302 235h1v1h-1zM322 235h1v1h-1zM324 235h1v1h-1zM345 235h1v1h-1zM347 235h1v1h-1zM112 236h1v1h-1zM120 236h1v1h-1zM140 236h2v1h-2zM163 236h1v1h-1zM168 236h1v1h-1zM184 236h1v1h-1zM196 236h1v1h-1zM206 236h1v1h-1zM224 236h1v1h-1zM236 236h2v1h-2zM254 236h1v1h-1zM277 236h2v1h-2zM300 236h2v1h-2zM323 236h2v1h-2zM346 236h1v1h-1zM111 237h1v1h-1zM120 237h1v1h-1zM139 237h1v1h-1zM141 237h1v1h-1zM163 237h1v1h-1zM167 237h1v1h-1zM184 237h1v1h-1zM195 237h1v1h-1zM206 237h1v1h-1zM223 237h1v1h-1zM238 237h2v1h-2zM255 237h1v1h-1zM278 237h1v1h-1zM300 237h2v1h-2zM323 237h1v1h-1zM346 237h1v1h-1zM110 238h1v1h-1zM120 238h1v1h-1zM138 238h1v1h-1zM141 238h1v1h-1zM163 238h1v1h-1zM166 238h1v1h-1zM184 238h1v1h-1zM194 238h1v1h-1zM206 238h1v1h-1zM222 238h1v1h-1zM240 238h1v1h-1zM255 238h1v1h-1zM277 238h2v1h-2zM301 238h1v1h-1zM323 238h1v1h-1zM346 238h2v1h-2zM109 239h1v1h-1zM120 239h1v1h-1zM137 239h1v1h-1zM141 239h1v1h-1zM163 239h1v1h-1zM165 239h1v1h-1zM184 239h1v1h-1zM193 239h1v1h-1zM206 239h1v1h-1zM221 239h1v1h-1zM241 239h2v1h-2zM255 239h1v1h-1zM277 239h2v1h-2zM300 239h2v1h-2zM323 239h2v1h-2zM345 239h1v1h-1zM347 239h1v1h-1zM108 240h1v1h-1zM120 240h1v1h-1zM136 240h1v1h-1zM141 240h1v1h-1zM163 240h2v1h-2zM184 240h1v1h-1zM192 240h1v1h-1zM206 240h1v1h-1zM220 240h1v1h-1zM243 240h2v1h-2zM256 240h1v1h-1zM277 240h1v1h-1zM279 240h1v1h-1zM300 240h2v1h-2zM322 240h1v1h-1zM324 240h1v1h-1zM345 240h1v1h-1zM347 240h1v1h-1zM108 241h1v1h-1zM120 241h1v1h-1zM136 241h1v1h-1zM141 241h1v1h-1zM163 241h2v1h-2zM184 241h1v1h-1zM192 241h1v1h-1zM206 241h1v1h-1zM220 241h1v1h-1zM245 241h2v1h-2zM256 241h1v1h-1zM276 241h1v1h-1zM279 241h1v1h-1zM299 241h1v1h-1zM302 241h1v1h-1zM322 241h1v1h-1zM324 241h1v1h-1zM345 241h1v1h-1zM348 241h1v1h-1zM107 242h1v1h-1zM120 242h1v1h-1zM135 242h1v1h-1zM141 242h1v1h-1zM163 242h1v1h-1zM184 242h1v1h-1zM191 242h1v1h-1zM206 242h1v1h-1zM219 242h1v1h-1zM247 242h1v1h-1zM256 242h1v1h-1zM276 242h1v1h-1zM280 242h1v1h-1zM299 242h1v1h-1zM302 242h1v1h-1zM322 242h1v1h-1zM325 242h1v1h-1zM344 242h1v1h-1zM348 242h1v1h-1zM106 243h1v1h-1zM120 243h1v1h-1zM134 243h1v1h-1zM141 243h1v1h-1zM162 243h2v1h-2zM184 243h1v1h-1zM190 243h1v1h-1zM206 243h1v1h-1zM218 243h1v1h-1zM248 243h2v1h-2zM257 243h1v1h-1zM275 243h1v1h-1zM280 243h1v1h-1zM299 243h1v1h-1zM302 243h1v1h-1zM321 243h1v1h-1zM325 243h1v1h-1zM344 243h1v1h-1zM348 243h1v1h-1zM105 244h1v1h-1zM120 244h1v1h-1zM133 244h1v1h-1zM141 244h1v1h-1zM161 244h1v1h-1zM163 244h1v1h-1zM184 244h1v1h-1zM189 244h1v1h-1zM206 244h1v1h-1zM217 244h1v1h-1zM250 244h2v1h-2zM257 244h1v1h-1zM275 244h1v1h-1zM280 244h1v1h-1zM298 244h1v1h-1zM303 244h1v1h-1zM321 244h1v1h-1zM325 244h1v1h-1zM344 244h1v1h-1zM349 244h1v1h-1zM104 245h1v1h-1zM120 245h1v1h-1zM132 245h1v1h-1zM141 245h1v1h-1zM160 245h1v1h-1zM163 245h1v1h-1zM184 245h1v1h-1zM188 245h1v1h-1zM206 245h1v1h-1zM216 245h1v1h-1zM252 245h1v1h-1zM258 245h1v1h-1zM275 245h1v1h-1zM281 245h1v1h-1zM298 245h1v1h-1zM303 245h1v1h-1zM320 245h1v1h-1zM326 245h1v1h-1zM343 245h1v1h-1zM349 245h1v1h-1zM103 246h1v1h-1zM120 246h1v1h-1zM131 246h1v1h-1zM141 246h1v1h-1zM159 246h1v1h-1zM163 246h1v1h-1zM184 246h1v1h-1zM187 246h1v1h-1zM206 246h1v1h-1zM215 246h1v1h-1zM231 246h5v1h-5zM252 246h1v1h-1zM258 246h1v1h-1zM274 246h1v1h-1zM281 246h1v1h-1zM298 246h1v1h-1zM303 246h1v1h-1zM320 246h1v1h-1zM326 246h1v1h-1zM343 246h1v1h-1zM349 246h1v1h-1zM103 247h1v1h-1zM120 247h1v1h-1zM131 247h1v1h-1zM141 247h1v1h-1zM159 247h1v1h-1zM163 247h1v1h-1zM184 247h1v1h-1zM187 247h1v1h-1zM206 247h1v1h-1zM215 247h1v1h-1zM227 247h4v1h-4zM235 247h1v1h-1zM251 247h1v1h-1zM258 247h1v1h-1zM274 247h1v1h-1zM281 247h1v1h-1zM297 247h1v1h-1zM304 247h1v1h-1zM320 247h1v1h-1zM327 247h1v1h-1zM342 247h1v1h-1zM350 247h1v1h-1zM102 248h1v1h-1zM120 248h1v1h-1zM130 248h1v1h-1zM141 248h1v1h-1zM158 248h1v1h-1zM163 248h1v1h-1zM184 248h1v1h-1zM186 248h1v1h-1zM206 248h1v1h-1zM214 248h1v1h-1zM227 248h1v1h-1zM236 248h1v1h-1zM251 248h1v1h-1zM259 248h1v1h-1zM274 248h1v1h-1zM282 248h1v1h-1zM297 248h1v1h-1zM304 248h1v1h-1zM319 248h1v1h-1zM327 248h1v1h-1zM342 248h1v1h-1zM350 248h1v1h-1zM101 249h1v1h-1zM120 249h1v1h-1zM129 249h1v1h-1zM141 249h1v1h-1zM157 249h1v1h-1zM163 249h1v1h-1zM184 249h2v1h-2zM206 249h1v1h-1zM213 249h1v1h-1zM227 249h1v1h-1zM236 249h1v1h-1zM251 249h1v1h-1zM259 249h1v1h-1zM273 249h1v1h-1zM282 249h1v1h-1zM297 249h1v1h-1zM305 249h1v1h-1zM319 249h1v1h-1zM327 249h1v1h-1zM342 249h1v1h-1zM351 249h1v1h-1zM72 250h1v1h-1zM100 250h1v1h-1zM120 250h1v1h-1zM128 250h1v1h-1zM141 250h1v1h-1zM156 250h1v1h-1zM163 250h1v1h-1zM184 250h1v1h-1zM206 250h1v1h-1zM212 250h1v1h-1zM227 250h1v1h-1zM236 250h1v1h-1zM250 250h1v1h-1zM259 250h1v1h-1zM273 250h1v1h-1zM282 250h1v1h-1zM296 250h1v1h-1zM305 250h1v1h-1zM319 250h1v1h-1zM328 250h1v1h-1zM341 250h1v1h-1zM351 250h1v1h-1zM73 251h1v1h-1zM101 251h1v1h-1zM120 251h1v1h-1zM129 251h1v1h-1zM141 251h1v1h-1zM157 251h1v1h-1zM163 251h1v1h-1zM184 251h2v1h-2zM206 251h1v1h-1zM213 251h1v1h-1zM227 251h1v1h-1zM237 251h1v1h-1zM250 251h1v1h-1zM260 251h1v1h-1zM273 251h1v1h-1zM283 251h1v1h-1zM296 251h1v1h-1zM305 251h1v1h-1zM318 251h1v1h-1zM328 251h1v1h-1zM341 251h1v1h-1zM351 251h1v1h-1zM74 252h1v1h-1zM102 252h1v1h-1zM120 252h1v1h-1zM130 252h1v1h-1zM141 252h1v1h-1zM158 252h1v1h-1zM163 252h1v1h-1zM184 252h1v1h-1zM186 252h1v1h-1zM206 252h1v1h-1zM214 252h1v1h-1zM237 252h1v1h-1zM249 252h1v1h-1zM260 252h1v1h-1zM272 252h1v1h-1zM283 252h1v1h-1zM295 252h1v1h-1zM306 252h1v1h-1zM318 252h1v1h-1zM328 252h1v1h-1zM341 252h1v1h-1zM352 252h1v1h-1zM75 253h1v1h-1zM103 253h1v1h-1zM120 253h1v1h-1zM131 253h1v1h-1zM141 253h1v1h-1zM159 253h1v1h-1zM163 253h1v1h-1zM184 253h1v1h-1zM187 253h1v1h-1zM206 253h1v1h-1zM215 253h1v1h-1zM238 253h1v1h-1zM249 253h1v1h-1zM260 253h1v1h-1zM272 253h1v1h-1zM284 253h1v1h-1zM295 253h1v1h-1zM306 253h1v1h-1zM318 253h1v1h-1zM329 253h1v1h-1zM340 253h1v1h-1zM352 253h1v1h-1zM75 254h1v1h-1zM103 254h1v1h-1zM120 254h1v1h-1zM131 254h1v1h-1zM141 254h1v1h-1zM159 254h1v1h-1zM163 254h1v1h-1zM184 254h1v1h-1zM187 254h1v1h-1zM206 254h1v1h-1zM215 254h1v1h-1zM238 254h1v1h-1zM249 254h1v1h-1zM261 254h1v1h-1zM272 254h1v1h-1zM284 254h1v1h-1zM295 254h1v1h-1zM306 254h1v1h-1zM317 254h1v1h-1zM329 254h1v1h-1zM340 254h1v1h-1zM352 254h1v1h-1zM76 255h1v1h-1zM104 255h1v1h-1zM120 255h1v1h-1zM132 255h1v1h-1zM141 255h1v1h-1zM160 255h1v1h-1zM163 255h1v1h-1zM184 255h1v1h-1zM188 255h1v1h-1zM206 255h1v1h-1zM216 255h1v1h-1zM238 255h1v1h-1zM248 255h1v1h-1zM261 255h1v1h-1zM271 255h1v1h-1zM284 255h1v1h-1zM294 255h1v1h-1zM307 255h1v1h-1zM317 255h1v1h-1zM329 255h1v1h-1zM340 255h1v1h-1zM353 255h1v1h-1zM77 256h1v1h-1zM105 256h1v1h-1zM120 256h1v1h-1zM133 256h1v1h-1zM141 256h1v1h-1zM161 256h1v1h-1zM163 256h1v1h-1zM184 256h1v1h-1zM189 256h1v1h-1zM206 256h1v1h-1zM217 256h1v1h-1zM239 256h1v1h-1zM248 256h1v1h-1zM261 256h1v1h-1zM271 256h1v1h-1zM285 256h1v1h-1zM294 256h1v1h-1zM307 256h1v1h-1zM316 256h1v1h-1zM330 256h1v1h-1zM339 256h1v1h-1zM353 256h1v1h-1zM78 257h1v1h-1zM106 257h1v1h-1zM120 257h1v1h-1zM134 257h1v1h-1zM141 257h1v1h-1zM162 257h2v1h-2zM184 257h1v1h-1zM190 257h1v1h-1zM206 257h1v1h-1zM218 257h1v1h-1zM239 257h1v1h-1zM248 257h1v1h-1zM262 257h1v1h-1zM270 257h1v1h-1zM285 257h1v1h-1zM294 257h1v1h-1zM307 257h1v1h-1zM316 257h1v1h-1zM330 257h1v1h-1zM339 257h1v1h-1zM353 257h1v1h-1zM79 258h1v1h-1zM107 258h1v1h-1zM120 258h1v1h-1zM135 258h1v1h-1zM141 258h1v1h-1zM163 258h1v1h-1zM184 258h1v1h-1zM191 258h1v1h-1zM206 258h1v1h-1zM219 258h1v1h-1zM237 258h2v1h-2zM247 258h1v1h-1zM262 258h1v1h-1zM270 258h1v1h-1zM285 258h1v1h-1zM293 258h1v1h-1zM308 258h1v1h-1zM316 258h1v1h-1zM331 258h1v1h-1zM338 258h1v1h-1zM354 258h1v1h-1zM80 259h1v1h-1zM108 259h1v1h-1zM120 259h1v1h-1zM136 259h1v1h-1zM141 259h1v1h-1zM163 259h2v1h-2zM184 259h1v1h-1zM192 259h1v1h-1zM206 259h1v1h-1zM220 259h1v1h-1zM235 259h2v1h-2zM247 259h1v1h-1zM263 259h1v1h-1zM270 259h1v1h-1zM286 259h1v1h-1zM293 259h1v1h-1zM308 259h1v1h-1zM315 259h1v1h-1zM331 259h1v1h-1zM338 259h1v1h-1zM354 259h1v1h-1zM80 260h1v1h-1zM108 260h1v1h-1zM120 260h1v1h-1zM136 260h1v1h-1zM141 260h1v1h-1zM163 260h2v1h-2zM184 260h1v1h-1zM193 260h1v1h-1zM206 260h1v1h-1zM221 260h1v1h-1zM233 260h2v1h-2zM247 260h1v1h-1zM263 260h1v1h-1zM269 260h1v1h-1zM286 260h1v1h-1zM293 260h1v1h-1zM309 260h1v1h-1zM315 260h1v1h-1zM331 260h1v1h-1zM338 260h1v1h-1zM355 260h1v1h-1zM81 261h1v1h-1zM109 261h1v1h-1zM120 261h1v1h-1zM137 261h1v1h-1zM141 261h1v1h-1zM163 261h1v1h-1zM165 261h1v1h-1zM184 261h1v1h-1zM193 261h1v1h-1zM206 261h1v1h-1zM222 261h1v1h-1zM232 261h1v1h-1zM246 261h1v1h-1zM263 261h1v1h-1zM269 261h1v1h-1zM286 261h1v1h-1zM292 261h1v1h-1zM309 261h1v1h-1zM315 261h1v1h-1zM332 261h1v1h-1zM337 261h1v1h-1zM355 261h1v1h-1zM82 262h1v1h-1zM110 262h1v1h-1zM120 262h1v1h-1zM138 262h1v1h-1zM141 262h1v1h-1zM163 262h1v1h-1zM166 262h1v1h-1zM184 262h1v1h-1zM194 262h1v1h-1zM206 262h1v1h-1zM222 262h1v1h-1zM230 262h2v1h-2zM246 262h1v1h-1zM264 262h1v1h-1zM269 262h1v1h-1zM287 262h1v1h-1zM292 262h1v1h-1zM309 262h1v1h-1zM314 262h1v1h-1zM332 262h1v1h-1zM337 262h1v1h-1zM355 262h1v1h-1zM83 263h1v1h-1zM111 263h1v1h-1zM120 263h1v1h-1zM139 263h1v1h-1zM141 263h1v1h-1zM163 263h1v1h-1zM167 263h1v1h-1zM184 263h1v1h-1zM195 263h1v1h-1zM206 263h1v1h-1zM223 263h1v1h-1zM228 263h2v1h-2zM245 263h1v1h-1zM264 263h1v1h-1zM268 263h1v1h-1zM287 263h1v1h-1zM291 263h1v1h-1zM310 263h1v1h-1zM314 263h1v1h-1zM332 263h1v1h-1zM337 263h1v1h-1zM356 263h1v1h-1zM84 264h1v1h-1zM112 264h1v1h-1zM120 264h1v1h-1zM140 264h2v1h-2zM163 264h1v1h-1zM168 264h1v1h-1zM184 264h1v1h-1zM196 264h1v1h-1zM206 264h1v1h-1zM224 264h1v1h-1zM226 264h2v1h-2zM245 264h1v1h-1zM264 264h1v1h-1zM268 264h1v1h-1zM288 264h1v1h-1zM291 264h1v1h-1zM310 264h1v1h-1zM314 264h1v1h-1zM333 264h1v1h-1zM336 264h1v1h-1zM356 264h1v1h-1zM85 265h1v1h-1zM113 265h1v1h-1zM120 265h1v1h-1zM141 265h1v1h-1zM163 265h1v1h-1zM169 265h1v1h-1zM184 265h1v1h-1zM197 265h1v1h-1zM206 265h1v1h-1zM225 265h1v1h-1zM245 265h1v1h-1zM265 265h1v1h-1zM268 265h1v1h-1zM288 265h1v1h-1zM291 265h1v1h-1zM310 265h1v1h-1zM313 265h1v1h-1zM333 265h1v1h-1zM336 265h1v1h-1zM356 265h1v1h-1zM85 266h1v1h-1zM114 266h1v1h-1zM120 266h1v1h-1zM141 266h2v1h-2zM163 266h1v1h-1zM169 266h1v1h-1zM184 266h1v1h-1zM198 266h1v1h-1zM206 266h1v1h-1zM244 266h1v1h-1zM265 266h1v1h-1zM267 266h1v1h-1zM288 266h1v1h-1zM290 266h1v1h-1zM311 266h1v1h-1zM313 266h1v1h-1zM333 266h1v1h-1zM336 266h1v1h-1zM357 266h1v1h-1zM86 267h1v1h-1zM114 267h1v1h-1zM120 267h1v1h-1zM141 267h2v1h-2zM163 267h1v1h-1zM170 267h1v1h-1zM184 267h1v1h-1zM199 267h1v1h-1zM206 267h1v1h-1zM244 267h1v1h-1zM263 267h2v1h-2zM267 267h1v1h-1zM289 267h2v1h-2zM311 267h2v1h-2zM334 267h2v1h-2zM357 267h1v1h-1zM87 268h1v1h-1zM115 268h1v1h-1zM120 268h1v1h-1zM141 268h1v1h-1zM143 268h1v1h-1zM163 268h1v1h-1zM171 268h1v1h-1zM184 268h1v1h-1zM199 268h1v1h-1zM206 268h1v1h-1zM244 268h1v1h-1zM261 268h2v1h-2zM267 268h1v1h-1zM289 268h2v1h-2zM311 268h2v1h-2zM334 268h2v1h-2zM358 268h1v1h-1zM88 269h1v1h-1zM116 269h1v1h-1zM120 269h1v1h-1zM141 269h1v1h-1zM144 269h1v1h-1zM163 269h1v1h-1zM172 269h1v1h-1zM184 269h1v1h-1zM200 269h1v1h-1zM206 269h3v1h-3zM243 269h1v1h-1zM259 269h2v1h-2zM266 269h1v1h-1zM289 269h1v1h-1zM312 269h1v1h-1zM334 269h2v1h-2zM358 269h1v1h-1zM89 270h1v1h-1zM117 270h1v1h-1zM120 270h1v1h-1zM141 270h1v1h-1zM145 270h1v1h-1zM163 270h1v1h-1zM173 270h1v1h-1zM184 270h1v1h-1zM201 270h1v1h-1zM209 270h6v1h-6zM243 270h1v1h-1zM258 270h1v1h-1zM266 270h1v1h-1zM289 270h2v1h-2zM311 270h2v1h-2zM334 270h2v1h-2zM358 270h1v1h-1zM90 271h1v1h-1zM118 271h1v1h-1zM120 271h1v1h-1zM141 271h1v1h-1zM146 271h1v1h-1zM163 271h1v1h-1zM174 271h1v1h-1zM184 271h1v1h-1zM202 271h1v1h-1zM215 271h6v1h-6zM242 271h1v1h-1zM256 271h2v1h-2zM265 271h1v1h-1zM288 271h1v1h-1zM290 271h1v1h-1zM311 271h1v1h-1zM313 271h1v1h-1zM334 271h2v1h-2zM359 271h1v1h-1zM91 272h1v1h-1zM119 272h2v1h-2zM141 272h1v1h-1zM147 272h1v1h-1zM163 272h1v1h-1zM175 272h1v1h-1zM184 272h1v1h-1zM203 272h1v1h-1zM221 272h6v1h-6zM242 272h1v1h-1zM254 272h2v1h-2zM265 272h1v1h-1zM288 272h1v1h-1zM291 272h1v1h-1zM311 272h1v1h-1zM313 272h1v1h-1zM333 272h1v1h-1zM336 272h1v1h-1zM359 272h1v1h-1zM91 273h1v1h-1zM120 273h1v1h-1zM141 273h1v1h-1zM147 273h1v1h-1zM163 273h1v1h-1zM175 273h1v1h-1zM184 273h1v1h-1zM204 273h1v1h-1zM227 273h6v1h-6zM242 273h1v1h-1zM253 273h1v1h-1zM265 273h1v1h-1zM288 273h1v1h-1zM291 273h1v1h-1zM310 273h1v1h-1zM313 273h1v1h-1zM333 273h1v1h-1zM336 273h1v1h-1zM359 273h1v1h-1zM92 274h1v1h-1zM120 274h1v1h-1zM141 274h1v1h-1zM148 274h1v1h-1zM163 274h1v1h-1zM176 274h1v1h-1zM184 274h1v1h-1zM205 274h1v1h-1zM233 274h6v1h-6zM241 274h1v1h-1zM251 274h2v1h-2zM264 274h1v1h-1zM287 274h1v1h-1zM291 274h1v1h-1zM310 274h1v1h-1zM314 274h1v1h-1zM333 274h1v1h-1zM336 274h1v1h-1zM360 274h1v1h-1zM93 275h1v1h-1zM120 275h2v1h-2zM141 275h1v1h-1zM149 275h1v1h-1zM163 275h1v1h-1zM177 275h1v1h-1zM184 275h1v1h-1zM205 275h1v1h-1zM239 275h3v1h-3zM249 275h2v1h-2zM264 275h1v1h-1zM287 275h1v1h-1zM292 275h1v1h-1zM310 275h1v1h-1zM314 275h1v1h-1zM332 275h1v1h-1zM337 275h1v1h-1zM360 275h1v1h-1zM94 276h1v1h-1zM120 276h1v1h-1zM122 276h1v1h-1zM141 276h1v1h-1zM150 276h1v1h-1zM163 276h1v1h-1zM178 276h1v1h-1zM184 276h1v1h-1zM206 276h1v1h-1zM247 276h2v1h-2zM264 276h1v1h-1zM287 276h1v1h-1zM292 276h1v1h-1zM309 276h1v1h-1zM314 276h1v1h-1zM332 276h1v1h-1zM337 276h1v1h-1zM360 276h1v1h-1zM95 277h1v1h-1zM120 277h1v1h-1zM123 277h1v1h-1zM141 277h1v1h-1zM151 277h1v1h-1zM163 277h1v1h-1zM179 277h1v1h-1zM184 277h1v1h-1zM207 277h1v1h-1zM246 277h1v1h-1zM263 277h1v1h-1zM286 277h1v1h-1zM290 277h2v1h-2zM309 277h1v1h-1zM315 277h1v1h-1zM332 277h1v1h-1zM337 277h1v1h-1zM361 277h1v1h-1zM96 278h1v1h-1zM120 278h1v1h-1zM124 278h1v1h-1zM141 278h1v1h-1zM152 278h1v1h-1zM163 278h1v1h-1zM180 278h1v1h-1zM184 278h1v1h-1zM208 278h1v1h-1zM244 278h2v1h-2zM263 278h1v1h-1zM286 278h1v1h-1zM288 278h2v1h-2zM308 278h1v1h-1zM315 278h1v1h-1zM331 278h1v1h-1zM338 278h1v1h-1zM361 278h1v1h-1zM96 279h1v1h-1zM120 279h1v1h-1zM125 279h1v1h-1zM141 279h1v1h-1zM153 279h1v1h-1zM163 279h1v1h-1zM180 279h1v1h-1zM184 279h1v1h-1zM209 279h1v1h-1zM242 279h2v1h-2zM263 279h1v1h-1zM286 279h2v1h-2zM308 279h1v1h-1zM315 279h1v1h-1zM331 279h1v1h-1zM338 279h1v1h-1zM362 279h1v1h-1zM97 280h1v1h-1zM120 280h1v1h-1zM125 280h1v1h-1zM141 280h1v1h-1zM153 280h1v1h-1zM163 280h1v1h-1zM181 280h1v1h-1zM184 280h1v1h-1zM210 280h1v1h-1zM240 280h2v1h-2zM262 280h1v1h-1zM285 280h1v1h-1zM308 280h1v1h-1zM316 280h1v1h-1zM330 280h1v1h-1zM339 280h1v1h-1zM362 280h1v1h-1zM98 281h1v1h-1zM120 281h1v1h-1zM126 281h1v1h-1zM141 281h1v1h-1zM154 281h1v1h-1zM163 281h1v1h-1zM182 281h1v1h-1zM184 281h1v1h-1zM211 281h1v1h-1zM239 281h1v1h-1zM262 281h1v1h-1zM283 281h3v1h-3zM307 281h1v1h-1zM316 281h1v1h-1zM330 281h1v1h-1zM339 281h1v1h-1zM362 281h1v1h-1zM99 282h1v1h-1zM120 282h1v1h-1zM127 282h1v1h-1zM141 282h1v1h-1zM155 282h1v1h-1zM163 282h1v1h-1zM183 282h2v1h-2zM211 282h1v1h-1zM237 282h2v1h-2zM261 282h1v1h-1zM281 282h2v1h-2zM284 282h1v1h-1zM307 282h1v1h-1zM317 282h1v1h-1zM330 282h1v1h-1zM339 282h1v1h-1zM363 282h1v1h-1zM100 283h1v1h-1zM120 283h1v1h-1zM128 283h1v1h-1zM141 283h1v1h-1zM156 283h1v1h-1zM163 283h1v1h-1zM184 283h1v1h-1zM212 283h1v1h-1zM235 283h2v1h-2zM261 283h1v1h-1zM279 283h2v1h-2zM284 283h1v1h-1zM307 283h1v1h-1zM317 283h1v1h-1zM329 283h1v1h-1zM340 283h1v1h-1zM363 283h1v1h-1zM101 284h1v1h-1zM120 284h1v1h-1zM129 284h1v1h-1zM141 284h1v1h-1zM157 284h1v1h-1zM163 284h1v1h-1zM184 284h2v1h-2zM213 284h1v1h-1zM233 284h2v1h-2zM261 284h1v1h-1zM278 284h1v1h-1zM284 284h1v1h-1zM306 284h1v1h-1zM317 284h1v1h-1zM329 284h1v1h-1zM340 284h1v1h-1zM363 284h1v1h-1zM102 285h1v1h-1zM120 285h1v1h-1zM130 285h1v1h-1zM141 285h1v1h-1zM158 285h1v1h-1zM163 285h1v1h-1zM184 285h2v1h-2zM214 285h1v1h-1zM232 285h1v1h-1zM260 285h1v1h-1zM276 285h2v1h-2zM283 285h1v1h-1zM306 285h1v1h-1zM318 285h1v1h-1zM329 285h1v1h-1zM340 285h1v1h-1zM364 285h1v1h-1zM102 286h1v1h-1zM120 286h1v1h-1zM131 286h1v1h-1zM141 286h1v1h-1zM158 286h1v1h-1zM163 286h1v1h-1zM184 286h1v1h-1zM186 286h1v1h-1zM215 286h1v1h-1zM230 286h2v1h-2zM260 286h1v1h-1zM274 286h2v1h-2zM283 286h1v1h-1zM306 286h1v1h-1zM318 286h1v1h-1zM328 286h1v1h-1zM341 286h1v1h-1zM364 286h1v1h-1zM103 287h1v1h-1zM120 287h1v1h-1zM131 287h1v1h-1zM141 287h1v1h-1zM159 287h1v1h-1zM163 287h1v1h-1zM184 287h4v1h-4zM216 287h1v1h-1zM228 287h2v1h-2zM260 287h1v1h-1zM272 287h2v1h-2zM283 287h1v1h-1zM305 287h1v1h-1zM316 287h2v1h-2zM328 287h1v1h-1zM341 287h1v1h-1zM364 287h1v1h-1zM104 288h1v1h-1zM120 288h1v1h-1zM132 288h1v1h-1zM141 288h1v1h-1zM160 288h1v1h-1zM163 288h1v1h-1zM187 288h6v1h-6zM217 288h1v1h-1zM227 288h1v1h-1zM259 288h1v1h-1zM271 288h1v1h-1zM282 288h1v1h-1zM305 288h1v1h-1zM314 288h2v1h-2zM328 288h1v1h-1zM341 288h1v1h-1zM365 288h1v1h-1zM105 289h1v1h-1zM120 289h1v1h-1zM133 289h1v1h-1zM141 289h1v1h-1zM161 289h1v1h-1zM163 289h1v1h-1zM189 289h1v1h-1zM193 289h5v1h-5zM217 289h1v1h-1zM225 289h2v1h-2zM259 289h1v1h-1zM269 289h2v1h-2zM282 289h1v1h-1zM304 289h1v1h-1zM312 289h2v1h-2zM327 289h1v1h-1zM342 289h1v1h-1zM365 289h1v1h-1zM106 290h1v1h-1zM120 290h1v1h-1zM134 290h1v1h-1zM141 290h1v1h-1zM162 290h2v1h-2zM190 290h1v1h-1zM198 290h6v1h-6zM218 290h1v1h-1zM223 290h2v1h-2zM259 290h1v1h-1zM267 290h2v1h-2zM281 290h1v1h-1zM304 290h1v1h-1zM311 290h1v1h-1zM327 290h1v1h-1zM342 290h1v1h-1zM366 290h1v1h-1zM107 291h1v1h-1zM120 291h1v1h-1zM135 291h1v1h-1zM141 291h1v1h-1zM163 291h1v1h-1zM191 291h1v1h-1zM204 291h5v1h-5zM219 291h1v1h-1zM221 291h2v1h-2zM258 291h1v1h-1zM265 291h2v1h-2zM281 291h1v1h-1zM304 291h1v1h-1zM309 291h2v1h-2zM326 291h1v1h-1zM343 291h1v1h-1zM366 291h1v1h-1zM107 292h1v1h-1zM120 292h1v1h-1zM136 292h1v1h-1zM141 292h1v1h-1zM163 292h2v1h-2zM191 292h1v1h-1zM209 292h6v1h-6zM220 292h1v1h-1zM258 292h1v1h-1zM264 292h1v1h-1zM281 292h1v1h-1zM303 292h1v1h-1zM307 292h2v1h-2zM326 292h1v1h-1zM343 292h1v1h-1zM366 292h1v1h-1zM108 293h1v1h-1zM120 293h1v1h-1zM136 293h1v1h-1zM141 293h1v1h-1zM163 293h2v1h-2zM192 293h1v1h-1zM215 293h5v1h-5zM258 293h1v1h-1zM262 293h2v1h-2zM280 293h1v1h-1zM303 293h1v1h-1zM306 293h1v1h-1zM326 293h1v1h-1zM343 293h1v1h-1zM367 293h1v1h-1zM109 294h1v1h-1zM120 294h1v1h-1zM137 294h1v1h-1zM141 294h1v1h-1zM163 294h1v1h-1zM165 294h1v1h-1zM193 294h1v1h-1zM220 294h5v1h-5zM257 294h1v1h-1zM260 294h2v1h-2zM280 294h1v1h-1zM303 294h3v1h-3zM325 294h1v1h-1zM344 294h1v1h-1zM367 294h1v1h-1zM110 295h1v1h-1zM120 295h1v1h-1zM138 295h1v1h-1zM141 295h1v1h-1zM163 295h1v1h-1zM166 295h1v1h-1zM194 295h1v1h-1zM225 295h6v1h-6zM257 295h3v1h-3zM280 295h1v1h-1zM302 295h2v1h-2zM325 295h1v1h-1zM344 295h1v1h-1zM367 295h1v1h-1zM111 296h1v1h-1zM120 296h1v1h-1zM139 296h1v1h-1zM141 296h1v1h-1zM163 296h1v1h-1zM167 296h1v1h-1zM195 296h1v1h-1zM231 296h5v1h-5zM256 296h2v1h-2zM279 296h1v1h-1zM300 296h3v1h-3zM325 296h1v1h-1zM342 296h2v1h-2zM368 296h1v1h-1zM112 297h1v1h-1zM120 297h1v1h-1zM140 297h2v1h-2zM163 297h1v1h-1zM168 297h1v1h-1zM196 297h1v1h-1zM236 297h6v1h-6zM255 297h2v1h-2zM279 297h1v1h-1zM299 297h1v1h-1zM302 297h1v1h-1zM324 297h1v1h-1zM340 297h2v1h-2zM368 297h1v1h-1zM112 298h1v1h-1zM120 298h1v1h-1zM141 298h1v1h-1zM163 298h1v1h-1zM169 298h1v1h-1zM196 298h1v1h-1zM242 298h5v1h-5zM253 298h2v1h-2zM256 298h1v1h-1zM279 298h1v1h-1zM297 298h2v1h-2zM301 298h1v1h-1zM324 298h1v1h-1zM338 298h2v1h-2zM368 298h1v1h-1zM113 299h1v1h-1zM120 299h1v1h-1zM141 299h2v1h-2zM163 299h1v1h-1zM169 299h1v1h-1zM197 299h1v1h-1zM247 299h6v1h-6zM255 299h1v1h-1zM278 299h1v1h-1zM295 299h2v1h-2zM301 299h1v1h-1zM324 299h1v1h-1zM337 299h1v1h-1zM369 299h1v1h-1zM114 300h1v1h-1zM120 300h1v1h-1zM141 300h2v1h-2zM163 300h1v1h-1zM170 300h1v1h-1zM198 300h1v1h-1zM250 300h1v1h-1zM253 300h3v1h-3zM278 300h1v1h-1zM293 300h2v1h-2zM300 300h1v1h-1zM323 300h1v1h-1zM335 300h2v1h-2zM369 300h1v1h-1zM115 301h1v1h-1zM120 301h1v1h-1zM141 301h1v1h-1zM143 301h1v1h-1zM163 301h1v1h-1zM171 301h1v1h-1zM199 301h1v1h-1zM248 301h2v1h-2zM277 301h1v1h-1zM292 301h1v1h-1zM300 301h1v1h-1zM323 301h1v1h-1zM333 301h2v1h-2zM370 301h1v1h-1zM116 302h1v1h-1zM120 302h1v1h-1zM141 302h1v1h-1zM144 302h1v1h-1zM163 302h1v1h-1zM172 302h1v1h-1zM200 302h1v1h-1zM246 302h2v1h-2zM277 302h1v1h-1zM290 302h2v1h-2zM300 302h1v1h-1zM322 302h1v1h-1zM332 302h1v1h-1zM370 302h1v1h-1zM117 303h1v1h-1zM120 303h1v1h-1zM141 303h1v1h-1zM145 303h1v1h-1zM163 303h1v1h-1zM173 303h1v1h-1zM201 303h1v1h-1zM244 303h2v1h-2zM277 303h1v1h-1zM288 303h2v1h-2zM299 303h1v1h-1zM322 303h1v1h-1zM330 303h2v1h-2zM370 303h1v1h-1zM118 304h1v1h-1zM120 304h1v1h-1zM141 304h1v1h-1zM146 304h1v1h-1zM163 304h1v1h-1zM174 304h1v1h-1zM202 304h1v1h-1zM243 304h1v1h-1zM276 304h1v1h-1zM287 304h1v1h-1zM299 304h1v1h-1zM322 304h1v1h-1zM328 304h2v1h-2zM371 304h1v1h-1zM118 305h1v1h-1zM120 305h1v1h-1zM141 305h1v1h-1zM147 305h1v1h-1zM163 305h3v1h-3zM175 305h1v1h-1zM202 305h1v1h-1zM241 305h2v1h-2zM276 305h1v1h-1zM285 305h2v1h-2zM299 305h1v1h-1zM321 305h1v1h-1zM326 305h2v1h-2zM371 305h1v1h-1zM119 306h2v1h-2zM141 306h1v1h-1zM147 306h1v1h-1zM166 306h6v1h-6zM175 306h1v1h-1zM203 306h1v1h-1zM239 306h2v1h-2zM276 306h1v1h-1zM283 306h2v1h-2zM298 306h1v1h-1zM321 306h1v1h-1zM325 306h1v1h-1zM369 306h2v1h-2zM120 307h1v1h-1zM141 307h1v1h-1zM148 307h1v1h-1zM172 307h5v1h-5zM204 307h1v1h-1zM237 307h2v1h-2zM275 307h1v1h-1zM281 307h2v1h-2zM298 307h1v1h-1zM321 307h1v1h-1zM323 307h2v1h-2zM367 307h2v1h-2zM120 308h2v1h-2zM141 308h1v1h-1zM149 308h1v1h-1zM177 308h6v1h-6zM205 308h1v1h-1zM236 308h1v1h-1zM275 308h1v1h-1zM280 308h1v1h-1zM298 308h1v1h-1zM320 308h3v1h-3zM365 308h2v1h-2zM120 309h1v1h-1zM122 309h1v1h-1zM141 309h1v1h-1zM150 309h1v1h-1zM178 309h1v1h-1zM183 309h6v1h-6zM206 309h1v1h-1zM234 309h2v1h-2zM275 309h1v1h-1zM278 309h2v1h-2zM297 309h1v1h-1zM319 309h2v1h-2zM364 309h1v1h-1zM120 310h1v1h-1zM123 310h1v1h-1zM141 310h1v1h-1zM151 310h1v1h-1zM179 310h1v1h-1zM189 310h5v1h-5zM207 310h1v1h-1zM232 310h2v1h-2zM274 310h1v1h-1zM276 310h2v1h-2zM297 310h1v1h-1zM318 310h1v1h-1zM320 310h1v1h-1zM362 310h2v1h-2zM120 311h1v1h-1zM123 311h1v1h-1zM141 311h1v1h-1zM152 311h1v1h-1zM180 311h1v1h-1zM194 311h6v1h-6zM207 311h1v1h-1zM230 311h2v1h-2zM274 311h2v1h-2zM296 311h1v1h-1zM316 311h2v1h-2zM319 311h1v1h-1zM360 311h2v1h-2zM120 312h1v1h-1zM124 312h1v1h-1zM141 312h1v1h-1zM153 312h1v1h-1zM181 312h1v1h-1zM200 312h5v1h-5zM208 312h1v1h-1zM229 312h1v1h-1zM273 312h1v1h-1zM296 312h1v1h-1zM314 312h2v1h-2zM319 312h1v1h-1zM358 312h2v1h-2zM120 313h1v1h-1zM125 313h1v1h-1zM141 313h1v1h-1zM153 313h1v1h-1zM181 313h1v1h-1zM205 313h6v1h-6zM227 313h2v1h-2zM271 313h3v1h-3zM296 313h1v1h-1zM313 313h1v1h-1zM318 313h1v1h-1zM357 313h1v1h-1zM120 314h1v1h-1zM126 314h1v1h-1zM141 314h1v1h-1zM154 314h1v1h-1zM182 314h1v1h-1zM210 314h7v1h-7zM225 314h2v1h-2zM269 314h2v1h-2zM273 314h1v1h-1zM295 314h1v1h-1zM311 314h2v1h-2zM318 314h1v1h-1zM355 314h2v1h-2zM120 315h1v1h-1zM127 315h1v1h-1zM141 315h1v1h-1zM155 315h1v1h-1zM183 315h1v1h-1zM211 315h1v1h-1zM217 315h5v1h-5zM223 315h2v1h-2zM268 315h1v1h-1zM272 315h1v1h-1zM295 315h1v1h-1zM309 315h2v1h-2zM318 315h1v1h-1zM353 315h2v1h-2zM120 316h1v1h-1zM128 316h1v1h-1zM141 316h1v1h-1zM156 316h1v1h-1zM184 316h1v1h-1zM212 316h1v1h-1zM222 316h6v1h-6zM266 316h2v1h-2zM272 316h1v1h-1zM295 316h1v1h-1zM307 316h2v1h-2zM317 316h1v1h-1zM352 316h1v1h-1zM120 317h1v1h-1zM128 317h1v1h-1zM141 317h1v1h-1zM157 317h1v1h-1zM185 317h1v1h-1zM212 317h1v1h-1zM220 317h2v1h-2zM228 317h5v1h-5zM264 317h2v1h-2zM272 317h1v1h-1zM294 317h1v1h-1zM306 317h1v1h-1zM317 317h1v1h-1zM350 317h2v1h-2zM120 318h1v1h-1zM129 318h1v1h-1zM141 318h1v1h-1zM158 318h1v1h-1zM186 318h1v1h-1zM213 318h1v1h-1zM218 318h2v1h-2zM233 318h6v1h-6zM262 318h2v1h-2zM271 318h1v1h-1zM294 318h1v1h-1zM304 318h2v1h-2zM317 318h1v1h-1zM348 318h2v1h-2zM120 319h1v1h-1zM130 319h1v1h-1zM141 319h1v1h-1zM159 319h1v1h-1zM186 319h1v1h-1zM214 319h1v1h-1zM216 319h2v1h-2zM239 319h5v1h-5zM261 319h1v1h-1zM271 319h1v1h-1zM294 319h1v1h-1zM302 319h2v1h-2zM316 319h1v1h-1zM346 319h2v1h-2zM120 320h1v1h-1zM131 320h1v1h-1zM141 320h1v1h-1zM159 320h1v1h-1zM187 320h1v1h-1zM215 320h1v1h-1zM244 320h6v1h-6zM259 320h2v1h-2zM270 320h1v1h-1zM293 320h1v1h-1zM301 320h1v1h-1zM316 320h1v1h-1zM345 320h1v1h-1zM120 321h1v1h-1zM132 321h1v1h-1zM141 321h1v1h-1zM160 321h1v1h-1zM188 321h1v1h-1zM250 321h6v1h-6zM257 321h2v1h-2zM270 321h1v1h-1zM293 321h1v1h-1zM299 321h2v1h-2zM316 321h1v1h-1zM343 321h2v1h-2zM120 322h1v1h-1zM133 322h1v1h-1zM141 322h1v1h-1zM161 322h1v1h-1zM189 322h1v1h-1zM256 322h5v1h-5zM270 322h1v1h-1zM292 322h1v1h-1zM297 322h2v1h-2zM315 322h1v1h-1zM341 322h2v1h-2zM120 323h1v1h-1zM134 323h1v1h-1zM141 323h3v1h-3zM162 323h1v1h-1zM190 323h1v1h-1zM254 323h2v1h-2zM261 323h6v1h-6zM269 323h1v1h-1zM292 323h1v1h-1zM295 323h2v1h-2zM315 323h1v1h-1zM339 323h2v1h-2zM120 324h1v1h-1zM134 324h1v1h-1zM144 324h6v1h-6zM163 324h1v1h-1zM191 324h1v1h-1zM252 324h2v1h-2zM267 324h3v1h-3zM292 324h1v1h-1zM294 324h1v1h-1zM314 324h1v1h-1zM338 324h1v1h-1zM120 325h1v1h-1zM135 325h1v1h-1zM150 325h6v1h-6zM164 325h1v1h-1zM192 325h1v1h-1zM250 325h2v1h-2zM291 325h3v1h-3zM314 325h1v1h-1zM336 325h2v1h-2zM120 326h1v1h-1zM136 326h1v1h-1zM156 326h5v1h-5zM164 326h1v1h-1zM192 326h1v1h-1zM249 326h1v1h-1zM290 326h2v1h-2zM314 326h1v1h-1zM334 326h2v1h-2zM120 327h1v1h-1zM137 327h1v1h-1zM161 327h6v1h-6zM193 327h1v1h-1zM247 327h2v1h-2zM288 327h2v1h-2zM291 327h1v1h-1zM313 327h1v1h-1zM332 327h2v1h-2zM120 328h1v1h-1zM138 328h1v1h-1zM166 328h7v1h-7zM194 328h1v1h-1zM245 328h2v1h-2zM287 328h1v1h-1zM290 328h1v1h-1zM313 328h1v1h-1zM331 328h1v1h-1zM120 329h1v1h-1zM139 329h1v1h-1zM167 329h1v1h-1zM173 329h5v1h-5zM195 329h1v1h-1zM243 329h2v1h-2zM285 329h2v1h-2zM290 329h1v1h-1zM313 329h1v1h-1zM329 329h2v1h-2zM120 330h1v1h-1zM139 330h1v1h-1zM168 330h1v1h-1zM178 330h6v1h-6zM196 330h1v1h-1zM242 330h1v1h-1zM283 330h2v1h-2zM290 330h1v1h-1zM312 330h1v1h-1zM327 330h2v1h-2zM120 331h1v1h-1zM140 331h1v1h-1zM169 331h1v1h-1zM184 331h6v1h-6zM197 331h1v1h-1zM240 331h2v1h-2zM282 331h1v1h-1zM289 331h1v1h-1zM312 331h1v1h-1zM326 331h1v1h-1zM120 332h1v1h-1zM141 332h1v1h-1zM170 332h1v1h-1zM190 332h5v1h-5zM197 332h1v1h-1zM238 332h2v1h-2zM280 332h2v1h-2zM289 332h1v1h-1zM312 332h1v1h-1zM324 332h2v1h-2zM120 333h1v1h-1zM142 333h1v1h-1zM170 333h1v1h-1zM195 333h6v1h-6zM237 333h1v1h-1zM278 333h2v1h-2zM288 333h1v1h-1zM311 333h1v1h-1zM322 333h2v1h-2zM120 334h1v1h-1zM143 334h1v1h-1zM171 334h1v1h-1zM199 334h1v1h-1zM201 334h6v1h-6zM235 334h2v1h-2zM276 334h2v1h-2zM288 334h1v1h-1zM311 334h1v1h-1zM320 334h2v1h-2zM120 335h1v1h-1zM144 335h1v1h-1zM172 335h1v1h-1zM200 335h1v1h-1zM207 335h6v1h-6zM233 335h2v1h-2zM275 335h1v1h-1zM288 335h1v1h-1zM310 335h1v1h-1zM319 335h1v1h-1zM120 336h1v1h-1zM145 336h1v1h-1zM173 336h1v1h-1zM201 336h1v1h-1zM213 336h5v1h-5zM231 336h2v1h-2zM273 336h2v1h-2zM287 336h1v1h-1zM310 336h1v1h-1zM317 336h2v1h-2zM120 337h1v1h-1zM145 337h1v1h-1zM174 337h1v1h-1zM202 337h1v1h-1zM218 337h6v1h-6zM230 337h1v1h-1zM271 337h2v1h-2zM287 337h1v1h-1zM310 337h1v1h-1zM315 337h2v1h-2zM120 338h1v1h-1zM146 338h1v1h-1zM175 338h1v1h-1zM203 338h1v1h-1zM224 338h6v1h-6zM269 338h2v1h-2zM287 338h1v1h-1zM309 338h1v1h-1zM313 338h2v1h-2zM120 339h1v1h-1zM147 339h1v1h-1zM175 339h1v1h-1zM203 339h1v1h-1zM226 339h2v1h-2zM230 339h5v1h-5zM268 339h1v1h-1zM286 339h1v1h-1zM309 339h1v1h-1zM312 339h1v1h-1zM120 340h1v1h-1zM148 340h1v1h-1zM176 340h1v1h-1zM204 340h1v1h-1zM224 340h2v1h-2zM235 340h6v1h-6zM266 340h2v1h-2zM286 340h1v1h-1zM309 340h3v1h-3zM120 341h3v1h-3zM149 341h1v1h-1zM177 341h1v1h-1zM205 341h1v1h-1zM223 341h1v1h-1zM241 341h6v1h-6zM264 341h2v1h-2zM286 341h1v1h-1zM308 341h2v1h-2zM123 342h6v1h-6zM150 342h1v1h-1zM178 342h1v1h-1zM206 342h1v1h-1zM221 342h2v1h-2zM247 342h5v1h-5zM263 342h1v1h-1zM285 342h1v1h-1zM306 342h3v1h-3zM129 343h6v1h-6zM150 343h1v1h-1zM179 343h1v1h-1zM207 343h1v1h-1zM219 343h2v1h-2zM252 343h6v1h-6zM261 343h2v1h-2zM285 343h1v1h-1zM305 343h1v1h-1zM308 343h1v1h-1zM135 344h5v1h-5zM151 344h1v1h-1zM180 344h1v1h-1zM208 344h1v1h-1zM218 344h1v1h-1zM258 344h6v1h-6zM284 344h1v1h-1zM303 344h2v1h-2zM307 344h1v1h-1zM140 345h6v1h-6zM152 345h1v1h-1zM181 345h1v1h-1zM208 345h1v1h-1zM216 345h2v1h-2zM257 345h2v1h-2zM264 345h5v1h-5zM284 345h1v1h-1zM301 345h2v1h-2zM307 345h1v1h-1zM146 346h6v1h-6zM153 346h1v1h-1zM181 346h1v1h-1zM209 346h1v1h-1zM214 346h2v1h-2zM256 346h1v1h-1zM269 346h6v1h-6zM284 346h1v1h-1zM300 346h1v1h-1zM306 346h1v1h-1zM152 347h6v1h-6zM182 347h1v1h-1zM210 347h1v1h-1zM212 347h2v1h-2zM254 347h2v1h-2zM275 347h6v1h-6zM283 347h1v1h-1zM298 347h2v1h-2zM306 347h1v1h-1zM155 348h1v1h-1zM158 348h5v1h-5zM183 348h1v1h-1zM211 348h1v1h-1zM252 348h2v1h-2zM281 348h3v1h-3zM296 348h2v1h-2zM306 348h1v1h-1zM155 349h1v1h-1zM163 349h6v1h-6zM184 349h1v1h-1zM250 349h2v1h-2zM294 349h2v1h-2zM305 349h1v1h-1zM156 350h1v1h-1zM169 350h6v1h-6zM185 350h1v1h-1zM249 350h1v1h-1zM293 350h1v1h-1zM305 350h1v1h-1zM157 351h1v1h-1zM175 351h5v1h-5zM186 351h1v1h-1zM247 351h2v1h-2zM291 351h2v1h-2zM305 351h1v1h-1zM158 352h1v1h-1zM180 352h7v1h-7zM245 352h2v1h-2zM289 352h2v1h-2zM304 352h1v1h-1zM159 353h1v1h-1zM186 353h6v1h-6zM244 353h1v1h-1zM287 353h2v1h-2zM304 353h1v1h-1zM160 354h1v1h-1zM188 354h1v1h-1zM192 354h6v1h-6zM242 354h2v1h-2zM286 354h1v1h-1zM304 354h1v1h-1zM161 355h1v1h-1zM189 355h1v1h-1zM198 355h5v1h-5zM240 355h2v1h-2zM284 355h2v1h-2zM303 355h1v1h-1zM161 356h1v1h-1zM190 356h1v1h-1zM203 356h6v1h-6zM238 356h2v1h-2zM282 356h2v1h-2zM303 356h1v1h-1zM162 357h1v1h-1zM191 357h1v1h-1zM209 357h6v1h-6zM237 357h1v1h-1zM280 357h2v1h-2zM302 357h1v1h-1zM163 358h1v1h-1zM192 358h1v1h-1zM215 358h5v1h-5zM235 358h2v1h-2zM279 358h1v1h-1zM302 358h1v1h-1zM164 359h1v1h-1zM192 359h1v1h-1zM220 359h6v1h-6zM233 359h2v1h-2zM277 359h2v1h-2zM302 359h1v1h-1zM165 360h1v1h-1zM193 360h1v1h-1zM226 360h7v1h-7zM275 360h2v1h-2zM301 360h1v1h-1zM166 361h1v1h-1zM194 361h1v1h-1zM230 361h8v1h-8zM273 361h2v1h-2zM301 361h1v1h-1zM166 362h1v1h-1zM195 362h1v1h-1zM228 362h2v1h-2zM238 362h5v1h-5zM272 362h1v1h-1zM301 362h1v1h-1zM167 363h1v1h-1zM196 363h1v1h-1zM226 363h2v1h-2zM243 363h6v1h-6zM270 363h2v1h-2zM300 363h1v1h-1zM168 364h1v1h-1zM197 364h1v1h-1zM225 364h1v1h-1zM249 364h6v1h-6zM268 364h2v1h-2zM300 364h1v1h-1zM169 365h1v1h-1zM198 365h1v1h-1zM223 365h2v1h-2zM255 365h5v1h-5zM267 365h1v1h-1zM300 365h1v1h-1zM170 366h1v1h-1zM198 366h1v1h-1zM221 366h2v1h-2zM260 366h7v1h-7zM299 366h1v1h-1zM171 367h1v1h-1zM199 367h1v1h-1zM219 367h2v1h-2zM263 367h2v1h-2zM266 367h6v1h-6zM299 367h1v1h-1zM171 368h1v1h-1zM200 368h1v1h-1zM218 368h1v1h-1zM261 368h2v1h-2zM272 368h6v1h-6zM298 368h1v1h-1zM172 369h1v1h-1zM201 369h1v1h-1zM216 369h2v1h-2zM260 369h1v1h-1zM278 369h5v1h-5zM298 369h1v1h-1zM173 370h1v1h-1zM202 370h1v1h-1zM214 370h2v1h-2zM258 370h2v1h-2zM283 370h6v1h-6zM298 370h1v1h-1zM174 371h1v1h-1zM203 371h1v1h-1zM213 371h1v1h-1zM256 371h2v1h-2zM289 371h6v1h-6zM297 371h1v1h-1zM175 372h1v1h-1zM203 372h1v1h-1zM211 372h2v1h-2zM254 372h2v1h-2zM295 372h3v1h-3zM176 373h1v1h-1zM204 373h1v1h-1zM209 373h2v1h-2zM253 373h1v1h-1zM177 374h1v1h-1zM205 374h1v1h-1zM207 374h2v1h-2zM251 374h2v1h-2zM177 375h1v1h-1zM206 375h1v1h-1zM249 375h2v1h-2zM178 376h1v1h-1zM247 376h2v1h-2zM179 377h1v1h-1zM246 377h1v1h-1zM180 378h1v1h-1zM244 378h2v1h-2zM181 379h1v1h-1zM242 379h2v1h-2zM182 380h1v1h-1zM241 380h1v1h-1zM182 381h1v1h-1zM239 381h2v1h-2zM183 382h1v1h-1zM237 382h2v1h-2zM184 383h1v1h-1zM235 383h2v1h-2zM185 384h1v1h-1zM234 384h1v1h-1zM186 385h1v1h-1zM232 385h2v1h-2zM187 386h1v1h-1zM230 386h2v1h-2zM188 387h1v1h-1zM228 387h2v1h-2zM188 388h1v1h-1zM227 388h1v1h-1zM189 389h1v1h-1zM225 389h2v1h-2zM190 390h1v1h-1zM223 390h2v1h-2zM191 391h1v1h-1zM221 391h2v1h-2zM192 392h1v1h-1zM220 392h1v1h-1zM193 393h1v1h-1zM218 393h2v1h-2zM193 394h1v1h-1zM216 394h2v1h-2zM194 395h1v1h-1zM215 395h1v1h-1zM195 396h1v1h-1zM213 396h2v1h-2zM196 397h1v1h-1zM211 397h2v1h-2zM197 398h1v1h-1zM209 398h2v1h-2zM198 399h1v1h-1zM208 399h1v1h-1zM198 400h1v1h-1zM206 400h2v1h-2zM199 401h1v1h-1zM204 401h2v1h-2zM200 402h1v1h-1zM202 402h2v1h-2zM201 403h1v1h-1z"/></svg>

<svg width="825" height="562" style="pointer-events:none">
<defs>
<filter id="blur" x="-50%" y="-50%" width="200%" height="200%"><feGaussianBlur stdDeviation="2.5"/></filter>
<linearGradient id="bodyg" x1="0" x2="1"><stop offset="0" stop-color="#8a3c90"/><stop offset=".25" stop-color="#b05cb6"/><stop offset=".6" stop-color="#a24aa8"/><stop offset="1" stop-color="#6a2a70"/></linearGradient>
<radialGradient id="lidg" cx="35%" cy="35%" r="75%"><stop offset="0" stop-color="#c86cd0"/><stop offset="1" stop-color="#9a42a2"/></radialGradient>
</defs>
<path d="M89 398 L98 401 L97 437 L90 442 Z" fill="#606060" opacity=".6" filter="url(#blur)"/>
<path d="M62.5 405 L92.5 405 L85.5 432 Q76 437 67 432 Z" fill="url(#bodyg)"/>
<path d="M67 409 L70 432 M72.5 409 L74 434 M78 409 L78 434 M83.5 409 L81.5 433 M88.5 408 L84.5 432" stroke="#7a3082" stroke-width="1.4" opacity=".75"/>
<path d="M65 409 L68 432 M70 409 L72 433 M75.5 409 L76 434 M81 409 L80 434 M86 408 L83 433" stroke="#c27ac8" stroke-width="1" opacity=".55"/>
<ellipse cx="77" cy="400" rx="18.3" ry="8.3" fill="#4e1e4e"/>
<ellipse cx="77" cy="396.5" rx="18.3" ry="8.6" fill="url(#lidg)"/>
<ellipse cx="76.8" cy="395.3" rx="14" ry="5.7" fill="#b458bc"/><ellipse cx="76" cy="395.2" rx="11.5" ry="4.6" fill="#c86cd0" opacity=".85"/>
<path d="M63.7 396.7 A13.6 5.4 0 0 1 72.2 390.2" fill="none" stroke="#1e0a20" stroke-width="1.9"/>
<path d="M73 397.4 L81 392.2" stroke="#f0d8f0" stroke-width="1.6" stroke-linecap="round"/><circle cx="73.3" cy="397.2" r="1.1" fill="#fff"/>
<path d="M83.5 433 L84.8 428.5" stroke="#1a0a1a" stroke-width="1.6"/>
<ellipse cx="87.2" cy="437" rx="4.8" ry="2.3" fill="#c066c8" transform="rotate(-18 87.2 437)"/>
</svg>
<div id="ws" class="abs"></div>
<div id="ws-sep" class="abs"></div>
<div class="abs" style="left:403px;top:182px;width:2px;height:270px;background:linear-gradient(90deg,#9c9c9c 50%,#8e8e8e 50%)"></div>
<div class="abs" style="left:402px;top:182px;width:1px;height:270px;background:#b2b2b2"></div>
<div id="ws-body" class="abs"></div>
<div id="ws-sel" class="abs"></div>
<div id="ws-sel2" class="abs"></div>
<div class="abs" style="left:406px;top:185px;width:1px;height:270px;background:#fbfdfb"></div>
<div class="abs" style="left:405px;top:184px;width:3px;height:1px;background:#ff0000"></div>
<div class="abs ttl" style="left:640px;top:163px;letter-spacing:1.1px">Workspace</div>
<div class="abs pane " style="left:407px;top:185px;line-height:14px;letter-spacing:1.167px">| bic |</div>
<div class="abs pane " style="left:408px;top:199px;line-height:14px;letter-spacing:1.015px">bic := Pen new.</div>
<div class="abs pane " style="left:408px;top:213px;line-height:14px;letter-spacing:1.034px">bic up;</div>
<div class="abs pane " style="left:408px;top:227px;line-height:14px;letter-spacing:0.06px">goto: 200@200.</div>
<div class="abs pane " style="left:408px;top:241px;line-height:14px;letter-spacing:0.927px">bic down.</div>
<div class="abs pane " style="left:407px;top:255px;line-height:14px;letter-spacing:0.984px">1 to: 50 do: [: i| bic go: i*4. bic turn: 80 ].</div>

<div id="br" class="abs"></div>
<div class="abs" style="left:210px;top:464px;width:2px;height:100px;background:#8fbb70"></div>
<div class="abs" style="left:208px;top:456px;width:2px;height:110px;background:linear-gradient(180deg,#c5e5a5,#b4e08c 6px)"></div>
<div class="abs list" style="left:212px;width:239px"></div>
<div class="abs sb" style="left:451px"></div>
<div class="abs sep" style="left:461px;width:4px"></div>
<div class="abs list" style="left:465px;width:234px"></div>
<div class="abs sb" style="left:699px"></div>
<div class="abs sep" style="left:709px;width:4px"></div>
<div class="abs list" style="left:713px;width:120px"></div>
<div class="abs hl" style="left:465px;top:514px;width:234px"></div>
<div class="abs hl" style="left:716px;top:514px;width:120px"></div>
<svg width="825" height="562" style="pointer-events:none"><defs><radialGradient id="cg414" cx="35%" cy="30%" r="75%"><stop offset="0" stop-color="#ffffff"/><stop offset=".5" stop-color="#f0dada"/><stop offset="1" stop-color="#d39a9a"/></radialGradient></defs><circle cx="414" cy="172" r="8.5" fill="url(#cg414)" stroke="#a82020" stroke-width="1.1"/><path d="M410.2 168.2L418.2 176.2M418.2 168.2L410.2 176.2" stroke="#000" stroke-width="2.3" stroke-linecap="butt"/></svg><svg width="825" height="562" style="pointer-events:none"><defs><radialGradient id="mg433" cx="35%" cy="30%" r="75%"><stop offset="0" stop-color="#ffffff"/><stop offset=".55" stop-color="#ececec"/><stop offset="1" stop-color="#bdbdbd"/></radialGradient></defs><circle cx="433" cy="172" r="8.5" fill="url(#mg433)" stroke="#4a4a4a" stroke-width="1.1"/><rect x="428" y="167" width="11" height="10" fill="#000"/><rect x="429" y="168" width="9" height="3.5" fill="#fff"/><rect x="429" y="173" width="9" height="3" fill="#fff"/><rect x="430" y="169" width="1.3" height="1.3" fill="#000"/><rect x="432.5" y="169" width="2.5" height="1.2" fill="#000"/><path d="M430 171.4h2.4l-1.2 1.4zM433.2 171.4h2.4l-1.2 1.4zM436 171.4h1.8l-0.9 1.4z" fill="#fff"/><rect x="430" y="174" width="2.5" height="1.2" fill="#000"/><rect x="433.8" y="174" width="1.2" height="1.2" fill="#000"/><rect x="435.8" y="174" width="1.2" height="1.2" fill="#000"/></svg><svg width="825" height="562" style="pointer-events:none"><defs><radialGradient id="cg221" cx="35%" cy="30%" r="75%"><stop offset="0" stop-color="#ffffff"/><stop offset=".5" stop-color="#f0dada"/><stop offset="1" stop-color="#d39a9a"/></radialGradient></defs><circle cx="221" cy="454" r="8.5" fill="url(#cg221)" stroke="#c04830" stroke-width="1.1"/><path d="M217.2 450.2L225.2 458.2M225.2 450.2L217.2 458.2" stroke="#000" stroke-width="2.3" stroke-linecap="butt"/></svg><svg width="825" height="562" style="pointer-events:none"><defs><radialGradient id="mg240" cx="35%" cy="30%" r="75%"><stop offset="0" stop-color="#ffffff"/><stop offset=".55" stop-color="#ececec"/><stop offset="1" stop-color="#c6d8bc"/></radialGradient></defs><circle cx="240" cy="454" r="8.5" fill="url(#mg240)" stroke="#7fae6a" stroke-width="1.1"/><rect x="235" y="449" width="11" height="10" fill="#000"/><rect x="236" y="450" width="9" height="3.5" fill="#fff"/><rect x="236" y="455" width="9" height="3" fill="#fff"/><rect x="237" y="451" width="1.3" height="1.3" fill="#000"/><rect x="239.5" y="451" width="2.5" height="1.2" fill="#000"/><path d="M237 453.4h2.4l-1.2 1.4zM240.2 453.4h2.4l-1.2 1.4zM243 453.4h1.8l-0.9 1.4z" fill="#fff"/><rect x="237" y="456" width="2.5" height="1.2" fill="#000"/><rect x="240.8" y="456" width="1.2" height="1.2" fill="#000"/><rect x="242.8" y="456" width="1.2" height="1.2" fill="#000"/></svg><svg width="825" height="562" style="pointer-events:none"><rect x="452" y="467" width="9" height="10" fill="#a7b596"/><path d="M452 477V467H461" fill="none" stroke="#d4dcc8" stroke-width="1"/><path d="M452.5 476.5H460.5V467" fill="none" stroke="#5f6e55" stroke-width="1.2"/><path d="M453 475L456.5 469L460 475z" fill="#6e7d62"/><rect x="452" y="478" width="9" height="10" fill="#a7b596"/><path d="M452 488V478H461" fill="none" stroke="#d4dcc8" stroke-width="1"/><path d="M452.5 487.5H460.5V478" fill="none" stroke="#5f6e55" stroke-width="1.2"/><rect x="454" y="480" width="4.5" height="4.5" fill="#6e7d62"/><defs><linearGradient id="tg451" x1="0" x2="1"><stop offset="0" stop-color="#d3dfbf"/><stop offset=".35" stop-color="#c7d8ad"/><stop offset=".7" stop-color="#b6c99c"/><stop offset=".72" stop-color="#7d8d6a"/><stop offset="1" stop-color="#66745a"/></linearGradient></defs><path d="M451 514.5L454 511H458L461 514.5V556L457 561H455L451 556z" fill="url(#tg451)"/></svg><svg width="825" height="562" style="pointer-events:none"><rect x="700" y="467" width="9" height="10" fill="#a7b596"/><path d="M700 477V467H709" fill="none" stroke="#d4dcc8" stroke-width="1"/><path d="M700.5 476.5H708.5V467" fill="none" stroke="#5f6e55" stroke-width="1.2"/><path d="M701 475L704.5 469L708 475z" fill="#6e7d62"/><rect x="700" y="478" width="9" height="10" fill="#a7b596"/><path d="M700 488V478H709" fill="none" stroke="#d4dcc8" stroke-width="1"/><path d="M700.5 487.5H708.5V478" fill="none" stroke="#5f6e55" stroke-width="1.2"/><rect x="702" y="480" width="4.5" height="4.5" fill="#6e7d62"/><defs><linearGradient id="tg699" x1="0" x2="1"><stop offset="0" stop-color="#d3dfbf"/><stop offset=".35" stop-color="#c7d8ad"/><stop offset=".7" stop-color="#b6c99c"/><stop offset=".72" stop-color="#7d8d6a"/><stop offset="1" stop-color="#66745a"/></linearGradient></defs><path d="M699 491.5L702 488H706L709 491.5V570H699z" fill="url(#tg699)"/></svg>
<div class="abs ttl" style="left:632px;top:444px;letter-spacing:1.022px">System Browser: Pen</div>
<div class="abs pane " style="left:215px;top:467px;line-height:12px;letter-spacing:0.567px">Collections-Support</div>
<div class="abs pane " style="left:215px;top:479px;line-height:12px;letter-spacing:0.623px">Collections-Strings</div>
<div class="abs pane " style="left:215px;top:491px;line-height:12px;letter-spacing:0.387px">Collections-Text</div>
<div class="abs pane " style="left:215px;top:503px;line-height:12px;letter-spacing:0.56px">Collections-Unordered</div>
<div class="abs pane " style="left:215px;top:515px;line-height:12px;letter-spacing:0.547px">Collections-Weak</div>
<div class="abs pane " style="left:214px;top:527px;line-height:12px;letter-spacing:0.567px">Balloon-Collections</div>
<div class="abs pane " style="left:214px;top:539px;line-height:12px;letter-spacing:0.831px">Balloon-Engine</div>
<div class="abs pane " style="left:214px;top:551px;line-height:12px;letter-spacing:0.6px">Balloon-Fills</div>
<div class="abs pane " style="left:467px;top:467px;line-height:12px;letter-spacing:0.2px">BitBlt</div>
<div class="abs pane " style="left:467px;top:479px;line-height:12px;letter-spacing:0.8px">Bitmap</div>
<div class="abs pane " style="left:468px;top:491px;line-height:12px;letter-spacing:-0.2px">Color</div>
<div class="abs pane " style="left:468px;top:503px;line-height:12px;letter-spacing:0.313px">ColorMap</div>
<div class="abs pane red" style="left:467px;top:515px;line-height:12px;letter-spacing:1.7px">Pen</div>
<div class="abs pane " style="left:467px;top:527px;line-height:12px;letter-spacing:0.826px">PenPointRecorder</div>
<div class="abs pane " style="left:467px;top:539px;line-height:12px;letter-spacing:0.95px">Point</div>
<div class="abs pane " style="left:468px;top:551px;line-height:12px;letter-spacing:0.889px">Quadrangle</div>
<div class="abs pane " style="left:716px;top:467px;line-height:12px;letter-spacing:1.273px">-- all --</div>
<div class="abs pane " style="left:715px;top:479px;line-height:12px;letter-spacing:0.954px">initialize-release</div>
<div class="abs pane " style="left:716px;top:491px;line-height:12px;letter-spacing:0.823px">accessing</div>
<div class="abs pane " style="left:716px;top:503px;line-height:12px;letter-spacing:0.91px">operations</div>
<div class="abs pane red" style="left:716px;top:515px;line-height:12px;letter-spacing:0.825px">geometric designs</div>
<div class="abs pane " style="left:716px;top:527px;line-height:12px;letter-spacing:1.366px">private</div>

</body></html>
